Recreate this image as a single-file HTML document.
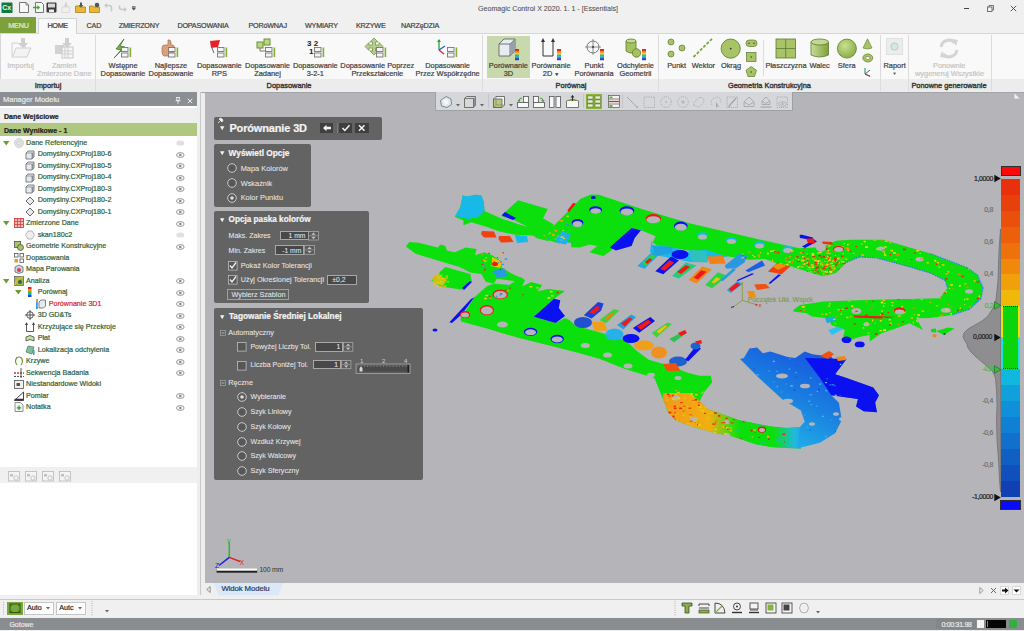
<!DOCTYPE html>
<html><head><meta charset="utf-8"><style>
html,body{margin:0;padding:0;}
body{width:1024px;height:631px;overflow:hidden;position:relative;background:#f0f0f0;font-family:"Liberation Sans",sans-serif;}
.a{position:absolute;}
.t{position:absolute;white-space:nowrap;line-height:1;font-family:"Liberation Sans",sans-serif;-webkit-text-stroke-width:0.2px;}
svg{overflow:visible}
.t[style*="color:#e9e9e9"]{-webkit-text-stroke-width:0.05px}
</style></head><body>
<div class="a" style="left:0px;top:0px;width:1024px;height:17px;background:#f0f0f0"></div>
<div class="a" style="left:0px;top:17px;width:1024px;height:16px;background:#f0f0f0"></div>
<div class="a" style="left:0px;top:33px;width:1024px;height:46px;background:#f9f9f9;border-top:1px solid #d6d6d6;box-sizing:border-box"></div>
<div class="a" style="left:0px;top:33px;width:1px;height:59px;background:#d6d6d6"></div>
<div class="a" style="left:0px;top:79px;width:1024px;height:13px;background:#ececec"></div>
<div class="a" style="left:0px;top:17px;width:36px;height:16px;background:#7da13a"></div>
<div class="t " style="left:8.2px;top:21.92px;font-size:7.3px;color:#e4edd0;font-weight:normal;letter-spacing:-0.2px">MENU</div>
<div class="a" style="left:38px;top:18px;width:39px;height:16px;background:#f9f9f9;border:1px solid #d2d2d2;border-bottom:none;box-sizing:border-box"></div>
<div class="t " style="left:47.5px;top:21.92px;font-size:7.3px;color:#3a3a3a;font-weight:normal;letter-spacing:-0.4px">HOME</div>
<div class="t " style="left:86.6px;top:21.81px;font-size:7.2px;color:#404040;font-weight:normal;"><span style="display:inline-block;transform-origin:0 0;letter-spacing:-0.2px">CAD</span></div>
<div class="t " style="left:118.8px;top:21.81px;font-size:7.2px;color:#404040;font-weight:normal;"><span style="display:inline-block;transform-origin:0 0;letter-spacing:-0.2px">ZMIERZONY</span></div>
<div class="t " style="left:177.4px;top:21.81px;font-size:7.2px;color:#404040;font-weight:normal;"><span style="display:inline-block;transform-origin:0 0;letter-spacing:-0.2px">DOPASOWANIA</span></div>
<div class="t " style="left:248.5px;top:21.81px;font-size:7.2px;color:#404040;font-weight:normal;"><span style="display:inline-block;transform-origin:0 0;letter-spacing:-0.2px">PORóWNAJ</span></div>
<div class="t " style="left:305px;top:21.81px;font-size:7.2px;color:#404040;font-weight:normal;"><span style="display:inline-block;transform-origin:0 0;letter-spacing:-0.2px">WYMIARY</span></div>
<div class="t " style="left:356px;top:21.81px;font-size:7.2px;color:#404040;font-weight:normal;"><span style="display:inline-block;transform-origin:0 0;letter-spacing:-0.2px">KRZYWE</span></div>
<div class="t " style="left:401px;top:21.81px;font-size:7.2px;color:#404040;font-weight:normal;"><span style="display:inline-block;transform-origin:0 0;letter-spacing:-0.2px">NARZęDZIA</span></div>
<div class="t " style="left:478px;top:5.79px;font-size:7.1px;color:#505050;font-weight:normal;-webkit-text-stroke-width:0.08px">Geomagic Control X 2020. 1. 1 - [Essentials]</div>
<div class="a" style="left:0px;top:92px;width:197px;height:14px;background:#8b8e92"></div>
<div class="t " style="left:3px;top:95.65px;font-size:7.5px;color:#e9eaeb;font-weight:normal;">Manager Modelu</div>
<div class="a" style="left:0px;top:106px;width:197px;height:489px;background:#ffffff"></div>
<div class="a" style="left:0px;top:108px;width:197px;height:15px;background:#efefef"></div>
<div class="t " style="left:4px;top:113.07px;font-size:7px;color:#222;font-weight:bold;">Dane Wejściowe</div>
<div class="a" style="left:0px;top:123px;width:197px;height:13px;background:#b0c77f"></div>
<div class="t " style="left:4px;top:126.57px;font-size:7px;color:#222;font-weight:bold;">Dane Wynikowe - 1</div>
<div class="a" style="left:197px;top:92px;width:8px;height:503px;background:#eeeeee"></div>
<div class="a" style="left:200px;top:92px;width:1px;height:503px;background:#c8c8c8"></div>
<div class="a" style="left:205px;top:92px;width:819px;height:491px;background:#b5b4b9"></div>
<div class="a" style="left:201px;top:92px;width:823px;height:1px;background:#a4a5a9"></div>
<div class="a" style="left:201px;top:583px;width:823px;height:12px;background:#efefef"></div>
<div class="a" style="left:0px;top:595px;width:1024px;height:4px;background:#f0f0f0"></div>
<div class="a" style="left:0px;top:599px;width:1024px;height:1px;background:#c6cac6"></div>
<div class="a" style="left:0px;top:600px;width:1024px;height:18px;background:#f0f0f0"></div>
<div class="a" style="left:0px;top:618px;width:1024px;height:11.5px;background:#8a8d90"></div>
<div class="a" style="left:0px;top:629.5px;width:1024px;height:1.5px;background:#f0f0f0"></div>
<div class="t " style="left:9.4px;top:620.77px;font-size:7px;color:#e6e6e6;font-weight:normal;">Gotowe</div>
<div class="a" style="left:95px;top:35px;width:1px;height:56px;background:#dcdcdc"></div>
<div class="a" style="left:482px;top:35px;width:1px;height:56px;background:#dcdcdc"></div>
<div class="a" style="left:658px;top:35px;width:1px;height:56px;background:#dcdcdc"></div>
<div class="a" style="left:880px;top:35px;width:1px;height:56px;background:#dcdcdc"></div>
<div class="a" style="left:907.5px;top:35px;width:1px;height:56px;background:#dcdcdc"></div>
<div class="a" style="left:990.5px;top:35px;width:1px;height:56px;background:#dcdcdc"></div>
<div class="a" style="left:762.5px;top:40px;width:1px;height:36px;background:#dcdcdc"></div>
<svg class="a" style="left:10px;top:38px;" width="22" height="21" viewBox="0 0 22 21"><path d="M2 8 L2 19 L17 19 L21 10 L6 10 L3 18" fill="#f3f3f3" stroke="#d0d0d0" stroke-width="1"/><path d="M2 8 L2 5 L8 5 L10 7 L15 7 L15 10" fill="none" stroke="#d0d0d0"/><path d="M11 0 L15 0 L15 5 L18 5 L13 10 L8 5 L11 5Z" fill="#cfcfcf"/></svg>
<div class="t" style="left:-79.4px;width:200px;text-align:center;top:62.14px;font-size:7.4px;color:#c4c4c4;font-weight:normal;">Importuj</div>
<svg class="a" style="left:54px;top:38px;" width="22" height="21" viewBox="0 0 22 21"><g fill="#d2d2d2"><rect x="1" y="7" width="9" height="9"/></g><rect x="8" y="9" width="11" height="11" fill="#f6f6f6" stroke="#c8c8c8"/><g stroke="#cfcfcf"><path d="M11 9v11M14 9v11M8 13h11M8 16h11"/></g><path d="M11 0 L15 0 L15 5 L18 5 L13 10 L8 5 L11 5Z" fill="#cfcfcf"/></svg>
<div class="t" style="left:-35.8px;width:200px;text-align:center;top:62.14px;font-size:7.4px;color:#c4c4c4;font-weight:normal;">Zamień</div>
<div class="t" style="left:-35.8px;width:200px;text-align:center;top:69.94px;font-size:7.4px;color:#c4c4c4;font-weight:normal;">Zmierzone Dane</div>
<div class="t" style="left:-52px;width:200px;text-align:center;top:81.74px;font-size:7.4px;color:#3a3a3a;font-weight:normal;-webkit-text-stroke-width:0.4px">Importuj</div>
<svg class="a" style="left:112px;top:39px;" width="22" height="20" viewBox="0 0 22 20"><path d="M12 0 L4 10 L9 11 L2 19 L13 8 L8 7 Z" fill="#72b340" stroke="#2d5a20" stroke-width="0.6"/><g transform="translate(9,8)"><rect x="0.5" y="0.5" width="6.5" height="4" fill="#f4f4f4" stroke="#777" stroke-width="0.9"/><rect x="0.5" y="6" width="6.5" height="4" fill="#f4f4f4" stroke="#777" stroke-width="0.9"/><rect x="8.6" y="0.5" width="1.6" height="9.5" fill="#7db03a"/></g></svg>
<div class="t" style="left:23px;width:200px;text-align:center;top:62.14px;font-size:7.4px;color:#3c3c3c;font-weight:normal;">Wstępne</div>
<div class="t" style="left:23px;width:200px;text-align:center;top:69.94px;font-size:7.4px;color:#3c3c3c;font-weight:normal;">Dopasowanie</div>
<svg class="a" style="left:159px;top:39px;" width="22" height="20" viewBox="0 0 22 20"><path d="M3 9 Q3 6 6 6 L9 6 L9 1 Q11 0 12 3 L12 6 L14 6 Q16 7 15 10 L14 15 Q13 17 10 17 L5 17 Q3 16 3 13Z" fill="#d8a27a" stroke="#a0704e" stroke-width="0.7"/><g transform="translate(9,8)"><rect x="0.5" y="0.5" width="6.5" height="4" fill="#f4f4f4" stroke="#777" stroke-width="0.9"/><rect x="0.5" y="6" width="6.5" height="4" fill="#f4f4f4" stroke="#777" stroke-width="0.9"/><rect x="8.6" y="0.5" width="1.6" height="9.5" fill="#7db03a"/></g></svg>
<div class="t" style="left:71px;width:200px;text-align:center;top:62.14px;font-size:7.4px;color:#3c3c3c;font-weight:normal;">Najlepsze</div>
<div class="t" style="left:71px;width:200px;text-align:center;top:69.94px;font-size:7.4px;color:#3c3c3c;font-weight:normal;">Dopasowanie</div>
<svg class="a" style="left:208px;top:39px;" width="22" height="20" viewBox="0 0 22 20"><path d="M2 2 L12 1 L10 8 L3 9Z" fill="#e8202a"/><path d="M4 9 L6 14" stroke="#666" stroke-width="1"/><g transform="translate(9,8)"><rect x="0.5" y="0.5" width="6.5" height="4" fill="#f4f4f4" stroke="#777" stroke-width="0.9"/><rect x="0.5" y="6" width="6.5" height="4" fill="#f4f4f4" stroke="#777" stroke-width="0.9"/><rect x="8.6" y="0.5" width="1.6" height="9.5" fill="#7db03a"/></g></svg>
<div class="t" style="left:119.30000000000001px;width:200px;text-align:center;top:62.14px;font-size:7.4px;color:#3c3c3c;font-weight:normal;">Dopasowanie</div>
<div class="t" style="left:119.30000000000001px;width:200px;text-align:center;top:69.94px;font-size:7.4px;color:#3c3c3c;font-weight:normal;">RPS</div>
<svg class="a" style="left:256px;top:39px;" width="22" height="20" viewBox="0 0 22 20"><rect x="1" y="3" width="6" height="6" fill="#b9d77f" stroke="#6a8f3a"/><rect x="8" y="0" width="6" height="6" fill="#b9d77f" stroke="#6a8f3a"/><path d="M4 9 V12 H9" stroke="#777" fill="none"/><g transform="translate(9,8)"><rect x="0.5" y="0.5" width="6.5" height="4" fill="#f4f4f4" stroke="#777" stroke-width="0.9"/><rect x="0.5" y="6" width="6.5" height="4" fill="#f4f4f4" stroke="#777" stroke-width="0.9"/><rect x="8.6" y="0.5" width="1.6" height="9.5" fill="#7db03a"/></g></svg>
<div class="t" style="left:167.5px;width:200px;text-align:center;top:62.14px;font-size:7.4px;color:#3c3c3c;font-weight:normal;">Dopasowanie</div>
<div class="t" style="left:167.5px;width:200px;text-align:center;top:69.94px;font-size:7.4px;color:#3c3c3c;font-weight:normal;">Zadanej</div>
<svg class="a" style="left:305px;top:39px;" width="22" height="20" viewBox="0 0 22 20"><text x="2" y="7" font-family="Liberation Sans" font-weight="bold" font-size="8" fill="#222">3 2</text><text x="4" y="15" font-family="Liberation Sans" font-weight="bold" font-size="8" fill="#222">1</text><g transform="translate(9,8)"><rect x="0.5" y="0.5" width="6.5" height="4" fill="#f4f4f4" stroke="#777" stroke-width="0.9"/><rect x="0.5" y="6" width="6.5" height="4" fill="#f4f4f4" stroke="#777" stroke-width="0.9"/><rect x="8.6" y="0.5" width="1.6" height="9.5" fill="#7db03a"/></g></svg>
<div class="t" style="left:215.3px;width:200px;text-align:center;top:62.14px;font-size:7.4px;color:#3c3c3c;font-weight:normal;">Dopasowanie</div>
<div class="t" style="left:215.3px;width:200px;text-align:center;top:69.94px;font-size:7.4px;color:#3c3c3c;font-weight:normal;">3-2-1</div>
<svg class="a" style="left:366px;top:38px;" width="22" height="21" viewBox="0 0 22 21"><path d="M8 0 L12 4 L9.5 4 L9.5 7 L13 7 L13 4.5 L17 8.5 L13 12.5 L13 10 L9.5 10 L9.5 13 L12 13 L8 17 L4 13 L6.5 13 L6.5 10 L3 10 L3 12.5 L-1 8.5 L3 4.5 L3 7 L6.5 7 L6.5 4 L4 4Z" fill="#b5cf8a" stroke="#6b8c47" stroke-width="0.7"/><g transform="translate(10,9)"><rect x="0.5" y="0.5" width="6.5" height="4" fill="#f4f4f4" stroke="#777" stroke-width="0.9"/><rect x="0.5" y="6" width="6.5" height="4" fill="#f4f4f4" stroke="#777" stroke-width="0.9"/><rect x="8.6" y="0.5" width="1.6" height="9.5" fill="#7db03a"/></g></svg>
<div class="t" style="left:277.3px;width:200px;text-align:center;top:62.14px;font-size:7.4px;color:#3c3c3c;font-weight:normal;">Dopasowanie Poprzez</div>
<div class="t" style="left:277.3px;width:200px;text-align:center;top:69.94px;font-size:7.4px;color:#3c3c3c;font-weight:normal;">Przekształcenie</div>
<svg class="a" style="left:437px;top:38px;" width="22" height="21" viewBox="0 0 22 21"><path d="M2 12 L2 2" stroke="#2aa040" stroke-width="1.3"/><path d="M2 12 L8 8" stroke="#2060d0" stroke-width="1.3"/><path d="M2 12 L7 16" stroke="#d02040" stroke-width="1.3"/><path d="M2 1 L0 4 L4 4Z" fill="#2aa040"/><g transform="translate(10,9)"><rect x="0.5" y="0.5" width="6.5" height="4" fill="#f4f4f4" stroke="#777" stroke-width="0.9"/><rect x="0.5" y="6" width="6.5" height="4" fill="#f4f4f4" stroke="#777" stroke-width="0.9"/><rect x="8.6" y="0.5" width="1.6" height="9.5" fill="#7db03a"/></g></svg>
<div class="t" style="left:347.6px;width:200px;text-align:center;top:62.14px;font-size:7.4px;color:#3c3c3c;font-weight:normal;">Dopasowanie</div>
<div class="t" style="left:347.6px;width:200px;text-align:center;top:69.94px;font-size:7.4px;color:#3c3c3c;font-weight:normal;">Przez Współrzędne</div>
<div class="t" style="left:189px;width:200px;text-align:center;top:81.74px;font-size:7.4px;color:#3a3a3a;font-weight:normal;-webkit-text-stroke-width:0.4px">Dopasowanie</div>
<div class="a" style="left:487px;top:36px;width:43px;height:42px;background:#c8d9ae"></div>
<svg class="a" style="left:496px;top:38px;" width="26" height="22" viewBox="0 0 26 22"><path d="M3 6 L8 1 L19 1 L19 13 L14 18 L3 18Z" fill="#e8ecf2" stroke="#555" stroke-width="0.8"/><path d="M3 6 L14 6 L19 1 M14 6 L14 18" fill="none" stroke="#555" stroke-width="0.8"/><path d="M14 6 L19 1 L19 13 L14 18Z" fill="#9aa0a8"/><rect x="19" y="11.00" width="4" height="2.03" fill="#e82020"/><rect x="19" y="12.83" width="4" height="2.03" fill="#f08010"/><rect x="19" y="14.67" width="4" height="2.03" fill="#f0d010"/><rect x="19" y="16.50" width="4" height="2.03" fill="#40c040"/><rect x="19" y="18.33" width="4" height="2.03" fill="#20a0e0"/><rect x="19" y="20.17" width="4" height="2.03" fill="#2040d0"/></svg>
<div class="t" style="left:408.4px;width:200px;text-align:center;top:62.14px;font-size:7.4px;color:#3c3c3c;font-weight:normal;">Porównanie</div>
<div class="t" style="left:408.4px;width:200px;text-align:center;top:69.94px;font-size:7.4px;color:#3c3c3c;font-weight:normal;">3D</div>
<svg class="a" style="left:540px;top:38px;" width="26" height="22" viewBox="0 0 26 22"><path d="M3 3 V18 H13 V3" fill="none" stroke="#333" stroke-width="1"/><path d="M3 0 L1 4 L5 4Z M13 0 L11 4 L15 4Z" fill="#333"/><rect x="17" y="11.00" width="4" height="2.03" fill="#e82020"/><rect x="17" y="12.83" width="4" height="2.03" fill="#f08010"/><rect x="17" y="14.67" width="4" height="2.03" fill="#f0d010"/><rect x="17" y="16.50" width="4" height="2.03" fill="#40c040"/><rect x="17" y="18.33" width="4" height="2.03" fill="#20a0e0"/><rect x="17" y="20.17" width="4" height="2.03" fill="#2040d0"/></svg>
<div class="t" style="left:451px;width:200px;text-align:center;top:62.14px;font-size:7.4px;color:#3c3c3c;font-weight:normal;">Porównanie</div>
<div class="t" style="left:451px;width:200px;text-align:center;top:69.94px;font-size:7.4px;color:#3c3c3c;font-weight:normal;">2D <span style="font-size:5px">▼</span></div>
<svg class="a" style="left:583px;top:38px;" width="26" height="22" viewBox="0 0 26 22"><circle cx="10" cy="9" r="6" fill="none" stroke="#777" stroke-width="1"/><path d="M10 1 V17 M2 9 H18" stroke="#777" stroke-width="0.8"/><circle cx="10" cy="9" r="1.2" fill="#555"/><rect x="17" y="11.00" width="4" height="2.03" fill="#e82020"/><rect x="17" y="12.83" width="4" height="2.03" fill="#f08010"/><rect x="17" y="14.67" width="4" height="2.03" fill="#f0d010"/><rect x="17" y="16.50" width="4" height="2.03" fill="#40c040"/><rect x="17" y="18.33" width="4" height="2.03" fill="#20a0e0"/><rect x="17" y="20.17" width="4" height="2.03" fill="#2040d0"/></svg>
<div class="t" style="left:494px;width:200px;text-align:center;top:62.14px;font-size:7.4px;color:#3c3c3c;font-weight:normal;">Punkt</div>
<div class="t" style="left:494px;width:200px;text-align:center;top:69.94px;font-size:7.4px;color:#3c3c3c;font-weight:normal;">Porównania</div>
<svg class="a" style="left:624px;top:38px;" width="26" height="22" viewBox="0 0 26 22"><path d="M2 3 V13 Q7 17 12 13 V3" fill="#a5c25f" stroke="#5b7a2a" stroke-width="0.8"/><ellipse cx="7" cy="3" rx="5" ry="2" fill="#c6dc95" stroke="#5b7a2a" stroke-width="0.8"/><circle cx="12.5" cy="15" r="4.2" fill="#a5c25f" stroke="#5b7a2a" stroke-width="0.8"/><rect x="18" y="11.00" width="4" height="2.03" fill="#e82020"/><rect x="18" y="12.83" width="4" height="2.03" fill="#f08010"/><rect x="18" y="14.67" width="4" height="2.03" fill="#f0d010"/><rect x="18" y="16.50" width="4" height="2.03" fill="#40c040"/><rect x="18" y="18.33" width="4" height="2.03" fill="#20a0e0"/><rect x="18" y="20.17" width="4" height="2.03" fill="#2040d0"/></svg>
<div class="t" style="left:535.5px;width:200px;text-align:center;top:62.14px;font-size:7.4px;color:#3c3c3c;font-weight:normal;">Odchylenie</div>
<div class="t" style="left:535.5px;width:200px;text-align:center;top:69.94px;font-size:7.4px;color:#3c3c3c;font-weight:normal;">Geometrii</div>
<div class="t" style="left:471px;width:200px;text-align:center;top:81.74px;font-size:7.4px;color:#3a3a3a;font-weight:normal;-webkit-text-stroke-width:0.4px">Porównaj</div>
<svg class="a" style="left:666px;top:38px;" width="22" height="22" viewBox="0 0 22 22"><circle cx="5" cy="4" r="3" fill="#a9c466" stroke="#5d7a2e" stroke-width="0.7"/><circle cx="16" cy="10" r="3" fill="#a9c466" stroke="#5d7a2e" stroke-width="0.7"/><circle cx="5" cy="16" r="3" fill="#a9c466" stroke="#5d7a2e" stroke-width="0.7"/></svg>
<div class="t" style="left:576.6px;width:200px;text-align:center;top:62.14px;font-size:7.4px;color:#3c3c3c;font-weight:normal;">Punkt</div>
<svg class="a" style="left:692px;top:38px;" width="22" height="22" viewBox="0 0 22 22"><path d="M1.5 19 L20 0.8" stroke="#7aa83a" stroke-width="1.8" stroke-dasharray="3 1.6"/></svg>
<div class="t" style="left:603.4px;width:200px;text-align:center;top:62.14px;font-size:7.4px;color:#3c3c3c;font-weight:normal;">Wektor</div>
<svg class="a" style="left:720px;top:38px;" width="22" height="22" viewBox="0 0 22 22"><circle cx="10.7" cy="10.6" r="9.6" fill="#a9c466" stroke="#5d7a2e" stroke-width="0.8"/><circle cx="10.7" cy="10.6" r="0.9" fill="#333"/></svg>
<div class="t" style="left:631px;width:200px;text-align:center;top:62.14px;font-size:7.4px;color:#3c3c3c;font-weight:normal;">Okrąg</div>
<svg class="a" style="left:745px;top:39px;" width="13" height="39" viewBox="0 0 13 39"><rect x="1" y="1" width="11" height="6.5" rx="3.2" fill="#a9c466" stroke="#5d7a2e" stroke-width="0.7"/><circle cx="4" cy="4.2" r="0.7" fill="#333"/><circle cx="9" cy="4.2" r="0.7" fill="#333"/><rect x="1.5" y="13.5" width="9.5" height="9" fill="#a9c466" stroke="#5d7a2e" stroke-width="0.7"/><circle cx="6.2" cy="18" r="0.7" fill="#333"/><path d="M6.2 27.5 L11.5 31.3 L9.5 37.5 L3 37.5 L1 31.3Z" fill="#a9c466" stroke="#5d7a2e" stroke-width="0.7"/><circle cx="6.2" cy="33" r="0.7" fill="#333"/></svg>
<svg class="a" style="left:775px;top:38px;" width="22" height="22" viewBox="0 0 22 22"><rect x="1" y="1" width="19.5" height="19" fill="#a9c466" stroke="#5d7a2e" stroke-width="0.8"/><path d="M10.7 1 V20 M1 10.5 H20.5" stroke="#5d7a2e" stroke-width="0.8"/></svg>
<div class="t" style="left:686px;width:200px;text-align:center;top:62.14px;font-size:7.4px;color:#3c3c3c;font-weight:normal;">Płaszczyzna</div>
<svg class="a" style="left:810px;top:38px;" width="22" height="22" viewBox="0 0 22 22"><defs><linearGradient id="gw" x1="0" x2="1"><stop offset="0" stop-color="#c8dc98"/><stop offset="1" stop-color="#7ea03a"/></linearGradient></defs><path d="M1 4 V17 Q9.5 21 18.5 17 V4" fill="url(#gw)" stroke="#5d7a2e" stroke-width="0.8"/><ellipse cx="9.75" cy="4" rx="8.75" ry="3" fill="#c3d98f" stroke="#5d7a2e" stroke-width="0.8"/></svg>
<div class="t" style="left:719.7px;width:200px;text-align:center;top:62.14px;font-size:7.4px;color:#3c3c3c;font-weight:normal;">Walec</div>
<svg class="a" style="left:836px;top:38px;" width="22" height="22" viewBox="0 0 22 22"><defs><radialGradient id="gs" cx="0.4" cy="0.35" r="0.7"><stop offset="0" stop-color="#c9e08f"/><stop offset="1" stop-color="#86ab44"/></radialGradient></defs><circle cx="10.9" cy="10.6" r="9.5" fill="url(#gs)" stroke="#5d7a2e" stroke-width="0.8"/></svg>
<div class="t" style="left:746.7px;width:200px;text-align:center;top:62.14px;font-size:7.4px;color:#3c3c3c;font-weight:normal;">Sfera</div>
<svg class="a" style="left:861px;top:38px;" width="13" height="40" viewBox="0 0 13 40"><path d="M6.5 0.8 L11 10 Q6.5 12 2 10Z" fill="#a9c466" stroke="#5d7a2e" stroke-width="0.6"/><ellipse cx="6.8" cy="20" rx="5" ry="4" fill="#a9c466" stroke="#5d7a2e" stroke-width="0.7"/><ellipse cx="6.8" cy="20" rx="2.2" ry="1.6" fill="#f9f9f9" stroke="#5d7a2e" stroke-width="0.6"/><path d="M4 30 V36 L9 38" fill="none" stroke="#2a8a3a" stroke-width="1"/><path d="M4 36 L9 32" stroke="#2060d0" stroke-width="1"/><path d="M4 36 L9 38.5" stroke="#d02040" stroke-width="1"/></svg>
<div class="t" style="left:669.4px;width:200px;text-align:center;top:81.74px;font-size:7.4px;color:#3a3a3a;font-weight:normal;-webkit-text-stroke-width:0.4px">Geometria Konstrukcyjna</div>
<svg class="a" style="left:886px;top:38px;" width="17" height="17" viewBox="0 0 17 17"><rect x="0.5" y="0.5" width="16" height="16" fill="#ececec" stroke="#e0e0e0"/><circle cx="8.5" cy="8.5" r="3.6" fill="#d5eadb" stroke="#a8c8b0" stroke-width="0.8"/></svg>
<div class="t" style="left:794.6px;width:200px;text-align:center;top:62.14px;font-size:7.4px;color:#3c3c3c;font-weight:normal;">Raport</div>
<div class="t" style="left:794.6px;width:200px;text-align:center;top:71.61px;font-size:4px;color:#555;font-weight:normal;">▼</div>
<svg class="a" style="left:938px;top:38px;" width="22" height="22" viewBox="0 0 22 22"><path d="M3 9 A8 8 0 0 1 17 5" fill="none" stroke="#d4d4d4" stroke-width="3"/><path d="M19 12 A8 8 0 0 1 5 16" fill="none" stroke="#d4d4d4" stroke-width="3"/><path d="M14 1 L20 2 L18 8Z" fill="#d4d4d4"/><path d="M8 20 L2 19 L4 13Z" fill="#d4d4d4"/></svg>
<div class="t" style="left:849.2px;width:200px;text-align:center;top:62.14px;font-size:7.4px;color:#c4c4c4;font-weight:normal;">Ponownie</div>
<div class="t" style="left:849.5px;width:200px;text-align:center;top:69.94px;font-size:7.4px;color:#c4c4c4;font-weight:normal;">wygeneruj Wszystkie</div>
<div class="t" style="left:849px;width:200px;text-align:center;top:81.74px;font-size:7.4px;color:#3a3a3a;font-weight:normal;-webkit-text-stroke-width:0.4px">Ponowne generowanie</div>
<div class="t " style="left:26px;top:139.85px;font-size:7.15px;color:#2e5e38;font-weight:normal;">Dane Referencyjne</div>
<svg class="a" style="left:3px;top:140.5px;" width="7" height="5" viewBox="0 0 7 5"><path d="M0 0 L6.5 0 L3.25 4.5Z" fill="#6f9a35"/></svg>
<svg class="a" style="left:176px;top:140.0px;" width="9" height="6" viewBox="0 0 9 6"><ellipse cx="4.3" cy="3" rx="4" ry="2.6" fill="#e0e0e0"/></svg>
<svg class="a" style="left:13.5px;top:137.5px;" width="10" height="10" viewBox="0 0 10 10"><circle cx="5" cy="5" r="4.5" fill="#e4e4e4" stroke="#c8c8c8" stroke-width="0.8"/><circle cx="5" cy="5" r="2.3" fill="none" stroke="#c8c8c8" stroke-width="0.7"/></svg>
<div class="t " style="left:37.7px;top:151.35px;font-size:7.15px;color:#2e5e38;font-weight:normal;">Domyślny.CXProj180-6</div>
<svg class="a" style="left:176px;top:151.5px;" width="9" height="6" viewBox="0 0 9 6"><ellipse cx="4.3" cy="3" rx="3.8" ry="2.4" fill="none" stroke="#888" stroke-width="0.9"/><circle cx="4.3" cy="3" r="1.3" fill="#888"/></svg>
<svg class="a" style="left:25.200000000000003px;top:149.5px;" width="10" height="10" viewBox="0 0 10 10"><path d="M1 3 L3 1 L9 1 L9 7 L7 9 L1 9Z" fill="#e6eaf0" stroke="#666" stroke-width="0.8"/><path d="M7 3 L9 1 L9 7 L7 9Z" fill="#9aa0a8"/><path d="M1 3 L7 3 L7 9" fill="none" stroke="#666" stroke-width="0.6"/></svg>
<div class="t " style="left:37.7px;top:162.85px;font-size:7.15px;color:#2e5e38;font-weight:normal;">Domyślny.CXProj180-5</div>
<svg class="a" style="left:176px;top:163.0px;" width="9" height="6" viewBox="0 0 9 6"><ellipse cx="4.3" cy="3" rx="3.8" ry="2.4" fill="none" stroke="#888" stroke-width="0.9"/><circle cx="4.3" cy="3" r="1.3" fill="#888"/></svg>
<svg class="a" style="left:25.200000000000003px;top:161.0px;" width="10" height="10" viewBox="0 0 10 10"><path d="M1 3 L3 1 L9 1 L9 7 L7 9 L1 9Z" fill="#e6eaf0" stroke="#666" stroke-width="0.8"/><path d="M7 3 L9 1 L9 7 L7 9Z" fill="#9aa0a8"/><path d="M1 3 L7 3 L7 9" fill="none" stroke="#666" stroke-width="0.6"/></svg>
<div class="t " style="left:37.7px;top:174.35px;font-size:7.15px;color:#2e5e38;font-weight:normal;">Domyślny.CXProj180-4</div>
<svg class="a" style="left:176px;top:174.5px;" width="9" height="6" viewBox="0 0 9 6"><ellipse cx="4.3" cy="3" rx="3.8" ry="2.4" fill="none" stroke="#888" stroke-width="0.9"/><circle cx="4.3" cy="3" r="1.3" fill="#888"/></svg>
<svg class="a" style="left:25.200000000000003px;top:172.5px;" width="10" height="10" viewBox="0 0 10 10"><path d="M1 3 L3 1 L9 1 L9 7 L7 9 L1 9Z" fill="#e6eaf0" stroke="#666" stroke-width="0.8"/><path d="M7 3 L9 1 L9 7 L7 9Z" fill="#9aa0a8"/><path d="M1 3 L7 3 L7 9" fill="none" stroke="#666" stroke-width="0.6"/></svg>
<div class="t " style="left:37.7px;top:185.85px;font-size:7.15px;color:#2e5e38;font-weight:normal;">Domyślny.CXProj180-3</div>
<svg class="a" style="left:176px;top:186.0px;" width="9" height="6" viewBox="0 0 9 6"><ellipse cx="4.3" cy="3" rx="3.8" ry="2.4" fill="none" stroke="#888" stroke-width="0.9"/><circle cx="4.3" cy="3" r="1.3" fill="#888"/></svg>
<svg class="a" style="left:25.200000000000003px;top:184.0px;" width="10" height="10" viewBox="0 0 10 10"><path d="M1 3 L3 1 L9 1 L9 7 L7 9 L1 9Z" fill="#e6eaf0" stroke="#666" stroke-width="0.8"/><path d="M7 3 L9 1 L9 7 L7 9Z" fill="#9aa0a8"/><path d="M1 3 L7 3 L7 9" fill="none" stroke="#666" stroke-width="0.6"/></svg>
<div class="t " style="left:37.7px;top:197.35px;font-size:7.15px;color:#2e5e38;font-weight:normal;">Domyślny.CXProj180-2</div>
<svg class="a" style="left:176px;top:197.5px;" width="9" height="6" viewBox="0 0 9 6"><ellipse cx="4.3" cy="3" rx="3.8" ry="2.4" fill="none" stroke="#888" stroke-width="0.9"/><circle cx="4.3" cy="3" r="1.3" fill="#888"/></svg>
<svg class="a" style="left:25.200000000000003px;top:195.5px;" width="10" height="10" viewBox="0 0 10 10"><path d="M5 1 L9 5 L5 9 L1 5Z" fill="#e6eaf0" stroke="#555" stroke-width="0.9"/></svg>
<div class="t " style="left:37.7px;top:208.85px;font-size:7.15px;color:#2e5e38;font-weight:normal;">Domyślny.CXProj180-1</div>
<svg class="a" style="left:176px;top:209.0px;" width="9" height="6" viewBox="0 0 9 6"><ellipse cx="4.3" cy="3" rx="3.8" ry="2.4" fill="none" stroke="#888" stroke-width="0.9"/><circle cx="4.3" cy="3" r="1.3" fill="#888"/></svg>
<svg class="a" style="left:25.200000000000003px;top:207.0px;" width="10" height="10" viewBox="0 0 10 10"><path d="M5 1 L9 5 L5 9 L1 5Z" fill="#e6eaf0" stroke="#555" stroke-width="0.9"/></svg>
<div class="t " style="left:26px;top:220.35px;font-size:7.15px;color:#2e5e38;font-weight:normal;">Zmierzone Dane</div>
<svg class="a" style="left:3px;top:221.0px;" width="7" height="5" viewBox="0 0 7 5"><path d="M0 0 L6.5 0 L3.25 4.5Z" fill="#6f9a35"/></svg>
<svg class="a" style="left:176px;top:220.5px;" width="9" height="6" viewBox="0 0 9 6"><ellipse cx="4.3" cy="3" rx="3.8" ry="2.4" fill="none" stroke="#888" stroke-width="0.9"/><circle cx="4.3" cy="3" r="1.3" fill="#888"/></svg>
<svg class="a" style="left:13.5px;top:218.0px;" width="10" height="10" viewBox="0 0 10 10"><rect x="0.5" y="0.5" width="9" height="9" fill="#f4b8b8" stroke="#d03030" stroke-width="0.8"/><path d="M3.5 0.5V9.5M6.5 0.5V9.5M0.5 3.5H9.5M0.5 6.5H9.5" stroke="#d03030" stroke-width="0.7"/></svg>
<div class="t " style="left:37.7px;top:231.85px;font-size:7.15px;color:#2e5e38;font-weight:normal;">skan180c2</div>
<svg class="a" style="left:176px;top:232.0px;" width="9" height="6" viewBox="0 0 9 6"><ellipse cx="4.3" cy="3" rx="4" ry="2.6" fill="#e0e0e0"/></svg>
<svg class="a" style="left:25.200000000000003px;top:229.5px;" width="10" height="10" viewBox="0 0 10 10"><path d="M3 1 L7 1 L9.5 5 L7 9 L3 9 L0.5 5Z" fill="#eeeeee" stroke="#aaa" stroke-width="0.8"/></svg>
<div class="t " style="left:26px;top:243.35px;font-size:7.15px;color:#2e5e38;font-weight:normal;">Geometrie Konstrukcyjne</div>
<svg class="a" style="left:176px;top:243.5px;" width="9" height="6" viewBox="0 0 9 6"><ellipse cx="4.3" cy="3" rx="3.8" ry="2.4" fill="none" stroke="#888" stroke-width="0.9"/><circle cx="4.3" cy="3" r="1.3" fill="#888"/></svg>
<svg class="a" style="left:13.5px;top:241.0px;" width="10" height="10" viewBox="0 0 10 10"><rect x="0.5" y="0.5" width="6" height="6" fill="#a9c466" stroke="#444" stroke-width="0.7"/><circle cx="6.5" cy="6.5" r="3" fill="#a9c466" stroke="#444" stroke-width="0.7"/></svg>
<div class="t " style="left:26px;top:254.85px;font-size:7.15px;color:#2e5e38;font-weight:normal;">Dopasowania</div>
<svg class="a" style="left:13.5px;top:252.5px;" width="10" height="10" viewBox="0 0 10 10"><rect x="0.5" y="0.5" width="3.5" height="3.5" fill="none" stroke="#555" stroke-width="0.8"/><rect x="6" y="0.5" width="3.5" height="3.5" fill="none" stroke="#555" stroke-width="0.8"/><rect x="0.5" y="6" width="3.5" height="3.5" fill="#e6a020"/><rect x="6" y="6" width="3.5" height="3.5" fill="none" stroke="#555" stroke-width="0.8"/></svg>
<div class="t " style="left:26px;top:266.35px;font-size:7.15px;color:#2e5e38;font-weight:normal;">Mapa Parowania</div>
<svg class="a" style="left:13.5px;top:264.0px;" width="10" height="10" viewBox="0 0 10 10"><path d="M1 3 L5 1 L9 3 L9 8 L5 9.5 L1 8Z" fill="#c8d8e8" stroke="#555" stroke-width="0.7"/><circle cx="5" cy="6" r="2" fill="#e04040"/></svg>
<div class="t " style="left:26px;top:277.85px;font-size:7.15px;color:#2e5e38;font-weight:normal;">Analiza</div>
<svg class="a" style="left:3px;top:278.5px;" width="7" height="5" viewBox="0 0 7 5"><path d="M0 0 L6.5 0 L3.25 4.5Z" fill="#6f9a35"/></svg>
<svg class="a" style="left:176px;top:278.0px;" width="9" height="6" viewBox="0 0 9 6"><ellipse cx="4.3" cy="3" rx="3.8" ry="2.4" fill="none" stroke="#888" stroke-width="0.9"/><circle cx="4.3" cy="3" r="1.3" fill="#888"/></svg>
<svg class="a" style="left:13.5px;top:275.5px;" width="10" height="10" viewBox="0 0 10 10"><rect x="0.5" y="0.5" width="9" height="9" fill="#8fbf50" stroke="#555" stroke-width="0.7"/><path d="M1 9 Q2 2 9 1" stroke="#e0c020" stroke-width="1.5" fill="none"/><circle cx="6" cy="6" r="2" fill="#555"/></svg>
<div class="t " style="left:37.7px;top:289.35px;font-size:7.15px;color:#2e5e38;font-weight:normal;">Porównaj</div>
<svg class="a" style="left:14.5px;top:290.0px;" width="7" height="5" viewBox="0 0 7 5"><path d="M0 0 L6.5 0 L3.25 4.5Z" fill="#6f9a35"/></svg>
<svg class="a" style="left:176px;top:289.5px;" width="9" height="6" viewBox="0 0 9 6"><ellipse cx="4.3" cy="3" rx="3.8" ry="2.4" fill="none" stroke="#888" stroke-width="0.9"/><circle cx="4.3" cy="3" r="1.3" fill="#888"/></svg>
<svg class="a" style="left:28.200000000000003px;top:287.0px;" width="4" height="10" viewBox="0 0 4 10"><rect x="0" y="0" width="3.5" height="2" fill="#e82020"/><rect x="0" y="2" width="3.5" height="2" fill="#f0a010"/><rect x="0" y="4" width="3.5" height="2" fill="#40c040"/><rect x="0" y="6" width="3.5" height="2" fill="#20a0e0"/><rect x="0" y="8" width="3.5" height="2" fill="#2040d0"/></svg>
<div class="t " style="left:48.7px;top:300.85px;font-size:7.15px;color:#e0202c;font-weight:normal;">Porównanie 3D1</div>
<svg class="a" style="left:176px;top:301.0px;" width="9" height="6" viewBox="0 0 9 6"><ellipse cx="4.3" cy="3" rx="3.8" ry="2.4" fill="none" stroke="#888" stroke-width="0.9"/><circle cx="4.3" cy="3" r="1.3" fill="#888"/></svg>
<svg class="a" style="left:36.2px;top:298.5px;" width="10" height="10" viewBox="0 0 10 10"><rect x="0" y="0" width="1.8" height="10" fill="#30a0e0"/><rect x="0" y="0" width="1.8" height="3" fill="#f0a010"/><path d="M3 3 L5 1 L9.5 1 L9.5 7 L7.5 9 L3 9Z" fill="#e6eaf0" stroke="#666" stroke-width="0.8"/></svg>
<div class="t " style="left:37.7px;top:312.35px;font-size:7.15px;color:#2e5e38;font-weight:normal;">3D GD&amp;Ts</div>
<svg class="a" style="left:176px;top:312.5px;" width="9" height="6" viewBox="0 0 9 6"><ellipse cx="4.3" cy="3" rx="3.8" ry="2.4" fill="none" stroke="#888" stroke-width="0.9"/><circle cx="4.3" cy="3" r="1.3" fill="#888"/></svg>
<svg class="a" style="left:25.200000000000003px;top:310.0px;" width="10" height="10" viewBox="0 0 10 10"><circle cx="5" cy="5" r="3.3" fill="none" stroke="#444" stroke-width="0.9"/><path d="M5 0V10M0 5H10" stroke="#444" stroke-width="0.9"/></svg>
<div class="t " style="left:37.7px;top:323.85px;font-size:7.15px;color:#2e5e38;font-weight:normal;">Krzyżujące się Przekroje</div>
<svg class="a" style="left:176px;top:324.0px;" width="9" height="6" viewBox="0 0 9 6"><ellipse cx="4.3" cy="3" rx="3.8" ry="2.4" fill="none" stroke="#888" stroke-width="0.9"/><circle cx="4.3" cy="3" r="1.3" fill="#888"/></svg>
<svg class="a" style="left:25.200000000000003px;top:321.5px;" width="10" height="10" viewBox="0 0 10 10"><path d="M1.5 3V9.5H8.5V3" fill="none" stroke="#444" stroke-width="0.9"/><path d="M1.5 0L0 3H3ZM8.5 0L7 3H10Z" fill="#444"/></svg>
<div class="t " style="left:37.7px;top:335.35px;font-size:7.15px;color:#2e5e38;font-weight:normal;">Płat</div>
<svg class="a" style="left:176px;top:335.5px;" width="9" height="6" viewBox="0 0 9 6"><ellipse cx="4.3" cy="3" rx="3.8" ry="2.4" fill="none" stroke="#888" stroke-width="0.9"/><circle cx="4.3" cy="3" r="1.3" fill="#888"/></svg>
<svg class="a" style="left:25.200000000000003px;top:333.0px;" width="10" height="10" viewBox="0 0 10 10"><path d="M1 4 Q5 1 9 4 L9 8 Q5 5 1 8Z" fill="#c8e0a0" stroke="#444" stroke-width="0.8"/></svg>
<div class="t " style="left:37.7px;top:346.85px;font-size:7.15px;color:#2e5e38;font-weight:normal;">Lokalizacja odchylenia</div>
<svg class="a" style="left:176px;top:347.0px;" width="9" height="6" viewBox="0 0 9 6"><ellipse cx="4.3" cy="3" rx="3.8" ry="2.4" fill="none" stroke="#888" stroke-width="0.9"/><circle cx="4.3" cy="3" r="1.3" fill="#888"/></svg>
<svg class="a" style="left:25.200000000000003px;top:344.5px;" width="10" height="10" viewBox="0 0 10 10"><path d="M1 7 L3 1 L9 2 L7 9Z" fill="#7fbf9f" stroke="#4a7a5a" stroke-width="0.7"/><rect x="8" y="5" width="1.5" height="5" fill="#30a0e0"/></svg>
<div class="t " style="left:26px;top:358.35px;font-size:7.15px;color:#2e5e38;font-weight:normal;">Krzywe</div>
<svg class="a" style="left:176px;top:358.5px;" width="9" height="6" viewBox="0 0 9 6"><ellipse cx="4.3" cy="3" rx="3.8" ry="2.4" fill="none" stroke="#888" stroke-width="0.9"/><circle cx="4.3" cy="3" r="1.3" fill="#888"/></svg>
<svg class="a" style="left:13.5px;top:356.0px;" width="10" height="10" viewBox="0 0 10 10"><path d="M3 9 Q0 5 3 1.5 Q5 0.5 7 1.5 Q10 5 7 9" fill="none" stroke="#6f9a35" stroke-width="1.2"/></svg>
<div class="t " style="left:26px;top:369.85px;font-size:7.15px;color:#2e5e38;font-weight:normal;">Sekwencja Badania</div>
<svg class="a" style="left:176px;top:370.0px;" width="9" height="6" viewBox="0 0 9 6"><ellipse cx="4.3" cy="3" rx="3.8" ry="2.4" fill="none" stroke="#888" stroke-width="0.9"/><circle cx="4.3" cy="3" r="1.3" fill="#888"/></svg>
<svg class="a" style="left:13.5px;top:367.5px;" width="10" height="10" viewBox="0 0 10 10"><path d="M0 5H10" stroke="#e03030" stroke-width="1.5" stroke-dasharray="2 1"/><path d="M7 0V10" stroke="#555" stroke-width="1"/><path d="M0 8.5H10" stroke="#555" stroke-width="1" stroke-dasharray="2 1"/></svg>
<div class="t " style="left:26px;top:381.35px;font-size:7.15px;color:#2e5e38;font-weight:normal;">Niestandardowe Widoki</div>
<svg class="a" style="left:13.5px;top:379.0px;" width="10" height="10" viewBox="0 0 10 10"><rect x="0.5" y="1.5" width="9" height="8" fill="#f0f0f0" stroke="#555" stroke-width="0.8"/><rect x="2.5" y="4" width="3.5" height="3" fill="#555"/></svg>
<div class="t " style="left:26px;top:392.85px;font-size:7.15px;color:#2e5e38;font-weight:normal;">Pomiar</div>
<svg class="a" style="left:176px;top:393.0px;" width="9" height="6" viewBox="0 0 9 6"><ellipse cx="4.3" cy="3" rx="3.8" ry="2.4" fill="none" stroke="#888" stroke-width="0.9"/><circle cx="4.3" cy="3" r="1.3" fill="#888"/></svg>
<svg class="a" style="left:13.5px;top:390.5px;" width="10" height="10" viewBox="0 0 10 10"><path d="M0.5 9.5 L9.5 1 L9.5 9.5Z" fill="none" stroke="#333" stroke-width="0.9"/><path d="M0.5 8.5H9.5" stroke="#333" stroke-width="1.5"/></svg>
<div class="t " style="left:26px;top:404.35px;font-size:7.15px;color:#2e5e38;font-weight:normal;">Notatka</div>
<svg class="a" style="left:176px;top:404.5px;" width="9" height="6" viewBox="0 0 9 6"><ellipse cx="4.3" cy="3" rx="3.8" ry="2.4" fill="none" stroke="#888" stroke-width="0.9"/><circle cx="4.3" cy="3" r="1.3" fill="#888"/></svg>
<svg class="a" style="left:13.5px;top:402.0px;" width="10" height="10" viewBox="0 0 10 10"><path d="M1 0.5 L6.5 0.5 L9 3 L9 9.5 L1 9.5Z" fill="#f4f4f4" stroke="#777" stroke-width="0.8"/><path d="M5 3.5V8M2.8 5.8H7.2" stroke="#3a9a3a" stroke-width="1.3"/></svg>
<div class="a" style="left:0px;top:467px;width:197px;height:16px;background:#f0f0f0"></div>
<svg class="a" style="left:8.4px;top:469.5px;" width="12" height="12" viewBox="0 0 12 12"><rect x="0.5" y="1.5" width="11" height="9.5" fill="#f4f4f4" stroke="#b8b8b8" stroke-width="0.8"/><rect x="2" y="4" width="3" height="2.5" fill="#c0c0c0"/><circle cx="8" cy="8" r="2.2" fill="none" stroke="#b8b8b8" stroke-width="0.8"/></svg>
<svg class="a" style="left:25px;top:469.5px;" width="12" height="12" viewBox="0 0 12 12"><rect x="0.5" y="1.5" width="11" height="9.5" fill="#f4f4f4" stroke="#b8b8b8" stroke-width="0.8"/><rect x="2" y="4" width="3" height="2.5" fill="#c0c0c0"/><circle cx="8" cy="8" r="2.2" fill="none" stroke="#b8b8b8" stroke-width="0.8"/></svg>
<svg class="a" style="left:41.8px;top:469.5px;" width="12" height="12" viewBox="0 0 12 12"><rect x="0.5" y="1.5" width="11" height="9.5" fill="#f4f4f4" stroke="#b8b8b8" stroke-width="0.8"/><rect x="2" y="4" width="3" height="2.5" fill="#c0c0c0"/><circle cx="8" cy="8" r="2.2" fill="none" stroke="#b8b8b8" stroke-width="0.8"/></svg>
<svg class="a" style="left:58.5px;top:469.5px;" width="12" height="12" viewBox="0 0 12 12"><rect x="0.5" y="1.5" width="11" height="9.5" fill="#f4f4f4" stroke="#b8b8b8" stroke-width="0.8"/><rect x="2" y="4" width="3" height="2.5" fill="#c0c0c0"/><circle cx="8" cy="8" r="2.2" fill="none" stroke="#b8b8b8" stroke-width="0.8"/></svg>
<div class="a" style="left:214px;top:117px;width:168px;height:23px;background:#636363;border-radius:2px"></div>
<svg class="a" style="left:217px;top:117px;" width="7" height="7" viewBox="0 0 7 7"><path d="M1 6 L3 4 M2 2 L5 5 L6 3 L4 1Z" stroke="#f0f0f0" fill="#f0f0f0" stroke-width="0.8"/></svg>
<svg class="a" style="left:220.3px;top:125.8px;" width="5" height="5" viewBox="0 0 5 5"><path d="M0 0.3 L4.4 0.3 L2.2 4.3Z" fill="#f4f4f4"/></svg>
<div class="t " style="left:229.4px;top:122.79px;font-size:11px;color:#f4f4f4;font-weight:bold;letter-spacing:-0.15px">Porównanie 3D</div>
<div class="a" style="left:320px;top:123px;width:13.3px;height:10px;background:#3f3f3f"></div>
<div class="a" style="left:339px;top:123px;width:13.3px;height:10px;background:#3f3f3f"></div>
<div class="a" style="left:355.3px;top:123px;width:13.3px;height:10px;background:#3f3f3f"></div>
<div class="a" style="left:336.5px;top:123px;width:1px;height:10px;background:#7a7a7a"></div>
<svg class="a" style="left:320px;top:123px;" width="14" height="10" viewBox="0 0 14 10"><path d="M3 5 L6.5 1.8 L6.5 3.8 L11 3.8 L11 6.2 L6.5 6.2 L6.5 8.2Z" fill="#f4f4f4"/></svg>
<svg class="a" style="left:339px;top:123px;" width="14" height="10" viewBox="0 0 14 10"><path d="M3.5 5 L5.8 7.5 L10.5 2.3" fill="none" stroke="#f4f4f4" stroke-width="1.5"/></svg>
<svg class="a" style="left:355.3px;top:123px;" width="14" height="10" viewBox="0 0 14 10"><path d="M4 2.2 L9.5 7.8 M9.5 2.2 L4 7.8" fill="none" stroke="#f4f4f4" stroke-width="1.5"/></svg>
<div class="a" style="left:214px;top:144px;width:97px;height:63px;background:#636363;border-radius:2px"></div>
<svg class="a" style="left:220.3px;top:150.7px;" width="5" height="5" viewBox="0 0 5 5"><path d="M0 0.3 L4.4 0.3 L2.2 4.3Z" fill="#f4f4f4"/></svg>
<div class="t " style="left:228.6px;top:149.07px;font-size:8.3px;color:#f4f4f4;font-weight:bold;">Wyświetl Opcje</div>
<svg class="a" style="left:227.1px;top:163.4px;" width="10" height="10" viewBox="0 0 10 10"><circle cx="5" cy="5" r="4.3" fill="#575757" stroke="#d6d6d6" stroke-width="0.9"/></svg>
<div class="t " style="left:240.7px;top:165.14px;font-size:7.4px;color:#e9e9e9;font-weight:normal;">Mapa Kolorów</div>
<svg class="a" style="left:227.1px;top:178px;" width="10" height="10" viewBox="0 0 10 10"><circle cx="5" cy="5" r="4.3" fill="#575757" stroke="#d6d6d6" stroke-width="0.9"/></svg>
<div class="t " style="left:240.7px;top:179.74px;font-size:7.4px;color:#e9e9e9;font-weight:normal;">Wskaźnik</div>
<svg class="a" style="left:227.1px;top:192.6px;" width="10" height="10" viewBox="0 0 10 10"><circle cx="5" cy="5" r="4.3" fill="#575757" stroke="#d6d6d6" stroke-width="0.9"/><circle cx="5" cy="5" r="1.8" fill="#dcdcdc"/></svg>
<div class="t " style="left:240.7px;top:194.34px;font-size:7.4px;color:#e9e9e9;font-weight:normal;">Kolor Punktu</div>
<div class="a" style="left:214px;top:211px;width:155px;height:92px;background:#636363;border-radius:2px"></div>
<svg class="a" style="left:220.3px;top:218.3px;" width="5" height="5" viewBox="0 0 5 5"><path d="M0 0.3 L4.4 0.3 L2.2 4.3Z" fill="#f4f4f4"/></svg>
<div class="t " style="left:228.6px;top:216.36px;font-size:8.2px;color:#f4f4f4;font-weight:bold;">Opcja paska kolorów</div>
<div class="t " style="left:228.6px;top:232.37px;font-size:7px;color:#e9e9e9;font-weight:normal;">Maks. Zakres</div>
<div class="a" style="left:279.5px;top:230.8px;width:29px;height:9.5px;background:#484848;border:1px solid #a8a8a8;box-sizing:border-box"></div>
<div class="t " style="left:286.5px;top:232.64px;font-size:6.8px;color:#e9e9e9;font-weight:normal;"><span style="display:inline-block;width:19px;text-align:right">1 mm</span></div>
<svg class="a" style="left:308.0px;top:230.8px;" width="11" height="9.5" viewBox="0 0 11 9.5"><rect x="0.5" y="0.5" width="10" height="8.5" fill="#5a5a5a" stroke="#a8a8a8" stroke-width="0.8"/><path d="M3.3 3.75 L5.5 1.5499999999999998 L7.7 3.75Z M3.3 5.75 L5.5 7.95 L7.7 5.75Z" fill="#c8c8c8"/><path d="M1 4.75 H10" stroke="#a8a8a8" stroke-width="0.6"/></svg>
<div class="t " style="left:228.6px;top:246.97px;font-size:7px;color:#e9e9e9;font-weight:normal;">Min. Zakres</div>
<div class="a" style="left:275.2px;top:245.4px;width:29px;height:9.8px;background:#484848;border:1px solid #a8a8a8;box-sizing:border-box"></div>
<div class="t " style="left:282.2px;top:247.54px;font-size:6.8px;color:#e9e9e9;font-weight:normal;"><span style="display:inline-block;width:19px;text-align:right">-1 mm</span></div>
<svg class="a" style="left:303.7px;top:245.4px;" width="11" height="9.8" viewBox="0 0 11 9.8"><rect x="0.5" y="0.5" width="10" height="8.8" fill="#5a5a5a" stroke="#a8a8a8" stroke-width="0.8"/><path d="M3.3 3.9000000000000004 L5.5 1.7000000000000002 L7.7 3.9000000000000004Z M3.3 5.9 L5.5 8.100000000000001 L7.7 5.9Z" fill="#c8c8c8"/><path d="M1 4.9 H10" stroke="#a8a8a8" stroke-width="0.6"/></svg>
<svg class="a" style="left:228px;top:260.5px;" width="10" height="10" viewBox="0 0 10 10"><rect x="0.5" y="0.5" width="8.6" height="8.6" fill="#575757" stroke="#bdbdbd" stroke-width="0.8"/><path d="M2 4.5 L4 7 L8 1.5" fill="none" stroke="#f2f2f2" stroke-width="1.3"/></svg>
<div class="t " style="left:240.8px;top:261.81px;font-size:7.2px;color:#e9e9e9;font-weight:normal;">Pokaż Kolor Tolerancji</div>
<svg class="a" style="left:228px;top:274.8px;" width="10" height="10" viewBox="0 0 10 10"><rect x="0.5" y="0.5" width="8.6" height="8.6" fill="#575757" stroke="#bdbdbd" stroke-width="0.8"/><path d="M2 4.5 L4 7 L8 1.5" fill="none" stroke="#f2f2f2" stroke-width="1.3"/></svg>
<div class="t " style="left:240.8px;top:276.16px;font-size:7.25px;color:#e9e9e9;font-weight:normal;">Użyj Określonej Tolerancji</div>
<div class="a" style="left:327.3px;top:274.5px;width:29.4px;height:10.3px;background:#484848;border:1px solid #a8a8a8;box-sizing:border-box"></div>
<div class="t " style="left:332.3px;top:277.06px;font-size:6.9px;color:#e9e9e9;font-weight:normal;">±0,2</div>
<div class="a" style="left:227px;top:289px;width:62px;height:11px;border:1px solid #a0a0a0;box-sizing:border-box"></div>
<div class="t " style="left:231.6px;top:290.91px;font-size:7.2px;color:#e9e9e9;font-weight:normal;">Wybierz Szablon</div>
<div class="a" style="left:214px;top:307.5px;width:208.7px;height:172.3px;background:#636363;border-radius:2px"></div>
<svg class="a" style="left:220.1px;top:314.6px;" width="5" height="5" viewBox="0 0 5 5"><path d="M0 0.3 L4.4 0.3 L2.2 4.3Z" fill="#f4f4f4"/></svg>
<div class="t " style="left:228.9px;top:313.42px;font-size:8.25px;color:#f4f4f4;font-weight:bold;">Tagowanie Średniej Lokalnej</div>
<svg class="a" style="left:219.7px;top:330px;" width="6" height="6" viewBox="0 0 6 6"><rect x="0.4" y="0.4" width="5.2" height="5.2" fill="#5c5c5c" stroke="#a8a8a8" stroke-width="0.7"/><path d="M1.5 3 H4.5" stroke="#d0d0d0" stroke-width="0.8"/></svg>
<div class="t " style="left:228.3px;top:328.65px;font-size:7.27px;color:#e9e9e9;font-weight:normal;">Automatyczny</div>
<svg class="a" style="left:236.9px;top:342.3px;" width="10" height="10" viewBox="0 0 10 10"><rect x="0.5" y="0.5" width="8.6" height="8.6" fill="#575757" stroke="#bdbdbd" stroke-width="0.8"/></svg>
<div class="t " style="left:250.4px;top:343.47px;font-size:7px;color:#e9e9e9;font-weight:normal;">Powyżej Liczby Tol.</div>
<div class="a" style="left:314.8px;top:341.9px;width:28.4px;height:9.7px;background:#484848;border:1px solid #a8a8a8;box-sizing:border-box"></div>
<div class="t " style="left:321.2px;top:343.94px;font-size:6.8px;color:#e9e9e9;font-weight:normal;"><span style="display:inline-block;width:19px;text-align:right">1</span></div>
<svg class="a" style="left:342.7px;top:341.9px;" width="10.3" height="9.7" viewBox="0 0 10.3 9.7"><rect x="0.5" y="0.5" width="9.3" height="8.7" fill="#5a5a5a" stroke="#a8a8a8" stroke-width="0.8"/><path d="M2.95 3.8499999999999996 L5.15 1.6499999999999995 L7.3500000000000005 3.8499999999999996Z M2.95 5.85 L5.15 8.05 L7.3500000000000005 5.85Z" fill="#c8c8c8"/><path d="M1 4.85 H9.3" stroke="#a8a8a8" stroke-width="0.6"/></svg>
<svg class="a" style="left:236.9px;top:360.6px;" width="10" height="10" viewBox="0 0 10 10"><rect x="0.5" y="0.5" width="8.6" height="8.6" fill="#575757" stroke="#bdbdbd" stroke-width="0.8"/></svg>
<div class="t " style="left:250.4px;top:361.27px;font-size:7px;color:#e9e9e9;font-weight:normal;">Liczba Poniżej Tol.</div>
<div class="a" style="left:312.7px;top:360.2px;width:28.3px;height:9.2px;background:#484848;border:1px solid #a8a8a8;box-sizing:border-box"></div>
<div class="t " style="left:319.0px;top:361.74px;font-size:6.8px;color:#e9e9e9;font-weight:normal;"><span style="display:inline-block;width:19px;text-align:right">1</span></div>
<svg class="a" style="left:340.5px;top:360.2px;" width="10.4" height="9.2" viewBox="0 0 10.4 9.2"><rect x="0.5" y="0.5" width="9.4" height="8.2" fill="#5a5a5a" stroke="#a8a8a8" stroke-width="0.8"/><path d="M3.0 3.5999999999999996 L5.2 1.3999999999999995 L7.4 3.5999999999999996Z M3.0 5.6 L5.2 7.8 L7.4 5.6Z" fill="#c8c8c8"/><path d="M1 4.6 H9.4" stroke="#a8a8a8" stroke-width="0.6"/></svg>
<svg class="a" style="left:355px;top:356px;" width="57" height="19" viewBox="0 0 57 19"><rect x="1.1" y="8" width="54" height="9.5" fill="#5a5a5a" stroke="#a8a8a8" stroke-width="0.8"/><rect x="3" y="10" width="50" height="5.5" fill="#4a4a4a"/><path d="M3.0 9.5 V11" stroke="#b0b0b0" stroke-width="0.5"/><path d="M6.2 9.5 V11" stroke="#b0b0b0" stroke-width="0.5"/><path d="M9.4 9.5 V11" stroke="#b0b0b0" stroke-width="0.5"/><path d="M12.6 9.5 V11" stroke="#b0b0b0" stroke-width="0.5"/><path d="M15.8 9.5 V11" stroke="#b0b0b0" stroke-width="0.5"/><path d="M19.0 9.5 V11" stroke="#b0b0b0" stroke-width="0.5"/><path d="M22.2 9.5 V11" stroke="#b0b0b0" stroke-width="0.5"/><path d="M25.4 9.5 V11" stroke="#b0b0b0" stroke-width="0.5"/><path d="M28.6 9.5 V11" stroke="#b0b0b0" stroke-width="0.5"/><path d="M31.8 9.5 V11" stroke="#b0b0b0" stroke-width="0.5"/><path d="M35.0 9.5 V11" stroke="#b0b0b0" stroke-width="0.5"/><path d="M38.2 9.5 V11" stroke="#b0b0b0" stroke-width="0.5"/><path d="M41.4 9.5 V11" stroke="#b0b0b0" stroke-width="0.5"/><path d="M44.6 9.5 V11" stroke="#b0b0b0" stroke-width="0.5"/><path d="M47.8 9.5 V11" stroke="#b0b0b0" stroke-width="0.5"/><path d="M51.0 9.5 V11" stroke="#b0b0b0" stroke-width="0.5"/><path d="M4.5 15.5 L4.5 12 L6 10.5 L7.5 12 L7.5 15.5Z" fill="#d8d8d8"/><rect x="52.5" y="9" width="1.6" height="7.5" fill="#202020"/><text x="5" y="6.7" font-family="Liberation Sans" font-size="6" fill="#d0d0d0">1</text><text x="27" y="6.7" font-family="Liberation Sans" font-size="6" fill="#d0d0d0">2</text><text x="49" y="6.7" font-family="Liberation Sans" font-size="6" fill="#d0d0d0">4</text></svg>
<svg class="a" style="left:219.7px;top:380px;" width="6" height="6" viewBox="0 0 6 6"><rect x="0.4" y="0.4" width="5.2" height="5.2" fill="#5c5c5c" stroke="#a8a8a8" stroke-width="0.7"/><path d="M1.5 3 H4.5" stroke="#d0d0d0" stroke-width="0.8"/></svg>
<div class="t " style="left:228.3px;top:378.75px;font-size:7.27px;color:#e9e9e9;font-weight:normal;">Ręczne</div>
<svg class="a" style="left:236.8px;top:392.3px;" width="10" height="10" viewBox="0 0 10 10"><circle cx="5" cy="5" r="4.3" fill="#575757" stroke="#d6d6d6" stroke-width="0.9"/><circle cx="5" cy="5" r="1.8" fill="#dcdcdc"/></svg>
<div class="t " style="left:250.5px;top:394.19px;font-size:7.1px;color:#e9e9e9;font-weight:normal;">Wybieranie</div>
<svg class="a" style="left:236.8px;top:407.08px;" width="10" height="10" viewBox="0 0 10 10"><circle cx="5" cy="5" r="4.3" fill="#575757" stroke="#d6d6d6" stroke-width="0.9"/></svg>
<div class="t " style="left:250.5px;top:408.97px;font-size:7.1px;color:#e9e9e9;font-weight:normal;">Szyk Liniowy</div>
<svg class="a" style="left:236.8px;top:421.86px;" width="10" height="10" viewBox="0 0 10 10"><circle cx="5" cy="5" r="4.3" fill="#575757" stroke="#d6d6d6" stroke-width="0.9"/></svg>
<div class="t " style="left:250.5px;top:423.75px;font-size:7.1px;color:#e9e9e9;font-weight:normal;">Szyk Kołowy</div>
<svg class="a" style="left:236.8px;top:436.64px;" width="10" height="10" viewBox="0 0 10 10"><circle cx="5" cy="5" r="4.3" fill="#575757" stroke="#d6d6d6" stroke-width="0.9"/></svg>
<div class="t " style="left:250.5px;top:438.53px;font-size:7.1px;color:#e9e9e9;font-weight:normal;">Wzdłuż Krzywej</div>
<svg class="a" style="left:236.8px;top:451.42px;" width="10" height="10" viewBox="0 0 10 10"><circle cx="5" cy="5" r="4.3" fill="#575757" stroke="#d6d6d6" stroke-width="0.9"/></svg>
<div class="t " style="left:250.5px;top:453.31px;font-size:7.1px;color:#e9e9e9;font-weight:normal;">Szyk Walcowy</div>
<svg class="a" style="left:236.8px;top:466.2px;" width="10" height="10" viewBox="0 0 10 10"><circle cx="5" cy="5" r="4.3" fill="#575757" stroke="#d6d6d6" stroke-width="0.9"/></svg>
<div class="t " style="left:250.5px;top:468.09px;font-size:7.1px;color:#e9e9e9;font-weight:normal;">Szyk Sferyczny</div>
<svg class="a" style="left:0;top:0" width="1024" height="631" viewBox="0 0 1024 631"><polygon points="454.8,216.7 460.3,207.3 462.7,195.6 467.3,196.4 476.0,194.8 481.4,195.6 483.8,201.9 484.5,211.0 502.5,219.0 527.5,226.9 540.0,231.0 541.6,237.8 532.0,235.5 515.0,234.7 499.4,231.6 487.0,226.9 471.3,222.2 463.4,225.3 463.4,220.6" fill="#0ce00c" /><polygon points="455.0,216.0 460.3,207.3 462.7,195.6 467.3,196.4 476.0,194.8 481.4,195.6 483.8,201.9 484.5,211.0 478.0,217.0 468.0,219.0" fill="#18b8e8" /><polygon points="482.0,231.0 494.0,231.5 496.5,237.5 484.0,237.5 481.0,234.0" fill="#f04010" /><polygon points="499.0,236.0 510.0,236.0 513.5,242.0 501.0,242.5 498.5,239.0" fill="#f04010" /><polygon points="515.0,235.0 527.0,236.0 528.0,242.0 517.0,243.0" fill="#18b8e8" /><polygon points="501.7,215.2 518.0,200.3 547.8,208.9 543.0,218.3 553.0,224.0 556.0,236.0 548.0,241.0 536.0,238.0 526.0,226.0 513.4,219.8 502.5,216.7" fill="#0ce00c" /><polygon points="501.7,215.2 505.0,212.0 516.0,218.0 513.0,220.0" fill="#0a10f0" /><polygon points="555.6,223.8 569.7,209.7 580.6,198.8 591.0,194.4 598.8,194.7 642.5,209.2 689.4,223.3 740.0,235.0 799.3,248.3 823.0,247.2 835.9,240.7 850.9,239.7 883.1,239.7 930.4,253.6 966.9,267.6 977.6,275.1 983.0,288.0 980.9,298.7 969.0,309.5 951.9,314.9 930.4,318.0 916.2,318.3 922.9,329.9 909.6,323.2 896.3,328.2 881.4,333.2 869.7,341.5 869.7,334.9 861.4,336.5 849.8,339.9 843.2,336.5 844.8,329.9 831.5,324.9 828.2,318.3 811.6,316.6 806.6,313.3 793.3,311.6 793.3,310.0 800.0,305.0 823.2,301.6 864.7,300.0 939.5,298.3 947.6,288.0 945.4,280.5 930.4,273.0 904.6,265.4 876.7,257.9 859.5,256.9 846.6,262.2 835.9,273.0 823.0,276.2 812.2,273.0 790.7,266.5 780.0,264.4 765.0,258.9 749.4,259.7 718.0,255.0 686.9,250.3 657.2,245.6 652.5,242.5 655.6,236.2 641.0,230.3 631.6,228.0 611.2,250.6 603.4,256.1 589.4,252.2 597.2,246.0 589.4,244.4 580.0,247.5 571.2,247.2 571.2,242.5 555.6,242.5 541.6,237.8" fill="#0ce00c" /><polygon points="631.6,228.0 641.0,230.3 634.7,238.1 631.6,245.9 616.0,250.6 609.7,247.5" fill="#0a10f0" /><polygon points="567.3,210.5 573.0,203.0 576.0,203.5 569.0,212.3" fill="#f01818" /><polygon points="555.4,238.0 562.0,231.3 570.9,234.0 566.0,244.4 557.0,243.0" fill="#20b0e8" /><ellipse cx="595.6" cy="209.9" rx="6.4" ry="3.6999999999999997" fill="#0a10f0" /><ellipse cx="595.6" cy="211.10000000000002" rx="5.5" ry="2.8" fill="#b5b4b9" /><ellipse cx="626.9" cy="210.7" rx="7.4" ry="4.4" fill="#0a10f0" /><ellipse cx="626.9" cy="211.9" rx="6.5" ry="3.5" fill="#b5b4b9" /><ellipse cx="653.4" cy="218.5" rx="7.9" ry="4.4" fill="#f01818" /><ellipse cx="653.4" cy="219.70000000000002" rx="7" ry="3.5" fill="#b5b4b9" /><ellipse cx="680.8" cy="226.0" rx="6.9" ry="4.4" fill="#0a10f0" /><ellipse cx="680.8" cy="227.20000000000002" rx="6" ry="3.5" fill="#b5b4b9" /><ellipse cx="702.5" cy="235.7" rx="5.4" ry="3.4" fill="#18b8e8" /><ellipse cx="702.5" cy="236.9" rx="4.5" ry="2.5" fill="#b5b4b9" /><ellipse cx="731.4" cy="240.35" rx="5.4" ry="3.4" fill="#18b8e8" /><ellipse cx="731.4" cy="241.55" rx="4.5" ry="2.5" fill="#b5b4b9" /><ellipse cx="759.5" cy="244.7" rx="5.4" ry="3.4" fill="#18b8e8" /><ellipse cx="759.5" cy="245.9" rx="4.5" ry="2.5" fill="#b5b4b9" /><ellipse cx="787.7" cy="249.4" rx="5.4" ry="3.4" fill="#18b8e8" /><ellipse cx="787.7" cy="250.60000000000002" rx="4.5" ry="2.5" fill="#b5b4b9" /><ellipse cx="577.5" cy="222.85" rx="5.9" ry="3.9" fill="#0a10f0" /><ellipse cx="577.5" cy="224.05" rx="5" ry="3" fill="#b5b4b9" /><ellipse cx="881" cy="248.60000000000002" rx="4" ry="2.2" fill="#b5b4b9" /><ellipse cx="919.6" cy="259.3" rx="4" ry="2.2" fill="#b5b4b9" /><ellipse cx="969" cy="291.5" rx="4" ry="2.2" fill="#b5b4b9" /><ellipse cx="946" cy="310.3" rx="5" ry="2.5" fill="#b5b4b9" /><ellipse cx="899.6" cy="310.70000000000005" rx="5.9" ry="3.4" fill="#f01818" /><ellipse cx="899.6" cy="311.90000000000003" rx="5" ry="2.5" fill="#b5b4b9" /><ellipse cx="856.4" cy="311.1" rx="5" ry="3" fill="#b5b4b9" /><ellipse cx="866.4" cy="324.3" rx="3" ry="2" fill="#b5b4b9" /><ellipse cx="593.3" cy="197.5" rx="2.5" ry="1.5" fill="#0a10f0" /><polygon points="651.5,240.0 652.5,244.9 671.0,246.8 688.6,251.7 706.0,249.8 727.7,256.6 720.0,258.0 690.0,262.0 660.0,256.0 650.0,252.0" fill="#18b8e8" /><polygon points="637.3,265.9 653.4,250.7 659.3,254.6 644.6,268.8" fill="#20a8e8" /><polygon points="641.3,263.8 651.7,254.0 655.6,256.5 646.0,265.7" fill="#30d040" /><polygon points="645.0,262.0 650.0,258.0 652.0,260.0 647.0,264.0" fill="#f01818" /><polygon points="652.5,245.9 672.0,247.0 673.0,252.7 656.0,256.0" fill="#20a0e0" /><ellipse cx="680" cy="254.5" rx="8.5" ry="4.5" fill="#0a10f0" /><polygon points="655.4,271.2 671.0,256.6 678.8,260.5 663.2,274.2" fill="#0a10f0" /><polygon points="660.1,269.0 669.4,260.2 674.1,262.6 664.8,270.8" fill="#f01818" /><polygon points="672.0,276.1 685.7,262.5 696.4,265.4 678.8,278.6" fill="#20c8a0" /><polygon points="674.8,274.7 685.1,264.5 693.1,266.7 679.9,276.6" fill="#30d040" /><polygon points="677.0,272.0 686.0,265.0 690.0,267.0 681.0,274.0" fill="#f01818" /><polygon points="707.0,256.6 723.0,256.0 725.7,263.4 710.0,264.0" fill="#f08018" /><polygon points="688.6,280.0 702.3,266.4 712.0,269.3 696.4,283.5" fill="#f08818" /><polygon points="693.7,277.7 701.2,270.2 706.5,271.8 697.9,279.6" fill="#f01818" /><polygon points="705.2,284.9 717.9,272.2 727.7,276.1 712.0,288.3" fill="#30d040" /><polygon points="711.5,282.2 716.6,277.1 720.5,278.7 714.2,283.5" fill="#f0c010" /><polygon points="688.6,249.8 706.0,251.0 708.0,262.5 692.0,262.0" fill="#30c0c0" /><polygon points="724.9,265.5 739.5,253.8 747.3,255.7 744.4,262.6 735.6,268.4 725.9,268.4" fill="#2a98e0" /><polygon points="720.0,280.2 733.0,268.4 736.0,269.5 723.0,281.0" fill="#20a0e0" /><polygon points="745.4,270.4 762.0,260.6 765.0,265.5 748.3,272.3" fill="#1a60e0" /><polygon points="752.2,273.3 754.0,274.0 738.0,281.0 736.6,280.2" fill="#0a10f0" /><polygon points="726.8,289.9 737.6,281.1 742.5,284.0 730.7,292.9" fill="#28a0e0" /><polygon points="728.7,289.2 736.8,282.6 740.5,284.7 731.6,291.4" fill="#f01818" /><polygon points="767.9,271.4 777.6,262.6 790.3,266.5 781.5,274.3" fill="#f04010" /><polygon points="772.0,266.0 780.0,263.0 786.0,266.0 778.0,270.0" fill="#f09010" /><polygon points="778.6,274.3 781.0,275.0 770.0,284.0 768.8,283.1" fill="#0a10f0" /><polygon points="754.2,284.5 766.0,284.0 769.8,288.0 757.0,290.0" fill="#f05010" /><polygon points="747.3,291.0 754.0,290.9 756.1,297.7 749.0,297.0" fill="#f09010" /><polygon points="406.2,245.9 409.4,242.0 418.8,242.8 437.5,247.5 440.6,244.4 445.3,246.0 446.9,250.6 454.7,252.2 465.6,247.5 476.6,249.0 475.0,255.3 484.4,252.2 492.2,255.3 501.6,261.6 501.6,267.8 512.5,274.0 523.4,278.8 521.9,281.9 496.9,278.8 493.8,283.4 486.0,282.0 481.2,274.0 470.3,272.5 459.4,267.0 431.2,258.4 415.6,253.8 406.2,246.7" fill="#0ce00c" /><polygon points="431.2,280.3 445.3,267.0 470.3,274.0 471.9,281.9 462.5,289.7 440.6,286.6" fill="#0ce00c" /><polygon points="432.0,279.0 438.0,274.0 447.0,280.0 443.0,286.0 434.0,283.0" fill="#f0c010" opacity="0.8"/><polygon points="462.0,288.0 470.0,281.0 471.9,281.9 464.0,290.0" fill="#0a10f0" /><polygon points="492.0,257.0 502.0,262.0 500.0,268.0 492.0,266.0" fill="#f0c010" /><polygon points="493.0,271.0 504.0,268.0 508.0,276.0 497.0,278.0" fill="#2a9ae0" /><ellipse cx="495" cy="264" rx="3" ry="2" fill="#f01818" /><polygon points="460.3,319.0 474.4,297.2 486.9,286.2 493.8,283.4 509.4,285.0 520.3,277.2 525.0,280.3 521.9,286.6 531.2,281.9 542.2,285.0 537.5,291.2 548.4,288.9 565.0,291.0 554.0,298.8 533.8,316.7 555.6,323.0 565.0,318.0 569.5,320.1 576.0,326.0 583.8,328.0 607.5,334.4 626.5,340.7 636.0,350.2 648.7,359.7 670.9,366.0 686.7,372.4 699.6,375.8 710.7,375.8 712.3,382.2 704.4,391.7 699.6,401.2 707.5,409.1 739.2,420.2 770.9,426.5 786.7,428.1 801.0,427.0 801.0,448.4 786.7,448.0 770.9,447.1 755.0,444.0 731.3,436.0 715.4,432.9 691.7,426.5 675.8,420.2 668.0,412.3 663.2,399.6 660.0,391.7 654.4,378.0 625.0,369.0 600.0,358.9 580.6,353.4 549.4,345.6 518.0,337.8 486.9,328.4 461.1,321.4" fill="#0ce00c" /><polygon points="449.4,322.2 471.0,299.0 474.4,297.2 462.0,314.0 452.0,323.0" fill="#0a10f0" /><polygon points="533.8,316.7 554.0,298.8 560.3,300.3 558.8,308.0 565.0,316.0 555.6,323.0" fill="#0a10f0" /><defs><linearGradient id="ug" gradientUnits="userSpaceOnUse" x1="660" y1="0" x2="802" y2="0"><stop offset="0" stop-color="#f09818"/><stop offset="0.35" stop-color="#f0b010"/><stop offset="0.5" stop-color="#40d810"/><stop offset="0.56" stop-color="#0ce00c"/><stop offset="0.8" stop-color="#0ce00c"/><stop offset="0.95" stop-color="#20b8e0"/><stop offset="1" stop-color="#20a8e8"/></linearGradient><linearGradient id="bg2" gradientUnits="userSpaceOnUse" x1="795" y1="450" x2="835" y2="365"><stop offset="0" stop-color="#20b0e8"/><stop offset="0.5" stop-color="#1a80e0"/><stop offset="1" stop-color="#1858e0"/></linearGradient></defs><polygon points="663.2,393.0 690.0,393.0 699.6,401.2 707.5,409.1 739.2,420.2 770.9,426.5 786.7,428.1 801.0,427.0 801.0,448.4 786.7,448.0 770.9,447.1 755.0,444.0 731.3,436.0 715.4,432.9 691.7,426.5 675.8,420.2 668.0,412.3 663.2,399.6" fill="url(#ug)" /><polygon points="740.0,359.0 743.8,358.0 749.5,348.6 757.1,347.6 762.8,353.3 770.4,351.4 787.6,357.1 795.2,358.0 804.7,351.4 812.3,354.3 819.9,355.2 829.4,354.3 833.2,359.0 831.3,364.7 838.9,358.0 846.5,359.0 835.1,374.2 846.5,378.0 873.2,387.6 878.9,395.2 875.1,402.8 877.0,412.3 863.7,411.3 856.1,406.6 858.0,399.0 831.3,395.2 838.9,402.8 841.8,419.9 835.1,433.2 819.9,442.7 797.1,448.4 800.0,427.0 804.7,421.8 800.9,410.4 781.9,399.0 759.0,378.0" fill="url(#bg2)" /><polygon points="805.0,358.0 846.5,359.0 835.1,374.2 846.5,378.0 873.2,387.6 878.9,395.2 875.1,402.8 877.0,412.3 863.7,411.3 856.1,406.6 858.0,399.0 831.3,395.2 820.0,378.0" fill="#0a10f0" /><polygon points="820.0,356.0 829.0,351.0 834.0,354.0 828.0,359.0" fill="#f05010" /><polygon points="836.0,357.0 845.0,356.0 846.0,360.0 838.0,361.0" fill="#f08818" /><ellipse cx="500.2" cy="294.40000000000003" rx="7.7" ry="4.9" fill="#f01818" /><ellipse cx="500.2" cy="294.8" rx="6.5" ry="3.7" fill="#b5b4b9" /><ellipse cx="486.9" cy="310.1" rx="7.2" ry="5.2" fill="#f01818" /><ellipse cx="486.9" cy="310.5" rx="6" ry="4" fill="#b5b4b9" /><ellipse cx="465" cy="314.6" rx="5.2" ry="3.7" fill="#f01818" /><ellipse cx="465" cy="315" rx="4" ry="2.5" fill="#b5b4b9" /><ellipse cx="502.5" cy="324.5" rx="5.5" ry="3" fill="#b5b4b9" /><ellipse cx="530.6" cy="331.90000000000003" rx="6.7" ry="4.2" fill="#0a10f0" /><ellipse cx="530.6" cy="332.3" rx="5.5" ry="3" fill="#b5b4b9" /><ellipse cx="557.2" cy="339.0" rx="6.7" ry="4.2" fill="#0a10f0" /><ellipse cx="557.2" cy="339.4" rx="5.5" ry="3" fill="#b5b4b9" /><ellipse cx="585.3" cy="345.4" rx="4.5" ry="2.5" fill="#b5b4b9" /><ellipse cx="607.5" cy="355" rx="4.5" ry="2.5" fill="#b5b4b9" /><ellipse cx="628" cy="366" rx="4.5" ry="2.5" fill="#b5b4b9" /><ellipse cx="651" cy="375" rx="4" ry="2.2" fill="#b5b4b9" /><ellipse cx="678" cy="378" rx="3.5" ry="2" fill="#b5b4b9" /><ellipse cx="676" cy="398" rx="4" ry="2.5" fill="#b5b4b9" /><ellipse cx="694" cy="419" rx="4" ry="2.3" fill="#b5b4b9" /><ellipse cx="727" cy="422" rx="3" ry="2" fill="#b5b4b9" /><ellipse cx="727" cy="435" rx="3" ry="2" fill="#b5b4b9" /><ellipse cx="762" cy="429.6" rx="4.2" ry="3.2" fill="#f01818" /><ellipse cx="762" cy="430" rx="3" ry="2" fill="#b5b4b9" /><ellipse cx="788" cy="401" rx="5" ry="2.3" fill="#b5b4b9" /><ellipse cx="805" cy="386" rx="5" ry="2.3" fill="#b5b4b9" /><ellipse cx="782" cy="376" rx="6" ry="2.5" fill="#b5b4b9" /><ellipse cx="812" cy="424" rx="3" ry="1.8" fill="#b5b4b9" /><ellipse cx="836" cy="414" rx="3" ry="1.8" fill="#b5b4b9" /><ellipse cx="843" cy="419" rx="4" ry="2" fill="#b5b4b9" /><ellipse cx="583" cy="322.5" rx="9" ry="5.5" fill="#2050d0" /><polygon points="583.8,315.3 598.0,301.9 603.6,303.5 601.2,310.6 591.7,318.5" fill="#1a40e0" /><polygon points="589.7,312.6 596.8,305.9 599.6,306.7 598.4,310.3 593.7,314.2" fill="#f01818" /><polygon points="591.7,322.0 604.0,321.7 607.5,330.4 595.0,331.0" fill="#f0a018" /><polygon points="599.6,320.1 613.9,309.0 619.4,310.6 606.0,323.3" fill="#40d040" /><polygon points="604.7,317.9 611.8,312.4 614.6,313.2 607.9,319.5" fill="#f08010" /><ellipse cx="614.5" cy="334.5" rx="9" ry="6" fill="#28b0e8" /><polygon points="617.0,324.9 631.3,314.6 636.0,316.9 623.4,329.6" fill="#20a0e0" /><polygon points="621.0,323.5 629.5,317.4 632.4,318.7 624.8,326.4" fill="#f01818" /><ellipse cx="631" cy="338.5" rx="8.5" ry="4.5" fill="#0a10f0" /><polygon points="632.9,328.0 650.3,316.9 655.0,320.9 639.2,332.8" fill="#0a10f0" /><polygon points="636.9,326.8 648.2,319.6 651.3,322.2 641.0,329.9" fill="#f01818" /><ellipse cx="644" cy="345.5" rx="10" ry="5" fill="#f0a018" /><polygon points="651.9,332.8 667.7,322.5 671.7,324.0 656.6,337.5" fill="#40d040" /><polygon points="656.4,331.2 665.1,325.5 667.3,326.3 659.0,333.8" fill="#f0c010" /><ellipse cx="659" cy="352.5" rx="8" ry="6" fill="#f09020" /><polygon points="669.3,339.1 683.6,331.2 686.0,333.6 674.0,342.3" fill="#30c050" /><polygon points="678.0,333.0 685.0,330.0 687.0,333.0 681.0,336.0" fill="#f01818" /><ellipse cx="678" cy="361.5" rx="9" ry="5" fill="#2060d0" /><polygon points="685.1,359.7 696.2,345.4 701.0,348.6 688.3,361.3" fill="#0a10f0" /><ellipse cx="695.5" cy="346" rx="5" ry="3.5" fill="#2060d0" /><polygon points="695.0,341.5 701.2,340.0 702.0,343.5 697.0,344.0" fill="#f01818" /><polygon points="663.0,364.0 676.0,363.0 680.4,370.8 667.0,371.0" fill="#f05010" /><ellipse cx="846.5" cy="339.8" rx="5" ry="3.3" fill="#0a10f0" /><ellipse cx="859.7" cy="344.4" rx="5" ry="2.9" fill="#0a10f0" /><polygon points="824.9,318.0 833.0,316.6 836.5,320.0 827.0,323.2" fill="#20a8e0" /><polygon points="828.2,330.0 838.0,326.6 843.2,329.0 832.0,334.9" fill="#30c0f0" /><polygon points="931.0,329.0 936.0,328.5 936.0,332.4 931.0,332.0" fill="#0ce00c" /><polygon points="936.0,331.0 948.0,327.4 954.5,328.5 944.0,334.9" fill="#0ce00c" /><ellipse cx="934.5" cy="335.7" rx="2.2" ry="1.6" fill="#f08818" /><ellipse cx="944.5" cy="334" rx="1" ry="0.8" fill="#111" /><polygon points="853.0,315.5 875.0,316.0 896.0,317.0 880.0,318.5 855.0,317.5" fill="#f01818" /><defs><clipPath id="cu"><polygon points="555.6,223.8 569.7,209.7 580.6,198.8 591.0,194.4 598.8,194.7 642.5,209.2 689.4,223.3 740.0,235.0 799.3,248.3 823.0,247.2 835.9,240.7 850.9,239.7 883.1,239.7 930.4,253.6 966.9,267.6 977.6,275.1 983.0,288.0 980.9,298.7 969.0,309.5 951.9,314.9 930.4,318.0 916.2,318.3 922.9,329.9 909.6,323.2 896.3,328.2 881.4,333.2 869.7,341.5 869.7,334.9 861.4,336.5 849.8,339.9 843.2,336.5 844.8,329.9 831.5,324.9 828.2,318.3 811.6,316.6 806.6,313.3 793.3,311.6 793.3,310.0 800.0,305.0 823.2,301.6 864.7,300.0 939.5,298.3 947.6,288.0 945.4,280.5 930.4,273.0 904.6,265.4 876.7,257.9 859.5,256.9 846.6,262.2 835.9,273.0 823.0,276.2 812.2,273.0 790.7,266.5 780.0,264.4 765.0,258.9 749.4,259.7 718.0,255.0 686.9,250.3 657.2,245.6 652.5,242.5 655.6,236.2 641.0,230.3 631.6,228.0 611.2,250.6 603.4,256.1 589.4,252.2 597.2,246.0 589.4,244.4 580.0,247.5 571.2,247.2 571.2,242.5 555.6,242.5 541.6,237.8"/></clipPath><clipPath id="cl"><polygon points="460.3,319.0 474.4,297.2 486.9,286.2 493.8,283.4 509.4,285.0 520.3,277.2 525.0,280.3 521.9,286.6 531.2,281.9 542.2,285.0 537.5,291.2 548.4,288.9 565.0,291.0 554.0,298.8 533.8,316.7 555.6,323.0 565.0,318.0 569.5,320.1 576.0,326.0 583.8,328.0 607.5,334.4 626.5,340.7 636.0,350.2 648.7,359.7 670.9,366.0 686.7,372.4 699.6,375.8 710.7,375.8 712.3,382.2 704.4,391.7 699.6,401.2 707.5,409.1 739.2,420.2 770.9,426.5 786.7,428.1 801.0,427.0 801.0,448.4 786.7,448.0 770.9,447.1 755.0,444.0 731.3,436.0 715.4,432.9 691.7,426.5 675.8,420.2 668.0,412.3 663.2,399.6 660.0,391.7 654.4,378.0 625.0,369.0 600.0,358.9 580.6,353.4 549.4,345.6 518.0,337.8 486.9,328.4 461.1,321.4"/></clipPath></defs><g clip-path="url(#cu)"><rect x="853.1" y="252.6" width="1.1" height="1.3" fill="#f0d010"/><rect x="861.3" y="243.6" width="1.4" height="0.9" fill="#e8e020"/><rect x="871.5" y="261.3" width="1.8" height="1.6" fill="#e8e020"/><rect x="814.1" y="259.7" width="2.9" height="1.4" fill="#e8e020"/><rect x="867.4" y="332.7" width="2.1" height="0.9" fill="#f0d010"/><rect x="871.7" y="290.4" width="1.6" height="1.6" fill="#e8e020"/><rect x="825.2" y="294.4" width="1.7" height="1.3" fill="#f0c010"/><rect x="802.2" y="243.8" width="2.0" height="1.3" fill="#f0c010"/><rect x="941.6" y="283.2" width="1.7" height="1.0" fill="#f08010"/><rect x="825.1" y="313.6" width="2.1" height="1.3" fill="#f0d010"/><rect x="960.7" y="308.8" width="2.2" height="0.9" fill="#f02010"/><rect x="889.8" y="254.0" width="1.3" height="1.3" fill="#f02010"/><rect x="797.6" y="302.8" width="2.1" height="1.7" fill="#e8e020"/><rect x="851.2" y="305.4" width="2.0" height="1.6" fill="#e8e020"/><rect x="803.4" y="247.1" width="1.9" height="1.5" fill="#f02010"/><rect x="801.8" y="306.0" width="3.0" height="1.6" fill="#e8e020"/><rect x="845.5" y="275.4" width="1.0" height="1.3" fill="#f02010"/><rect x="822.8" y="249.4" width="1.4" height="1.1" fill="#f0d010"/><rect x="934.0" y="276.6" width="1.2" height="1.2" fill="#f08010"/><rect x="897.1" y="323.7" width="2.7" height="1.1" fill="#f08010"/><rect x="871.0" y="272.8" width="2.9" height="1.0" fill="#f08010"/><rect x="824.4" y="260.5" width="1.0" height="1.6" fill="#f0c010"/><rect x="825.6" y="265.3" width="1.8" height="1.2" fill="#f0c010"/><rect x="900.4" y="330.5" width="2.9" height="1.5" fill="#e8e020"/><rect x="934.3" y="282.3" width="1.8" height="1.2" fill="#e8e020"/><rect x="810.2" y="299.5" width="1.4" height="1.8" fill="#f0d010"/><rect x="875.9" y="248.7" width="1.1" height="0.8" fill="#e8e020"/><rect x="819.5" y="247.8" width="2.2" height="0.9" fill="#f02010"/><rect x="830.6" y="274.5" width="2.9" height="1.4" fill="#f02010"/><rect x="882.5" y="249.2" width="3.0" height="1.3" fill="#f08010"/><rect x="884.3" y="246.3" width="2.5" height="1.5" fill="#f0d010"/><rect x="883.3" y="305.1" width="1.0" height="1.8" fill="#e8e020"/><rect x="893.0" y="252.2" width="2.8" height="1.6" fill="#e8e020"/><rect x="848.1" y="300.4" width="2.4" height="1.1" fill="#f0d010"/><rect x="861.5" y="254.2" width="2.1" height="1.6" fill="#f0c010"/><rect x="854.3" y="259.6" width="2.6" height="1.6" fill="#f0c010"/><rect x="934.3" y="260.0" width="2.0" height="1.5" fill="#e8e020"/><rect x="983.0" y="314.6" width="1.5" height="1.5" fill="#f08010"/><rect x="976.5" y="281.4" width="2.9" height="1.2" fill="#f02010"/><rect x="833.0" y="260.0" width="1.7" height="1.3" fill="#f0c010"/><rect x="982.1" y="297.2" width="2.0" height="1.5" fill="#f0d010"/><rect x="945.9" y="246.2" width="2.8" height="1.6" fill="#f0d010"/><rect x="936.3" y="284.4" width="1.9" height="1.4" fill="#f0c010"/><rect x="806.9" y="329.8" width="1.9" height="1.5" fill="#f08010"/><rect x="806.6" y="253.4" width="1.1" height="1.4" fill="#f0c010"/><rect x="880.7" y="301.6" width="2.7" height="1.8" fill="#e8e020"/><rect x="918.2" y="272.0" width="2.1" height="0.8" fill="#e8e020"/><rect x="945.9" y="308.5" width="2.1" height="1.7" fill="#f0d010"/><rect x="874.6" y="322.6" width="1.1" height="1.0" fill="#f0c010"/><rect x="887.7" y="312.1" width="1.5" height="1.2" fill="#f02010"/><rect x="815.6" y="326.3" width="2.8" height="1.5" fill="#f02010"/><rect x="948.9" y="288.1" width="1.3" height="1.0" fill="#e8e020"/><rect x="889.6" y="322.7" width="2.2" height="1.6" fill="#f0c010"/><rect x="819.2" y="251.7" width="2.5" height="1.4" fill="#e8e020"/><rect x="853.6" y="288.3" width="2.0" height="1.6" fill="#e8e020"/><rect x="962.2" y="243.5" width="1.6" height="1.6" fill="#f0c010"/><rect x="889.0" y="292.5" width="1.9" height="1.4" fill="#f0d010"/><rect x="888.6" y="287.7" width="1.9" height="1.3" fill="#f02010"/><rect x="883.2" y="329.3" width="2.8" height="1.7" fill="#e8e020"/><rect x="840.6" y="292.3" width="2.7" height="0.9" fill="#f0c010"/><rect x="813.7" y="280.9" width="2.3" height="1.2" fill="#f0d010"/><rect x="831.5" y="267.4" width="2.8" height="1.0" fill="#f0d010"/><rect x="929.6" y="302.0" width="1.5" height="0.9" fill="#f0c010"/><rect x="881.2" y="310.4" width="1.8" height="1.3" fill="#f0d010"/><rect x="983.0" y="318.7" width="2.4" height="1.8" fill="#f0c010"/><rect x="868.7" y="278.9" width="1.6" height="1.5" fill="#f02010"/><rect x="793.8" y="291.7" width="2.4" height="1.2" fill="#f08010"/><rect x="890.9" y="266.7" width="1.2" height="1.7" fill="#f0d010"/><rect x="834.6" y="323.0" width="1.5" height="0.8" fill="#f0d010"/><rect x="941.9" y="264.2" width="2.6" height="1.6" fill="#f0c010"/><rect x="921.8" y="329.8" width="1.3" height="1.7" fill="#f08010"/><rect x="901.3" y="305.9" width="1.6" height="1.6" fill="#f0d010"/><rect x="825.8" y="324.8" width="2.9" height="1.4" fill="#f02010"/><rect x="946.3" y="246.1" width="1.1" height="1.7" fill="#f0c010"/><rect x="878.5" y="270.9" width="1.8" height="1.7" fill="#e8e020"/><rect x="911.2" y="242.2" width="2.9" height="1.8" fill="#f0c010"/><rect x="841.1" y="255.6" width="2.3" height="1.3" fill="#f02010"/><rect x="830.1" y="281.2" width="1.5" height="1.6" fill="#f0c010"/><rect x="983.9" y="241.6" width="2.5" height="1.4" fill="#f0d010"/><rect x="826.9" y="284.1" width="1.2" height="1.6" fill="#f08010"/><rect x="874.3" y="286.0" width="2.9" height="1.1" fill="#f08010"/><rect x="832.0" y="260.3" width="2.7" height="1.5" fill="#f0c010"/><rect x="914.0" y="277.3" width="3.0" height="1.6" fill="#f02010"/><rect x="792.8" y="298.7" width="1.9" height="0.9" fill="#f02010"/><rect x="919.7" y="274.9" width="2.3" height="1.1" fill="#e8e020"/><rect x="837.2" y="266.4" width="1.4" height="1.1" fill="#f08010"/><rect x="790.7" y="273.3" width="2.9" height="1.3" fill="#f02010"/><rect x="837.7" y="331.7" width="1.4" height="1.0" fill="#f02010"/><rect x="855.4" y="246.1" width="2.0" height="1.0" fill="#f02010"/><rect x="888.4" y="238.5" width="2.6" height="0.9" fill="#f02010"/><rect x="904.4" y="276.2" width="1.6" height="1.0" fill="#f02010"/><rect x="904.2" y="289.3" width="2.3" height="1.5" fill="#f0c010"/><rect x="961.4" y="275.8" width="2.4" height="1.3" fill="#f02010"/><rect x="845.4" y="298.0" width="1.1" height="1.6" fill="#f0c010"/><rect x="963.9" y="298.9" width="1.3" height="1.3" fill="#e8e020"/><rect x="888.4" y="319.0" width="2.7" height="1.4" fill="#f0d010"/><rect x="964.1" y="304.2" width="1.2" height="0.8" fill="#f0c010"/><rect x="914.2" y="331.1" width="2.7" height="1.4" fill="#f08010"/><rect x="912.4" y="298.7" width="2.0" height="0.8" fill="#f0c010"/><rect x="945.6" y="310.6" width="2.8" height="0.9" fill="#e8e020"/><rect x="892.6" y="310.3" width="1.5" height="0.9" fill="#f08010"/><rect x="841.8" y="308.7" width="1.5" height="1.4" fill="#f0c010"/><rect x="879.8" y="320.0" width="2.0" height="1.5" fill="#f0d010"/><rect x="939.6" y="297.8" width="1.2" height="0.9" fill="#f0c010"/><rect x="839.5" y="310.1" width="2.2" height="0.9" fill="#f02010"/><rect x="884.1" y="285.1" width="2.4" height="1.5" fill="#f0d010"/><rect x="846.7" y="288.1" width="1.9" height="1.6" fill="#f08010"/><rect x="983.7" y="291.3" width="3.0" height="1.7" fill="#f02010"/><rect x="793.4" y="282.5" width="2.9" height="1.2" fill="#e8e020"/><rect x="842.4" y="258.4" width="1.1" height="0.9" fill="#f0c010"/><rect x="935.8" y="263.4" width="1.3" height="1.6" fill="#f02010"/><rect x="889.2" y="324.0" width="1.5" height="1.7" fill="#f02010"/><rect x="884.8" y="240.4" width="2.9" height="1.5" fill="#f0d010"/><rect x="869.1" y="308.5" width="1.7" height="1.1" fill="#f08010"/><rect x="953.8" y="238.2" width="2.7" height="0.9" fill="#f02010"/><rect x="970.6" y="307.2" width="1.5" height="0.9" fill="#f02010"/><rect x="866.1" y="322.4" width="1.7" height="1.2" fill="#f0d010"/><rect x="843.7" y="242.7" width="1.1" height="1.5" fill="#f0d010"/><rect x="913.8" y="252.4" width="1.9" height="1.1" fill="#f02010"/><rect x="940.8" y="314.2" width="2.8" height="1.6" fill="#f08010"/><rect x="913.0" y="326.6" width="2.1" height="1.5" fill="#e8e020"/><rect x="799.6" y="309.0" width="2.2" height="0.9" fill="#f08010"/><rect x="959.5" y="285.1" width="1.3" height="1.3" fill="#e8e020"/><rect x="857.0" y="266.9" width="1.8" height="1.0" fill="#f02010"/><rect x="884.2" y="302.9" width="1.3" height="1.0" fill="#f0d010"/><rect x="830.5" y="325.9" width="2.1" height="1.3" fill="#f08010"/><rect x="854.9" y="311.6" width="1.3" height="1.0" fill="#f08010"/><rect x="807.7" y="271.2" width="1.6" height="1.2" fill="#f0d010"/><rect x="947.8" y="257.6" width="2.5" height="1.2" fill="#f0d010"/><rect x="870.7" y="288.8" width="1.5" height="1.6" fill="#f08010"/><rect x="887.1" y="293.7" width="1.3" height="1.3" fill="#f02010"/><rect x="912.8" y="321.7" width="1.2" height="1.7" fill="#f0c010"/><rect x="865.0" y="300.6" width="2.9" height="1.6" fill="#f08010"/><rect x="960.2" y="240.1" width="1.9" height="1.6" fill="#f0d010"/><rect x="946.8" y="331.9" width="1.0" height="1.2" fill="#f08010"/><rect x="970.7" y="318.1" width="2.9" height="1.0" fill="#f08010"/><rect x="811.3" y="253.0" width="2.9" height="0.9" fill="#e8e020"/><rect x="951.0" y="306.0" width="1.2" height="1.6" fill="#f08010"/><rect x="790.3" y="250.2" width="2.8" height="1.4" fill="#e8e020"/><rect x="849.2" y="250.4" width="2.1" height="1.2" fill="#f02010"/><rect x="938.9" y="247.6" width="2.0" height="1.4" fill="#f02010"/><rect x="865.7" y="259.7" width="1.0" height="1.3" fill="#e8e020"/><rect x="984.3" y="265.0" width="2.3" height="1.7" fill="#f02010"/><rect x="882.7" y="260.8" width="1.1" height="1.2" fill="#f0c010"/><rect x="916.7" y="243.4" width="2.0" height="1.5" fill="#f0c010"/><rect x="871.9" y="263.0" width="2.9" height="1.0" fill="#f08010"/><rect x="796.6" y="270.8" width="1.7" height="1.2" fill="#f08010"/><rect x="791.3" y="266.3" width="1.1" height="1.3" fill="#e8e020"/><rect x="829.1" y="312.3" width="1.5" height="1.0" fill="#f0c010"/><rect x="938.3" y="266.6" width="2.0" height="1.0" fill="#e8e020"/><rect x="833.5" y="278.5" width="2.9" height="0.9" fill="#f0d010"/><rect x="866.7" y="258.7" width="1.3" height="0.9" fill="#e8e020"/><rect x="801.7" y="276.2" width="2.5" height="1.8" fill="#f02010"/><rect x="971.7" y="269.9" width="2.3" height="1.3" fill="#f0c010"/><rect x="881.2" y="268.2" width="2.7" height="1.8" fill="#f08010"/><rect x="876.3" y="248.6" width="1.6" height="1.2" fill="#f0d010"/><rect x="976.3" y="250.0" width="1.8" height="1.6" fill="#f0c010"/><rect x="850.2" y="316.0" width="1.1" height="1.3" fill="#f0d010"/><rect x="862.7" y="327.2" width="1.6" height="1.5" fill="#f0c010"/><rect x="882.5" y="299.3" width="2.6" height="1.6" fill="#f0c010"/><rect x="797.9" y="241.4" width="2.6" height="0.9" fill="#f0d010"/><rect x="828.0" y="244.1" width="1.7" height="1.1" fill="#e8e020"/><rect x="976.7" y="297.8" width="2.5" height="1.5" fill="#f02010"/><rect x="970.2" y="266.8" width="2.8" height="1.4" fill="#e8e020"/><rect x="973.9" y="240.4" width="1.2" height="1.5" fill="#f0c010"/><rect x="880.8" y="313.3" width="2.8" height="1.6" fill="#f02010"/><rect x="815.9" y="286.2" width="2.6" height="1.5" fill="#f0d010"/><rect x="950.4" y="313.0" width="1.5" height="1.7" fill="#e8e020"/><rect x="879.9" y="314.0" width="1.2" height="1.0" fill="#e8e020"/><rect x="936.8" y="262.0" width="2.3" height="1.3" fill="#f0d010"/><rect x="896.2" y="253.6" width="2.8" height="1.8" fill="#f08010"/><rect x="841.7" y="246.2" width="1.8" height="1.8" fill="#f0d010"/><rect x="979.6" y="254.8" width="1.8" height="1.4" fill="#f0c010"/><rect x="921.5" y="310.6" width="2.6" height="1.1" fill="#f0d010"/><rect x="844.5" y="264.0" width="2.5" height="1.0" fill="#f02010"/><rect x="838.2" y="261.8" width="1.6" height="1.7" fill="#f0c010"/><rect x="826.7" y="244.3" width="3.0" height="1.3" fill="#f02010"/><rect x="835.1" y="316.4" width="3.0" height="0.9" fill="#f08010"/><rect x="882.6" y="317.5" width="2.8" height="0.8" fill="#f08010"/><rect x="847.3" y="249.6" width="2.2" height="1.6" fill="#f0c010"/><rect x="827.9" y="245.3" width="2.7" height="1.2" fill="#e8e020"/><rect x="840.7" y="313.4" width="1.2" height="1.4" fill="#f0d010"/><rect x="910.9" y="259.1" width="1.7" height="0.8" fill="#f02010"/><rect x="985.0" y="241.7" width="2.6" height="1.6" fill="#f0c010"/><rect x="869.8" y="274.1" width="1.6" height="1.0" fill="#e8e020"/><rect x="945.1" y="291.2" width="1.8" height="1.6" fill="#f0d010"/><rect x="919.5" y="253.0" width="1.2" height="1.0" fill="#e8e020"/><rect x="925.6" y="277.7" width="2.3" height="1.2" fill="#f02010"/><rect x="800.0" y="310.3" width="1.8" height="0.8" fill="#f02010"/><rect x="939.5" y="315.8" width="1.8" height="1.2" fill="#f0c010"/><rect x="973.7" y="280.1" width="1.8" height="1.6" fill="#f0c010"/><rect x="869.2" y="323.6" width="2.5" height="0.9" fill="#f08010"/><rect x="800.1" y="251.8" width="1.2" height="1.4" fill="#f08010"/><rect x="862.3" y="286.9" width="1.7" height="1.0" fill="#f0c010"/><rect x="823.5" y="244.5" width="2.0" height="1.6" fill="#f08010"/><rect x="978.5" y="257.1" width="2.7" height="0.8" fill="#f0c010"/><rect x="968.0" y="268.5" width="2.9" height="1.2" fill="#e8e020"/><rect x="966.3" y="298.2" width="2.3" height="1.7" fill="#f0c010"/><rect x="911.1" y="297.6" width="2.7" height="1.0" fill="#f0c010"/><rect x="832.5" y="276.8" width="1.3" height="1.2" fill="#e8e020"/><rect x="819.1" y="332.2" width="1.1" height="1.4" fill="#f0c010"/><rect x="937.7" y="241.7" width="1.2" height="1.4" fill="#f02010"/><rect x="897.3" y="298.8" width="2.3" height="1.1" fill="#f02010"/><rect x="838.6" y="275.8" width="1.9" height="1.2" fill="#f02010"/><rect x="794.6" y="298.0" width="1.9" height="1.2" fill="#f08010"/><rect x="910.6" y="317.4" width="2.6" height="1.2" fill="#f0c010"/><rect x="803.1" y="272.8" width="1.2" height="1.2" fill="#f02010"/><rect x="889.5" y="242.0" width="1.2" height="1.5" fill="#f0c010"/><rect x="941.6" y="287.6" width="2.5" height="1.7" fill="#f0d010"/><rect x="917.3" y="314.1" width="2.7" height="1.8" fill="#f0d010"/><rect x="932.8" y="317.1" width="1.3" height="1.7" fill="#f0c010"/><rect x="846.1" y="316.7" width="2.4" height="1.5" fill="#f0c010"/><rect x="833.1" y="318.8" width="2.5" height="1.0" fill="#e8e020"/><rect x="964.8" y="264.7" width="1.3" height="1.3" fill="#f08010"/><rect x="969.4" y="258.2" width="2.2" height="1.0" fill="#f02010"/><rect x="862.6" y="257.3" width="1.3" height="1.7" fill="#f08010"/><rect x="922.5" y="324.9" width="2.6" height="1.1" fill="#f0c010"/><rect x="939.8" y="242.7" width="2.9" height="1.3" fill="#f02010"/><rect x="891.7" y="304.8" width="1.5" height="1.3" fill="#f0d010"/><rect x="957.0" y="309.6" width="1.5" height="1.8" fill="#f02010"/><rect x="902.6" y="272.9" width="1.9" height="1.0" fill="#f0d010"/><rect x="935.0" y="242.7" width="1.5" height="1.4" fill="#e8e020"/><rect x="981.9" y="294.8" width="2.5" height="1.5" fill="#f02010"/><rect x="833.2" y="266.2" width="1.8" height="1.2" fill="#f08010"/><rect x="799.3" y="285.4" width="2.3" height="0.8" fill="#e8e020"/><rect x="790.5" y="272.4" width="2.0" height="1.3" fill="#f0d010"/><rect x="870.6" y="267.2" width="1.4" height="1.4" fill="#f0c010"/><rect x="882.6" y="251.1" width="2.4" height="1.3" fill="#f0c010"/><rect x="802.4" y="252.0" width="1.8" height="1.1" fill="#f02010"/><rect x="792.2" y="300.6" width="2.8" height="1.4" fill="#e8e020"/><rect x="902.8" y="296.4" width="2.5" height="1.0" fill="#e8e020"/><rect x="966.2" y="242.3" width="1.1" height="1.0" fill="#e8e020"/><rect x="821.0" y="326.4" width="1.0" height="1.4" fill="#f0d010"/><rect x="973.5" y="251.8" width="2.0" height="1.4" fill="#f0c010"/><rect x="916.3" y="278.3" width="1.3" height="1.1" fill="#e8e020"/><rect x="848.6" y="242.7" width="2.4" height="0.8" fill="#f08010"/><rect x="954.7" y="310.3" width="1.2" height="1.5" fill="#f08010"/><rect x="824.2" y="334.7" width="1.5" height="0.8" fill="#f02010"/><rect x="855.4" y="310.7" width="2.4" height="1.1" fill="#f02010"/><rect x="898.0" y="280.3" width="2.9" height="1.1" fill="#e8e020"/><rect x="971.1" y="324.7" width="2.8" height="0.8" fill="#f0d010"/><rect x="840.8" y="260.9" width="2.9" height="1.5" fill="#f0c010"/><rect x="853.7" y="323.4" width="2.2" height="1.2" fill="#f02010"/><rect x="956.1" y="327.4" width="1.9" height="1.6" fill="#e8e020"/><rect x="926.0" y="321.2" width="2.9" height="1.0" fill="#f08010"/><rect x="962.5" y="314.6" width="2.2" height="0.9" fill="#f08010"/><rect x="967.6" y="252.0" width="1.2" height="1.4" fill="#f0d010"/><rect x="821.6" y="332.8" width="1.1" height="0.9" fill="#f0d010"/><rect x="915.5" y="242.1" width="2.5" height="0.9" fill="#f0d010"/><rect x="905.1" y="273.3" width="2.8" height="0.9" fill="#e8e020"/><rect x="959.2" y="326.7" width="1.2" height="1.0" fill="#f08010"/><rect x="811.8" y="241.3" width="2.7" height="1.4" fill="#f0d010"/><rect x="846.0" y="247.7" width="2.6" height="1.4" fill="#f0d010"/><rect x="847.4" y="270.6" width="1.0" height="1.1" fill="#f02010"/><rect x="845.1" y="307.4" width="2.8" height="1.6" fill="#f02010"/><rect x="907.4" y="284.2" width="2.2" height="0.8" fill="#f02010"/><rect x="870.5" y="280.3" width="1.7" height="1.5" fill="#f0d010"/><rect x="894.9" y="259.0" width="2.1" height="1.1" fill="#f0d010"/><rect x="875.0" y="288.8" width="2.5" height="1.8" fill="#f02010"/><rect x="790.9" y="285.6" width="2.4" height="1.6" fill="#f08010"/><rect x="978.6" y="295.5" width="1.5" height="1.7" fill="#e8e020"/><rect x="845.3" y="258.8" width="2.0" height="0.9" fill="#f0c010"/><rect x="914.1" y="245.8" width="2.6" height="1.4" fill="#e8e020"/><rect x="859.3" y="276.9" width="2.8" height="1.5" fill="#f08010"/><rect x="872.3" y="300.6" width="1.4" height="1.1" fill="#f02010"/><rect x="965.7" y="286.6" width="3.0" height="1.4" fill="#f08010"/><rect x="974.1" y="250.3" width="2.5" height="1.6" fill="#e8e020"/><rect x="916.0" y="271.8" width="2.0" height="1.7" fill="#f02010"/><rect x="877.8" y="291.7" width="1.3" height="1.2" fill="#f02010"/><rect x="940.8" y="294.2" width="1.7" height="1.4" fill="#f0c010"/><rect x="925.8" y="287.2" width="1.6" height="1.5" fill="#f02010"/><rect x="954.5" y="253.0" width="2.9" height="1.5" fill="#f0c010"/><rect x="907.6" y="271.8" width="1.7" height="1.0" fill="#f0c010"/><rect x="980.2" y="308.7" width="1.3" height="1.5" fill="#f0d010"/><rect x="828.1" y="252.6" width="2.6" height="1.5" fill="#f0c010"/><rect x="874.8" y="257.0" width="1.6" height="1.7" fill="#f0d010"/><rect x="880.5" y="239.2" width="2.4" height="1.3" fill="#f08010"/><rect x="913.3" y="282.9" width="1.5" height="1.5" fill="#f0c010"/><rect x="791.1" y="261.5" width="2.4" height="1.4" fill="#f08010"/><rect x="916.2" y="320.1" width="2.7" height="1.5" fill="#e8e020"/><rect x="915.1" y="282.0" width="1.5" height="1.5" fill="#f02010"/><rect x="964.5" y="261.5" width="2.4" height="1.4" fill="#f08010"/><rect x="838.8" y="279.1" width="1.0" height="1.7" fill="#f08010"/><rect x="891.1" y="302.1" width="2.8" height="1.1" fill="#f0c010"/><rect x="792.1" y="318.7" width="1.1" height="1.3" fill="#f0d010"/><rect x="821.4" y="313.8" width="2.0" height="0.9" fill="#f0c010"/><rect x="902.0" y="290.5" width="2.0" height="1.4" fill="#f08010"/><rect x="951.7" y="288.6" width="2.5" height="1.3" fill="#f08010"/><rect x="983.1" y="255.8" width="2.5" height="0.9" fill="#e8e020"/><rect x="982.0" y="272.5" width="1.5" height="1.2" fill="#f0d010"/><rect x="802.0" y="245.3" width="2.3" height="1.5" fill="#f08010"/><rect x="903.1" y="248.6" width="2.5" height="1.7" fill="#f02010"/><rect x="892.8" y="259.2" width="1.9" height="1.0" fill="#f08010"/><rect x="971.2" y="244.7" width="1.9" height="1.4" fill="#f0c010"/><rect x="834.1" y="331.5" width="2.3" height="1.6" fill="#f02010"/><rect x="945.1" y="278.1" width="2.5" height="1.4" fill="#f02010"/><rect x="942.1" y="283.5" width="1.5" height="1.2" fill="#f0c010"/><rect x="839.4" y="279.3" width="2.0" height="1.6" fill="#f0c010"/><rect x="945.8" y="272.7" width="1.6" height="1.3" fill="#f02010"/><rect x="911.6" y="246.3" width="1.3" height="1.1" fill="#f02010"/><rect x="865.1" y="246.3" width="2.8" height="1.6" fill="#e8e020"/><rect x="817.4" y="318.6" width="1.0" height="0.8" fill="#e8e020"/><rect x="975.6" y="301.6" width="2.2" height="1.4" fill="#f02010"/><rect x="956.6" y="256.0" width="1.7" height="1.0" fill="#f08010"/><rect x="966.3" y="314.8" width="2.2" height="1.5" fill="#f0c010"/><rect x="980.5" y="246.8" width="2.6" height="1.6" fill="#e8e020"/><rect x="828.5" y="305.2" width="1.2" height="1.6" fill="#e8e020"/><rect x="920.9" y="249.3" width="1.5" height="1.0" fill="#f0d010"/><rect x="817.2" y="285.8" width="2.0" height="1.7" fill="#f0d010"/><rect x="926.6" y="261.9" width="2.1" height="1.7" fill="#f0c010"/><rect x="791.3" y="319.6" width="2.4" height="1.3" fill="#f08010"/><rect x="847.9" y="283.2" width="1.8" height="1.8" fill="#f08010"/><rect x="804.7" y="299.8" width="1.0" height="0.8" fill="#f0d010"/><rect x="933.6" y="334.9" width="2.0" height="1.3" fill="#f0d010"/><rect x="965.0" y="241.3" width="2.3" height="1.1" fill="#f08010"/><rect x="958.0" y="273.5" width="2.6" height="1.4" fill="#f08010"/><rect x="967.9" y="265.6" width="1.8" height="1.4" fill="#f02010"/><rect x="951.2" y="266.4" width="1.8" height="1.3" fill="#f08010"/><rect x="843.0" y="287.1" width="2.3" height="1.6" fill="#f0c010"/><rect x="854.5" y="268.8" width="1.3" height="1.8" fill="#f02010"/><rect x="807.1" y="334.7" width="2.4" height="1.7" fill="#f08010"/><rect x="896.4" y="242.8" width="1.2" height="0.8" fill="#f02010"/><rect x="950.3" y="284.1" width="2.6" height="1.7" fill="#f0d010"/><rect x="909.3" y="297.8" width="2.8" height="0.9" fill="#e8e020"/><rect x="797.7" y="299.5" width="1.2" height="1.0" fill="#f0c010"/><rect x="797.2" y="313.1" width="1.7" height="1.6" fill="#f0d010"/><rect x="943.4" y="292.5" width="2.7" height="1.0" fill="#f02010"/><rect x="796.7" y="240.0" width="2.3" height="1.7" fill="#e8e020"/><rect x="800.7" y="293.0" width="2.6" height="1.6" fill="#f0d010"/><rect x="872.1" y="305.5" width="1.9" height="0.8" fill="#f08010"/><rect x="865.5" y="295.4" width="2.0" height="1.2" fill="#f0c010"/><rect x="809.9" y="300.5" width="2.8" height="1.4" fill="#f0c010"/><rect x="873.3" y="238.9" width="3.0" height="1.7" fill="#f0d010"/><rect x="832.6" y="249.8" width="1.0" height="1.5" fill="#f08010"/><rect x="837.2" y="309.2" width="2.8" height="1.2" fill="#f0c010"/><rect x="935.7" y="305.4" width="2.5" height="0.9" fill="#f0c010"/><rect x="912.6" y="306.8" width="2.3" height="1.7" fill="#f08010"/><rect x="968.1" y="243.1" width="1.0" height="0.8" fill="#f0d010"/><rect x="916.9" y="317.3" width="1.8" height="1.1" fill="#f0d010"/><rect x="907.0" y="330.9" width="2.2" height="1.1" fill="#f08010"/><rect x="975.0" y="308.6" width="2.4" height="0.9" fill="#f08010"/><rect x="945.5" y="273.2" width="2.3" height="1.2" fill="#f0c010"/><rect x="865.2" y="314.3" width="2.6" height="1.4" fill="#f02010"/><rect x="847.0" y="243.9" width="1.7" height="1.4" fill="#e8e020"/><rect x="980.6" y="318.6" width="2.7" height="1.4" fill="#e8e020"/><rect x="980.4" y="261.9" width="2.4" height="1.4" fill="#f08010"/><rect x="964.7" y="316.3" width="2.4" height="1.1" fill="#f02010"/><rect x="842.3" y="253.3" width="1.6" height="0.9" fill="#f0d010"/><rect x="963.7" y="334.3" width="1.5" height="1.7" fill="#f0c010"/><rect x="947.4" y="304.4" width="1.7" height="0.9" fill="#f08010"/><rect x="898.0" y="315.3" width="2.6" height="1.5" fill="#f0c010"/><rect x="981.5" y="268.0" width="2.4" height="1.3" fill="#f0d010"/><rect x="830.3" y="262.7" width="2.6" height="1.3" fill="#f0d010"/><rect x="807.1" y="316.2" width="1.5" height="1.4" fill="#f0d010"/><rect x="964.9" y="323.9" width="1.6" height="1.3" fill="#e8e020"/><rect x="829.4" y="258.6" width="1.4" height="1.5" fill="#f0d010"/><rect x="860.8" y="292.7" width="2.6" height="1.7" fill="#f08010"/><rect x="838.0" y="327.5" width="1.7" height="0.9" fill="#f08010"/><rect x="913.4" y="314.4" width="1.6" height="0.8" fill="#f0c010"/><rect x="844.7" y="296.9" width="1.1" height="1.8" fill="#f0d010"/><rect x="958.9" y="285.2" width="1.4" height="1.7" fill="#e8e020"/><rect x="844.6" y="247.4" width="2.5" height="1.6" fill="#f08010"/><rect x="977.9" y="262.6" width="1.7" height="1.8" fill="#f0d010"/><rect x="863.7" y="240.7" width="2.1" height="1.7" fill="#f0d010"/><rect x="879.4" y="329.9" width="2.7" height="1.4" fill="#f0d010"/><rect x="969.8" y="306.5" width="1.5" height="1.4" fill="#f0d010"/><rect x="914.9" y="330.8" width="1.8" height="1.2" fill="#e8e020"/><rect x="821.1" y="331.7" width="1.3" height="1.7" fill="#f0c010"/><rect x="973.5" y="243.7" width="2.8" height="1.6" fill="#e8e020"/><rect x="799.2" y="314.3" width="1.1" height="0.9" fill="#f08010"/><rect x="937.2" y="329.1" width="2.2" height="1.2" fill="#f02010"/><rect x="917.2" y="283.7" width="1.5" height="0.9" fill="#f02010"/><rect x="883.9" y="254.4" width="2.6" height="1.7" fill="#f0c010"/><rect x="964.0" y="283.4" width="2.6" height="1.0" fill="#f0c010"/><rect x="952.4" y="245.5" width="2.7" height="1.7" fill="#e8e020"/><rect x="817.3" y="281.4" width="2.9" height="1.2" fill="#f0d010"/><rect x="794.2" y="245.3" width="1.6" height="1.0" fill="#f02010"/><rect x="812.5" y="273.5" width="1.4" height="0.9" fill="#f02010"/><rect x="929.2" y="291.7" width="1.9" height="0.9" fill="#f0c010"/><rect x="871.6" y="261.9" width="1.5" height="1.6" fill="#f0d010"/><rect x="855.2" y="254.3" width="1.2" height="1.3" fill="#f08010"/><rect x="884.1" y="252.9" width="1.1" height="1.7" fill="#e8e020"/><rect x="920.3" y="258.5" width="2.7" height="0.9" fill="#f08010"/><rect x="937.2" y="332.2" width="3.0" height="1.8" fill="#f08010"/><rect x="970.4" y="247.5" width="1.8" height="1.0" fill="#f02010"/><rect x="952.3" y="332.9" width="3.0" height="0.8" fill="#f0c010"/><rect x="947.4" y="271.1" width="1.9" height="1.6" fill="#f0c010"/><rect x="974.0" y="265.8" width="1.9" height="1.7" fill="#f02010"/><rect x="832.6" y="293.4" width="2.7" height="1.3" fill="#f0c010"/><rect x="834.9" y="255.0" width="1.2" height="0.9" fill="#e8e020"/><rect x="908.7" y="286.1" width="1.4" height="0.9" fill="#f02010"/><rect x="920.6" y="299.0" width="2.2" height="1.0" fill="#f0c010"/><rect x="802.8" y="309.1" width="2.7" height="1.7" fill="#f08010"/><rect x="891.1" y="271.7" width="2.7" height="1.7" fill="#f02010"/><rect x="886.1" y="239.5" width="1.3" height="1.5" fill="#f08010"/><rect x="838.4" y="292.6" width="1.1" height="1.5" fill="#f02010"/><rect x="902.1" y="321.2" width="2.0" height="1.2" fill="#f02010"/><rect x="890.5" y="249.7" width="2.6" height="1.7" fill="#f0c010"/><rect x="852.6" y="307.0" width="2.2" height="1.7" fill="#f08010"/><rect x="846.9" y="248.4" width="1.9" height="0.8" fill="#f08010"/><rect x="946.9" y="251.0" width="2.9" height="1.0" fill="#f0c010"/><rect x="825.6" y="248.0" width="2.1" height="1.8" fill="#f02010"/><rect x="793.8" y="327.9" width="1.5" height="1.6" fill="#f0c010"/><rect x="914.2" y="283.0" width="2.4" height="0.9" fill="#f0c010"/><rect x="959.6" y="307.6" width="1.5" height="1.3" fill="#f0d010"/><rect x="904.3" y="311.9" width="1.2" height="1.2" fill="#f0d010"/><rect x="816.7" y="295.4" width="1.3" height="1.4" fill="#f0c010"/><rect x="935.6" y="253.9" width="2.9" height="1.2" fill="#f0d010"/><rect x="872.0" y="319.5" width="1.1" height="1.8" fill="#e8e020"/><rect x="800.1" y="273.2" width="1.5" height="1.1" fill="#f08010"/><rect x="874.9" y="333.2" width="2.6" height="1.6" fill="#f02010"/><rect x="800.4" y="288.2" width="1.5" height="1.2" fill="#f02010"/><rect x="913.4" y="273.3" width="1.4" height="1.1" fill="#e8e020"/><rect x="829.2" y="302.9" width="1.3" height="1.8" fill="#f0c010"/><rect x="941.4" y="328.9" width="2.6" height="1.7" fill="#f0d010"/><rect x="962.5" y="241.3" width="1.5" height="1.5" fill="#e8e020"/><rect x="843.3" y="290.6" width="2.2" height="1.1" fill="#f0d010"/><rect x="891.5" y="280.1" width="1.6" height="1.1" fill="#f0d010"/><rect x="916.3" y="249.7" width="2.9" height="1.7" fill="#e8e020"/><rect x="965.8" y="246.2" width="2.1" height="0.9" fill="#e8e020"/></g><g clip-path="url(#cu)"><rect x="806.2" y="258.3" width="2.8" height="1.4" fill="#f0a010"/><rect x="813.7" y="273.4" width="2.1" height="1.6" fill="#f02010"/><rect x="830.5" y="269.3" width="1.8" height="1.3" fill="#f02010"/><rect x="818.3" y="277.3" width="2.2" height="1.3" fill="#f0a010"/><rect x="815.5" y="261.1" width="1.4" height="1.3" fill="#f0d010"/><rect x="848.5" y="264.9" width="1.3" height="1.8" fill="#f0a010"/><rect x="816.2" y="263.1" width="1.6" height="1.8" fill="#f0a010"/><rect x="814.8" y="274.3" width="2.1" height="1.4" fill="#f0d010"/><rect x="817.4" y="271.4" width="1.8" height="1.2" fill="#f02010"/><rect x="836.8" y="257.7" width="3.0" height="1.5" fill="#f0d010"/><rect x="846.7" y="265.4" width="1.7" height="1.5" fill="#f02010"/><rect x="830.8" y="276.2" width="1.2" height="1.7" fill="#f02010"/><rect x="846.1" y="279.9" width="2.6" height="1.5" fill="#f0a010"/><rect x="845.7" y="258.2" width="1.0" height="1.6" fill="#f0d010"/><rect x="829.3" y="267.4" width="1.3" height="1.6" fill="#f02010"/><rect x="814.0" y="270.5" width="1.8" height="1.3" fill="#f0d010"/><rect x="822.9" y="273.1" width="1.7" height="1.3" fill="#f0a010"/><rect x="829.8" y="271.2" width="2.6" height="1.6" fill="#f0d010"/><rect x="825.0" y="266.1" width="2.1" height="1.6" fill="#f0d010"/><rect x="821.8" y="264.4" width="1.2" height="1.7" fill="#f0d010"/><rect x="816.2" y="276.1" width="2.9" height="1.0" fill="#f0d010"/><rect x="821.3" y="277.8" width="1.1" height="1.1" fill="#f0d010"/><rect x="844.8" y="262.5" width="2.5" height="1.3" fill="#f02010"/><rect x="849.9" y="267.9" width="2.5" height="1.2" fill="#f02010"/><rect x="823.2" y="256.0" width="1.7" height="1.7" fill="#f02010"/><rect x="833.8" y="268.1" width="1.8" height="1.3" fill="#f0d010"/><rect x="832.4" y="278.2" width="2.8" height="1.8" fill="#f0d010"/><rect x="824.3" y="266.0" width="2.8" height="1.4" fill="#f02010"/><rect x="834.6" y="273.7" width="1.3" height="1.1" fill="#f0d010"/><rect x="848.9" y="275.7" width="1.4" height="1.5" fill="#f02010"/><rect x="814.7" y="263.6" width="2.8" height="1.2" fill="#f02010"/><rect x="807.8" y="262.2" width="1.4" height="1.7" fill="#f02010"/><rect x="820.6" y="256.5" width="2.2" height="1.2" fill="#f02010"/><rect x="849.7" y="270.9" width="2.4" height="0.8" fill="#f0d010"/><rect x="800.1" y="272.8" width="1.0" height="1.1" fill="#f02010"/><rect x="842.1" y="269.7" width="1.1" height="1.0" fill="#f02010"/><rect x="838.4" y="269.2" width="2.8" height="1.3" fill="#f02010"/><rect x="807.2" y="260.0" width="1.2" height="1.0" fill="#f02010"/><rect x="838.0" y="257.7" width="1.2" height="1.7" fill="#f0d010"/><rect x="824.5" y="266.7" width="2.6" height="0.9" fill="#f0a010"/><rect x="800.6" y="274.3" width="1.3" height="1.0" fill="#f0a010"/><rect x="813.8" y="255.8" width="1.2" height="1.7" fill="#f02010"/><rect x="829.1" y="263.7" width="2.2" height="0.8" fill="#f0a010"/><rect x="811.0" y="264.9" width="1.9" height="1.4" fill="#f0d010"/><rect x="812.5" y="256.1" width="2.7" height="1.1" fill="#f02010"/><rect x="844.9" y="275.4" width="1.8" height="1.1" fill="#f0a010"/><rect x="844.3" y="279.5" width="1.5" height="1.2" fill="#f0d010"/><rect x="835.9" y="260.5" width="1.8" height="1.5" fill="#f0a010"/><rect x="801.1" y="276.7" width="1.3" height="1.2" fill="#f0d010"/><rect x="809.3" y="279.3" width="1.8" height="1.2" fill="#f0a010"/><rect x="816.8" y="276.8" width="1.8" height="0.9" fill="#f0a010"/><rect x="806.2" y="275.6" width="2.1" height="1.2" fill="#f0a010"/><rect x="823.4" y="263.6" width="1.1" height="1.5" fill="#f0a010"/><rect x="817.1" y="258.9" width="1.3" height="1.0" fill="#f02010"/><rect x="827.2" y="274.7" width="1.9" height="1.6" fill="#f02010"/><rect x="840.2" y="259.0" width="1.4" height="1.2" fill="#f0a010"/><rect x="831.5" y="269.5" width="2.9" height="1.3" fill="#f0a010"/><rect x="811.4" y="266.3" width="2.9" height="1.8" fill="#f0d010"/><rect x="829.8" y="266.0" width="2.1" height="1.2" fill="#f0a010"/><rect x="825.5" y="258.1" width="2.4" height="0.9" fill="#f0d010"/><rect x="842.6" y="273.4" width="1.1" height="1.5" fill="#f0a010"/><rect x="807.3" y="255.4" width="1.2" height="1.0" fill="#f02010"/><rect x="842.6" y="263.0" width="2.8" height="0.9" fill="#f02010"/><rect x="845.7" y="275.1" width="1.4" height="1.5" fill="#f0a010"/><rect x="804.4" y="262.2" width="1.8" height="1.2" fill="#f02010"/><rect x="842.2" y="266.6" width="2.8" height="1.7" fill="#f02010"/><rect x="806.6" y="261.9" width="1.7" height="1.6" fill="#f0d010"/><rect x="834.5" y="277.4" width="2.3" height="1.5" fill="#f0d010"/><rect x="812.4" y="276.2" width="2.8" height="0.9" fill="#f0a010"/><rect x="814.6" y="261.8" width="2.5" height="1.5" fill="#f02010"/><rect x="802.0" y="256.0" width="1.9" height="1.6" fill="#f0d010"/><rect x="807.8" y="273.5" width="1.6" height="1.4" fill="#f02010"/><rect x="809.0" y="276.0" width="2.0" height="1.3" fill="#f02010"/><rect x="846.3" y="271.8" width="1.7" height="0.8" fill="#f02010"/><rect x="841.7" y="274.4" width="2.8" height="1.7" fill="#f0a010"/><rect x="829.3" y="272.4" width="2.4" height="0.8" fill="#f0d010"/><rect x="815.9" y="274.4" width="2.5" height="0.9" fill="#f0a010"/><rect x="834.7" y="264.8" width="2.2" height="1.0" fill="#f02010"/><rect x="826.4" y="263.7" width="1.9" height="1.1" fill="#f0a010"/><rect x="825.2" y="272.2" width="2.3" height="1.3" fill="#f02010"/><rect x="833.8" y="260.1" width="2.0" height="1.7" fill="#f02010"/><rect x="806.4" y="274.0" width="2.9" height="1.6" fill="#f0d010"/><rect x="828.0" y="259.4" width="2.9" height="1.4" fill="#f0d010"/><rect x="827.2" y="261.2" width="1.3" height="1.1" fill="#f0d010"/><rect x="804.6" y="270.9" width="1.3" height="1.5" fill="#f0d010"/><rect x="833.5" y="260.9" width="1.0" height="1.5" fill="#f0d010"/><rect x="806.7" y="271.0" width="1.6" height="1.7" fill="#f02010"/><rect x="807.1" y="269.1" width="2.3" height="0.9" fill="#f0a010"/><rect x="821.2" y="278.5" width="2.3" height="1.4" fill="#f02010"/><rect x="823.1" y="274.2" width="1.2" height="1.1" fill="#f0d010"/><rect x="818.0" y="260.2" width="2.8" height="1.1" fill="#f0d010"/><rect x="805.5" y="262.7" width="1.3" height="1.2" fill="#f0d010"/><rect x="828.5" y="262.2" width="1.1" height="0.8" fill="#f02010"/><rect x="849.6" y="273.8" width="2.5" height="1.1" fill="#f0d010"/><rect x="836.9" y="261.6" width="2.0" height="1.2" fill="#f02010"/><rect x="809.5" y="268.6" width="1.7" height="0.9" fill="#f0d010"/><rect x="814.3" y="270.3" width="2.3" height="1.1" fill="#f02010"/><rect x="812.3" y="258.5" width="1.1" height="1.2" fill="#f0d010"/><rect x="807.3" y="264.2" width="2.1" height="1.7" fill="#f02010"/><rect x="834.1" y="257.6" width="2.7" height="1.5" fill="#f02010"/><rect x="816.3" y="259.6" width="1.6" height="1.2" fill="#f0a010"/><rect x="827.6" y="264.2" width="1.5" height="0.8" fill="#f0a010"/><rect x="828.3" y="270.7" width="1.8" height="0.9" fill="#f02010"/><rect x="810.8" y="265.6" width="1.3" height="1.1" fill="#f02010"/><rect x="829.1" y="257.0" width="1.5" height="0.9" fill="#f02010"/><rect x="831.8" y="265.0" width="2.7" height="1.3" fill="#f0d010"/><rect x="810.9" y="264.3" width="2.7" height="1.7" fill="#f0d010"/><rect x="839.3" y="265.6" width="1.1" height="0.9" fill="#f0a010"/><rect x="835.5" y="277.3" width="1.9" height="1.5" fill="#f0d010"/><rect x="841.3" y="277.6" width="1.8" height="0.8" fill="#f0d010"/><rect x="840.2" y="271.9" width="1.4" height="0.9" fill="#f02010"/><rect x="816.2" y="266.5" width="2.8" height="1.7" fill="#f02010"/><rect x="848.7" y="279.0" width="1.2" height="1.6" fill="#f02010"/><rect x="836.1" y="263.3" width="1.6" height="1.4" fill="#f02010"/><rect x="847.6" y="267.0" width="1.3" height="1.7" fill="#f02010"/><rect x="826.5" y="270.8" width="1.4" height="1.5" fill="#f0d010"/><rect x="834.6" y="258.7" width="1.7" height="1.4" fill="#f02010"/><rect x="820.8" y="268.2" width="1.9" height="1.1" fill="#f02010"/><rect x="811.4" y="279.2" width="2.1" height="0.9" fill="#f0d010"/><rect x="843.1" y="261.3" width="1.4" height="1.5" fill="#f0d010"/></g><g clip-path="url(#cu)"><rect x="803.8" y="256.8" width="1.5" height="1.4" fill="#e8e020"/><rect x="750.2" y="265.4" width="2.7" height="1.5" fill="#f0d010"/><rect x="812.0" y="254.0" width="2.3" height="1.8" fill="#f0d010"/><rect x="786.4" y="263.8" width="2.1" height="1.8" fill="#e8e020"/><rect x="757.2" y="264.3" width="1.3" height="1.6" fill="#f0d010"/><rect x="745.2" y="257.1" width="1.1" height="1.5" fill="#f02010"/><rect x="826.0" y="263.8" width="2.4" height="1.2" fill="#f0d010"/><rect x="820.0" y="268.6" width="2.1" height="1.7" fill="#f0a010"/><rect x="818.4" y="255.0" width="2.6" height="1.5" fill="#f02010"/><rect x="741.0" y="257.7" width="1.7" height="1.5" fill="#f0a010"/><rect x="825.3" y="271.7" width="2.6" height="1.2" fill="#f0d010"/><rect x="772.0" y="259.8" width="1.1" height="1.7" fill="#f0d010"/><rect x="761.8" y="260.6" width="1.0" height="1.8" fill="#e8e020"/><rect x="779.6" y="273.7" width="1.2" height="1.6" fill="#e8e020"/><rect x="756.7" y="266.6" width="2.7" height="1.5" fill="#f02010"/><rect x="815.3" y="267.6" width="2.1" height="1.5" fill="#f02010"/><rect x="812.7" y="278.5" width="1.0" height="1.8" fill="#f0d010"/><rect x="783.8" y="264.5" width="2.6" height="0.8" fill="#f0d010"/><rect x="756.4" y="274.5" width="2.7" height="1.8" fill="#e8e020"/><rect x="802.4" y="263.5" width="2.7" height="1.4" fill="#f0a010"/><rect x="746.8" y="259.9" width="1.6" height="0.9" fill="#f0a010"/><rect x="796.2" y="256.3" width="2.5" height="1.1" fill="#f02010"/><rect x="782.2" y="278.1" width="1.0" height="1.4" fill="#f02010"/><rect x="770.0" y="250.6" width="2.8" height="1.4" fill="#e8e020"/><rect x="796.8" y="271.8" width="1.5" height="1.1" fill="#f0a010"/><rect x="785.0" y="257.9" width="3.0" height="0.8" fill="#f0a010"/><rect x="790.5" y="273.1" width="2.5" height="1.4" fill="#f0a010"/><rect x="797.1" y="260.9" width="2.6" height="1.0" fill="#f02010"/><rect x="811.7" y="254.2" width="1.6" height="1.6" fill="#f0d010"/><rect x="806.6" y="265.3" width="1.7" height="1.4" fill="#f0a010"/><rect x="776.5" y="251.8" width="2.3" height="1.7" fill="#f02010"/><rect x="810.4" y="265.1" width="2.6" height="1.8" fill="#f0a010"/><rect x="753.6" y="256.2" width="1.8" height="1.2" fill="#e8e020"/><rect x="809.5" y="277.9" width="1.3" height="1.5" fill="#f0d010"/><rect x="762.7" y="267.2" width="1.1" height="1.0" fill="#f02010"/><rect x="823.2" y="267.5" width="2.2" height="1.8" fill="#f02010"/><rect x="772.1" y="273.2" width="2.4" height="1.7" fill="#e8e020"/><rect x="815.5" y="259.6" width="1.6" height="1.1" fill="#f0a010"/><rect x="742.1" y="254.9" width="1.5" height="0.8" fill="#f02010"/><rect x="744.3" y="263.4" width="2.7" height="1.4" fill="#f02010"/><rect x="757.7" y="272.0" width="2.2" height="0.9" fill="#f0a010"/><rect x="812.9" y="276.3" width="2.4" height="0.8" fill="#f02010"/><rect x="764.4" y="269.3" width="2.3" height="1.7" fill="#f0d010"/><rect x="759.1" y="259.8" width="2.3" height="1.2" fill="#f0d010"/><rect x="801.1" y="260.1" width="2.7" height="1.6" fill="#f0d010"/><rect x="747.8" y="268.4" width="3.0" height="1.2" fill="#e8e020"/><rect x="824.6" y="276.2" width="2.9" height="1.4" fill="#f0d010"/><rect x="828.9" y="251.7" width="1.3" height="0.8" fill="#f02010"/><rect x="758.9" y="265.9" width="1.7" height="1.2" fill="#f0d010"/><rect x="771.0" y="270.4" width="2.3" height="1.4" fill="#f0a010"/><rect x="769.8" y="272.2" width="2.6" height="1.3" fill="#f02010"/><rect x="742.8" y="269.4" width="2.1" height="1.2" fill="#e8e020"/><rect x="787.7" y="258.2" width="1.0" height="1.3" fill="#f02010"/><rect x="799.0" y="273.2" width="1.3" height="1.4" fill="#f02010"/><rect x="776.1" y="279.4" width="2.2" height="0.9" fill="#f0d010"/><rect x="788.9" y="256.1" width="1.5" height="1.4" fill="#f0a010"/><rect x="806.4" y="277.1" width="2.1" height="1.2" fill="#f0a010"/><rect x="803.9" y="263.2" width="1.4" height="1.7" fill="#e8e020"/><rect x="821.1" y="261.7" width="1.6" height="1.7" fill="#f0a010"/><rect x="749.7" y="272.0" width="2.6" height="1.7" fill="#f0d010"/><rect x="800.7" y="260.5" width="2.1" height="1.2" fill="#f0a010"/><rect x="822.7" y="278.3" width="1.1" height="0.8" fill="#f0a010"/><rect x="803.8" y="257.3" width="1.4" height="1.6" fill="#f02010"/><rect x="797.8" y="259.0" width="1.4" height="1.4" fill="#e8e020"/><rect x="754.1" y="275.9" width="2.9" height="0.9" fill="#f02010"/><rect x="767.0" y="252.7" width="2.0" height="1.7" fill="#f0d010"/><rect x="754.5" y="270.5" width="1.4" height="0.9" fill="#e8e020"/><rect x="810.4" y="275.5" width="1.1" height="1.6" fill="#f02010"/><rect x="779.5" y="263.0" width="3.0" height="1.1" fill="#f0a010"/><rect x="742.2" y="253.3" width="1.3" height="1.1" fill="#f0d010"/><rect x="785.2" y="260.6" width="1.9" height="1.2" fill="#f0a010"/><rect x="777.3" y="269.3" width="2.8" height="1.8" fill="#e8e020"/><rect x="743.0" y="257.0" width="1.1" height="1.3" fill="#f0d010"/><rect x="760.8" y="262.9" width="2.5" height="0.8" fill="#f0d010"/><rect x="820.5" y="251.9" width="1.2" height="1.3" fill="#f0d010"/><rect x="752.2" y="262.9" width="1.4" height="1.3" fill="#f0a010"/><rect x="797.0" y="266.4" width="2.1" height="1.6" fill="#f0d010"/><rect x="826.2" y="252.3" width="2.7" height="1.8" fill="#f0a010"/><rect x="760.2" y="252.2" width="1.0" height="1.1" fill="#f0a010"/><rect x="827.0" y="255.9" width="1.8" height="1.4" fill="#f0d010"/><rect x="772.6" y="250.3" width="2.3" height="1.3" fill="#f0d010"/><rect x="789.4" y="270.7" width="1.8" height="1.1" fill="#f02010"/><rect x="777.7" y="279.2" width="2.5" height="1.7" fill="#e8e020"/><rect x="812.3" y="276.9" width="1.5" height="1.3" fill="#f0d010"/><rect x="829.0" y="270.8" width="3.0" height="1.6" fill="#e8e020"/><rect x="799.7" y="252.6" width="2.8" height="0.8" fill="#f0d010"/><rect x="802.5" y="259.7" width="2.1" height="1.1" fill="#e8e020"/><rect x="827.4" y="250.0" width="2.0" height="1.4" fill="#e8e020"/><rect x="829.5" y="257.0" width="1.7" height="0.9" fill="#e8e020"/><rect x="827.8" y="258.0" width="1.1" height="1.6" fill="#f02010"/><rect x="799.8" y="277.7" width="1.5" height="1.6" fill="#f02010"/><rect x="817.2" y="260.4" width="2.1" height="1.8" fill="#e8e020"/><rect x="745.9" y="272.7" width="2.0" height="1.3" fill="#f02010"/><rect x="813.2" y="257.2" width="1.3" height="1.5" fill="#f0a010"/><rect x="756.0" y="278.4" width="1.6" height="1.2" fill="#f0d010"/><rect x="817.7" y="262.8" width="1.3" height="1.1" fill="#e8e020"/><rect x="749.3" y="260.7" width="1.9" height="0.9" fill="#f02010"/><rect x="775.6" y="279.9" width="1.9" height="1.3" fill="#f0d010"/><rect x="811.8" y="272.8" width="1.0" height="0.9" fill="#f0a010"/><rect x="784.0" y="269.8" width="2.0" height="1.6" fill="#f02010"/><rect x="762.8" y="266.7" width="2.1" height="0.9" fill="#f0d010"/><rect x="756.1" y="271.5" width="2.8" height="1.1" fill="#f02010"/><rect x="763.9" y="263.1" width="2.7" height="1.0" fill="#e8e020"/><rect x="778.1" y="273.8" width="2.8" height="1.5" fill="#f02010"/><rect x="773.8" y="251.3" width="2.9" height="1.2" fill="#f02010"/><rect x="794.7" y="257.7" width="1.8" height="1.4" fill="#f0a010"/><rect x="823.2" y="255.7" width="1.1" height="1.0" fill="#f02010"/><rect x="817.4" y="252.4" width="1.8" height="1.3" fill="#e8e020"/><rect x="784.7" y="277.0" width="1.2" height="1.4" fill="#f0d010"/><rect x="824.2" y="271.0" width="1.8" height="1.3" fill="#e8e020"/><rect x="820.1" y="263.2" width="1.3" height="1.6" fill="#e8e020"/><rect x="740.9" y="257.0" width="1.8" height="0.8" fill="#f0a010"/><rect x="801.2" y="266.6" width="2.5" height="0.9" fill="#e8e020"/><rect x="759.9" y="252.3" width="1.2" height="0.9" fill="#f0d010"/><rect x="807.8" y="266.9" width="2.6" height="1.0" fill="#f0d010"/><rect x="770.2" y="275.9" width="2.7" height="0.9" fill="#e8e020"/><rect x="776.6" y="251.5" width="1.6" height="1.0" fill="#f0a010"/><rect x="828.4" y="255.6" width="2.0" height="0.9" fill="#f02010"/><rect x="774.5" y="269.9" width="2.1" height="1.3" fill="#f02010"/><rect x="777.8" y="251.5" width="1.5" height="1.2" fill="#f02010"/><rect x="779.2" y="266.2" width="1.4" height="0.9" fill="#f02010"/><rect x="788.3" y="261.2" width="2.3" height="1.5" fill="#e8e020"/><rect x="752.7" y="277.9" width="1.4" height="1.7" fill="#f02010"/><rect x="790.1" y="251.5" width="1.0" height="0.9" fill="#f02010"/><rect x="825.6" y="274.7" width="1.5" height="1.6" fill="#f0d010"/><rect x="766.2" y="271.3" width="1.8" height="1.5" fill="#e8e020"/><rect x="758.3" y="256.1" width="1.9" height="1.4" fill="#f0a010"/><rect x="744.4" y="275.9" width="2.6" height="1.3" fill="#f0d010"/><rect x="741.3" y="271.6" width="2.0" height="1.5" fill="#f0a010"/><rect x="800.7" y="258.8" width="2.1" height="1.0" fill="#f0a010"/><rect x="810.0" y="271.5" width="1.9" height="1.0" fill="#f0d010"/><rect x="748.2" y="251.5" width="2.3" height="1.1" fill="#f0a010"/><rect x="821.5" y="270.6" width="2.7" height="1.7" fill="#f0a010"/><rect x="752.0" y="254.8" width="1.6" height="1.0" fill="#e8e020"/><rect x="792.4" y="259.6" width="1.6" height="1.1" fill="#f0a010"/><rect x="789.4" y="256.4" width="1.8" height="0.8" fill="#f0a010"/><rect x="774.2" y="269.2" width="2.3" height="1.5" fill="#f0a010"/><rect x="757.8" y="254.5" width="1.9" height="1.5" fill="#f0a010"/><rect x="750.3" y="274.9" width="2.3" height="1.0" fill="#f0d010"/><rect x="799.1" y="265.7" width="1.6" height="1.1" fill="#f0d010"/></g><g clip-path="url(#cu)"><rect x="562.5" y="229.9" width="1.4" height="1.1" fill="#f0d010"/><rect x="549.1" y="232.5" width="1.4" height="1.3" fill="#f0d010"/><rect x="563.0" y="238.0" width="2.2" height="1.1" fill="#f0d010"/><rect x="557.4" y="218.0" width="1.7" height="1.7" fill="#f0d010"/><rect x="559.7" y="216.5" width="1.7" height="1.3" fill="#f0a010"/><rect x="549.9" y="225.9" width="2.6" height="1.1" fill="#f0d010"/><rect x="542.1" y="231.8" width="2.5" height="0.9" fill="#f0d010"/><rect x="544.8" y="226.8" width="1.1" height="1.3" fill="#f0d010"/><rect x="542.9" y="234.4" width="1.8" height="1.6" fill="#f0d010"/><rect x="542.3" y="236.8" width="1.3" height="1.0" fill="#20a0e0"/><rect x="568.2" y="224.9" width="2.7" height="1.3" fill="#20a0e0"/><rect x="544.5" y="217.8" width="1.2" height="1.3" fill="#f0d010"/><rect x="556.1" y="218.5" width="1.5" height="1.4" fill="#f0a010"/><rect x="541.3" y="222.7" width="1.6" height="1.4" fill="#f0d010"/><rect x="569.6" y="242.3" width="2.7" height="1.3" fill="#20a0e0"/><rect x="566.7" y="215.5" width="2.0" height="1.6" fill="#f0d010"/><rect x="557.1" y="235.7" width="1.2" height="1.0" fill="#f0d010"/><rect x="565.2" y="244.9" width="1.8" height="1.3" fill="#f0a010"/><rect x="548.8" y="241.7" width="2.3" height="1.0" fill="#f0d010"/><rect x="547.3" y="238.2" width="2.4" height="0.9" fill="#20a0e0"/><rect x="547.4" y="233.0" width="1.1" height="1.4" fill="#f0d010"/><rect x="560.8" y="239.4" width="1.2" height="1.6" fill="#f0a010"/><rect x="557.8" y="220.5" width="2.9" height="1.2" fill="#f0a010"/><rect x="552.2" y="217.6" width="1.3" height="1.3" fill="#f0d010"/><rect x="545.0" y="238.9" width="1.4" height="1.7" fill="#f0d010"/><rect x="560.6" y="236.3" width="3.0" height="1.6" fill="#f0d010"/><rect x="554.4" y="229.9" width="2.8" height="1.6" fill="#f0a010"/><rect x="559.1" y="221.0" width="1.1" height="1.2" fill="#20a0e0"/><rect x="552.3" y="234.5" width="2.2" height="1.6" fill="#f0a010"/><rect x="554.8" y="238.2" width="1.3" height="1.6" fill="#f0a010"/><rect x="568.1" y="242.1" width="1.9" height="1.6" fill="#20a0e0"/><rect x="560.4" y="219.9" width="2.7" height="1.6" fill="#f0a010"/><rect x="566.1" y="224.0" width="2.1" height="1.7" fill="#20a0e0"/><rect x="543.5" y="244.1" width="2.5" height="1.6" fill="#f0a010"/><rect x="547.2" y="232.6" width="1.5" height="1.3" fill="#20a0e0"/><rect x="567.2" y="235.6" width="1.1" height="1.5" fill="#20a0e0"/><rect x="551.8" y="233.8" width="2.7" height="1.2" fill="#f0a010"/><rect x="542.6" y="234.6" width="2.3" height="1.7" fill="#f0a010"/><rect x="552.8" y="224.1" width="2.0" height="0.8" fill="#f0a010"/><rect x="543.3" y="239.4" width="1.8" height="1.1" fill="#f0a010"/></g><line x1="846.6" y1="262.2" x2="859.5" y2="256.9" stroke="#2a80e0" stroke-width="1.2" stroke-dasharray="1.5 1"/><line x1="859.5" y1="256.9" x2="876.7" y2="257.9" stroke="#2a80e0" stroke-width="1.2" stroke-dasharray="1.5 1"/><line x1="876.7" y1="257.9" x2="904.6" y2="265.4" stroke="#2a80e0" stroke-width="1.2" stroke-dasharray="1.5 1"/><line x1="904.6" y1="265.4" x2="930.4" y2="273" stroke="#2a80e0" stroke-width="1.2" stroke-dasharray="1.5 1"/><line x1="930.4" y1="273" x2="945.4" y2="280.5" stroke="#2a80e0" stroke-width="1.2" stroke-dasharray="1.5 1"/><line x1="945.4" y1="280.5" x2="947.6" y2="288" stroke="#2a80e0" stroke-width="1.2" stroke-dasharray="1.5 1"/><line x1="930.4" y1="253.6" x2="966.9" y2="267.6" stroke="#2a90e0" stroke-width="1.4" stroke-dasharray="1.5 1"/><line x1="966.9" y1="267.6" x2="977.6" y2="275.1" stroke="#2a90e0" stroke-width="1.4" stroke-dasharray="1.5 1"/><line x1="977.6" y1="275.1" x2="983" y2="288" stroke="#2a90e0" stroke-width="1.4" stroke-dasharray="1.5 1"/><line x1="983" y1="288" x2="980.9" y2="298.7" stroke="#2a90e0" stroke-width="1.4" stroke-dasharray="1.5 1"/><line x1="980.9" y1="298.7" x2="969" y2="309.5" stroke="#2a90e0" stroke-width="1.4" stroke-dasharray="1.5 1"/><line x1="969" y1="309.5" x2="951.9" y2="314.9" stroke="#2a90e0" stroke-width="1.4" stroke-dasharray="1.5 1"/><g clip-path="url(#cl)"><rect x="671.9" y="417.3" width="1.7" height="1.6" fill="#f02010"/><rect x="704.1" y="404.6" width="3.0" height="1.0" fill="#f02010"/><rect x="722.5" y="410.4" width="1.2" height="1.5" fill="#f06010"/><rect x="664.8" y="431.1" width="1.8" height="1.1" fill="#f06010"/><rect x="672.3" y="398.4" width="2.8" height="1.4" fill="#f0d010"/><rect x="722.8" y="409.7" width="1.6" height="1.7" fill="#e8c020"/><rect x="715.8" y="420.3" width="1.8" height="0.8" fill="#f06010"/><rect x="720.0" y="395.2" width="1.9" height="1.6" fill="#f06010"/><rect x="679.1" y="407.6" width="3.0" height="1.5" fill="#f02010"/><rect x="713.2" y="423.3" width="2.9" height="1.7" fill="#f06010"/><rect x="707.3" y="393.8" width="1.9" height="1.8" fill="#f0d010"/><rect x="686.6" y="423.1" width="2.9" height="1.6" fill="#e8c020"/><rect x="666.1" y="422.7" width="1.7" height="1.8" fill="#e8c020"/><rect x="665.9" y="431.7" width="2.1" height="1.2" fill="#f02010"/><rect x="713.1" y="434.6" width="1.1" height="1.1" fill="#e8c020"/><rect x="671.3" y="437.6" width="1.3" height="1.4" fill="#f0d010"/><rect x="701.2" y="392.3" width="1.3" height="1.4" fill="#e8c020"/><rect x="728.8" y="421.4" width="1.6" height="1.3" fill="#f06010"/><rect x="690.6" y="438.9" width="2.6" height="1.5" fill="#f02010"/><rect x="687.9" y="438.2" width="2.4" height="1.1" fill="#f0d010"/><rect x="673.0" y="418.8" width="2.6" height="1.1" fill="#f02010"/><rect x="671.5" y="415.8" width="1.3" height="1.5" fill="#f02010"/><rect x="673.6" y="405.6" width="2.2" height="1.8" fill="#f02010"/><rect x="714.8" y="408.0" width="1.5" height="1.7" fill="#f06010"/><rect x="694.3" y="421.0" width="1.8" height="1.5" fill="#e8c020"/><rect x="686.6" y="406.0" width="1.5" height="1.0" fill="#e8c020"/><rect x="723.8" y="412.5" width="2.3" height="1.6" fill="#e8c020"/><rect x="683.4" y="397.6" width="2.3" height="1.6" fill="#e8c020"/><rect x="690.0" y="393.8" width="1.7" height="1.7" fill="#e8c020"/><rect x="698.0" y="404.4" width="1.5" height="1.6" fill="#f02010"/><rect x="664.8" y="431.3" width="1.7" height="1.7" fill="#f0d010"/><rect x="680.1" y="402.2" width="2.8" height="0.9" fill="#f02010"/><rect x="703.0" y="431.4" width="2.9" height="1.0" fill="#f02010"/><rect x="674.0" y="426.1" width="2.5" height="1.2" fill="#f02010"/><rect x="725.9" y="427.1" width="1.8" height="1.3" fill="#f0d010"/><rect x="684.9" y="433.3" width="2.1" height="1.3" fill="#f06010"/><rect x="707.5" y="435.1" width="1.4" height="1.5" fill="#f06010"/><rect x="724.9" y="393.3" width="2.7" height="1.5" fill="#f02010"/><rect x="701.3" y="410.2" width="2.6" height="1.5" fill="#f0d010"/><rect x="720.0" y="396.6" width="2.3" height="1.6" fill="#f06010"/><rect x="696.0" y="434.9" width="2.5" height="1.6" fill="#f02010"/><rect x="706.1" y="433.9" width="2.3" height="1.7" fill="#f06010"/><rect x="688.1" y="434.8" width="2.5" height="1.4" fill="#f02010"/><rect x="696.6" y="420.4" width="1.6" height="1.2" fill="#f06010"/><rect x="700.7" y="434.4" width="1.7" height="1.5" fill="#f02010"/><rect x="666.9" y="431.9" width="1.4" height="1.3" fill="#f0d010"/><rect x="714.0" y="412.3" width="3.0" height="1.4" fill="#f02010"/><rect x="702.5" y="391.6" width="1.2" height="1.0" fill="#e8c020"/><rect x="704.8" y="407.0" width="2.1" height="1.0" fill="#f0d010"/><rect x="699.8" y="431.0" width="2.7" height="1.6" fill="#f0d010"/><rect x="698.5" y="391.5" width="1.1" height="1.3" fill="#f06010"/><rect x="690.8" y="393.2" width="2.4" height="1.4" fill="#f0d010"/><rect x="689.2" y="415.6" width="1.5" height="1.7" fill="#e8c020"/><rect x="729.7" y="430.2" width="2.3" height="1.1" fill="#f0d010"/><rect x="705.6" y="418.8" width="1.9" height="1.5" fill="#e8c020"/><rect x="710.2" y="412.7" width="2.2" height="0.9" fill="#f0d010"/><rect x="673.3" y="428.0" width="2.5" height="1.3" fill="#f02010"/><rect x="691.8" y="399.9" width="2.5" height="1.0" fill="#f06010"/><rect x="713.4" y="431.9" width="2.5" height="1.7" fill="#f0d010"/><rect x="724.6" y="426.1" width="1.1" height="1.0" fill="#f02010"/><rect x="662.9" y="433.2" width="2.1" height="1.4" fill="#f0d010"/><rect x="700.4" y="405.8" width="1.6" height="0.8" fill="#f0d010"/><rect x="673.9" y="407.8" width="2.6" height="1.3" fill="#f02010"/><rect x="668.9" y="395.3" width="1.7" height="1.7" fill="#f06010"/><rect x="695.0" y="394.1" width="2.6" height="1.3" fill="#f0d010"/><rect x="717.9" y="396.4" width="2.1" height="1.1" fill="#f02010"/><rect x="688.4" y="407.7" width="2.9" height="1.0" fill="#f02010"/><rect x="680.9" y="430.7" width="2.5" height="1.5" fill="#e8c020"/><rect x="672.9" y="434.8" width="1.3" height="0.8" fill="#e8c020"/><rect x="676.6" y="419.3" width="1.1" height="1.6" fill="#e8c020"/><rect x="728.2" y="394.3" width="1.4" height="1.4" fill="#f02010"/><rect x="724.1" y="432.9" width="2.2" height="1.7" fill="#f0d010"/><rect x="694.9" y="422.0" width="1.0" height="1.0" fill="#f06010"/><rect x="686.1" y="434.0" width="2.2" height="0.9" fill="#f02010"/><rect x="675.6" y="412.8" width="2.5" height="1.4" fill="#e8c020"/><rect x="710.9" y="433.1" width="1.8" height="1.5" fill="#f06010"/><rect x="710.5" y="402.0" width="2.4" height="1.3" fill="#e8c020"/><rect x="671.6" y="435.5" width="1.1" height="1.0" fill="#e8c020"/><rect x="729.1" y="401.4" width="2.1" height="1.5" fill="#e8c020"/><rect x="677.2" y="426.9" width="1.5" height="1.7" fill="#f02010"/><rect x="675.6" y="390.0" width="1.1" height="1.0" fill="#e8c020"/><rect x="725.3" y="401.0" width="2.9" height="1.4" fill="#f02010"/><rect x="724.5" y="403.1" width="1.9" height="1.3" fill="#f06010"/><rect x="727.0" y="428.0" width="1.4" height="1.6" fill="#f02010"/><rect x="673.1" y="415.6" width="2.0" height="1.8" fill="#f02010"/><rect x="688.0" y="433.9" width="2.7" height="1.4" fill="#f02010"/><rect x="717.9" y="415.1" width="2.4" height="1.5" fill="#f02010"/><rect x="703.8" y="412.9" width="2.1" height="1.0" fill="#f02010"/><rect x="674.7" y="415.4" width="1.4" height="1.5" fill="#e8c020"/><rect x="712.0" y="423.6" width="2.2" height="0.9" fill="#f02010"/><rect x="697.3" y="423.9" width="2.5" height="1.6" fill="#f02010"/><rect x="719.7" y="395.1" width="1.5" height="1.1" fill="#f0d010"/><rect x="682.1" y="414.7" width="2.5" height="0.8" fill="#f0d010"/><rect x="667.1" y="395.7" width="2.0" height="1.3" fill="#f06010"/><rect x="689.7" y="420.6" width="2.8" height="1.5" fill="#f06010"/><rect x="716.2" y="435.6" width="2.4" height="0.8" fill="#f02010"/><rect x="708.3" y="432.5" width="2.6" height="0.9" fill="#e8c020"/><rect x="704.1" y="404.7" width="2.4" height="1.1" fill="#f0d010"/><rect x="682.4" y="407.4" width="1.8" height="1.0" fill="#f0d010"/><rect x="673.1" y="437.3" width="2.5" height="1.6" fill="#e8c020"/><rect x="729.6" y="427.6" width="2.6" height="0.8" fill="#f0d010"/><rect x="698.6" y="407.0" width="2.8" height="1.1" fill="#f0d010"/><rect x="714.4" y="428.7" width="2.6" height="1.3" fill="#f0d010"/><rect x="669.1" y="431.3" width="1.9" height="1.1" fill="#f0d010"/><rect x="666.4" y="396.1" width="1.3" height="1.3" fill="#e8c020"/><rect x="706.2" y="416.9" width="2.9" height="1.3" fill="#e8c020"/><rect x="714.8" y="421.6" width="1.4" height="1.6" fill="#f06010"/><rect x="722.2" y="425.7" width="2.4" height="1.8" fill="#e8c020"/><rect x="674.0" y="411.9" width="2.4" height="1.5" fill="#f06010"/><rect x="713.2" y="402.4" width="2.9" height="0.9" fill="#f0d010"/><rect x="720.9" y="422.1" width="2.3" height="1.4" fill="#f06010"/><rect x="709.3" y="405.2" width="2.5" height="1.3" fill="#f02010"/><rect x="667.0" y="393.7" width="2.4" height="1.4" fill="#f02010"/><rect x="696.7" y="433.9" width="1.4" height="0.9" fill="#e8c020"/><rect x="682.6" y="410.4" width="1.9" height="1.5" fill="#f06010"/><rect x="668.4" y="436.6" width="1.6" height="1.0" fill="#f0d010"/><rect x="688.4" y="429.2" width="2.7" height="1.6" fill="#f02010"/><rect x="707.6" y="403.9" width="2.7" height="0.9" fill="#f02010"/><rect x="668.1" y="429.1" width="2.3" height="1.0" fill="#f0d010"/><rect x="671.8" y="394.9" width="1.8" height="1.5" fill="#f02010"/><rect x="700.7" y="401.2" width="1.6" height="1.1" fill="#f02010"/><rect x="725.3" y="436.8" width="1.7" height="1.5" fill="#f0d010"/><rect x="671.4" y="429.4" width="1.7" height="1.0" fill="#f0d010"/><rect x="707.1" y="433.6" width="1.6" height="1.2" fill="#f06010"/><rect x="714.0" y="401.2" width="2.8" height="1.6" fill="#f06010"/><rect x="720.0" y="402.0" width="1.5" height="0.8" fill="#e8c020"/><rect x="668.8" y="408.9" width="1.5" height="0.8" fill="#f0d010"/><rect x="691.8" y="395.8" width="2.1" height="1.3" fill="#e8c020"/><rect x="689.5" y="414.2" width="2.8" height="1.2" fill="#f06010"/><rect x="666.1" y="399.5" width="1.7" height="1.3" fill="#f0d010"/><rect x="725.7" y="417.7" width="2.0" height="1.3" fill="#f02010"/><rect x="676.7" y="420.6" width="1.2" height="1.7" fill="#e8c020"/><rect x="697.7" y="402.0" width="2.0" height="1.1" fill="#f06010"/><rect x="668.9" y="413.9" width="2.8" height="1.3" fill="#e8c020"/><rect x="711.7" y="393.7" width="2.3" height="0.9" fill="#e8c020"/><rect x="681.1" y="429.5" width="1.2" height="1.8" fill="#f02010"/><rect x="694.7" y="399.0" width="2.3" height="1.6" fill="#f02010"/><rect x="723.4" y="422.2" width="2.1" height="1.0" fill="#f02010"/><rect x="695.9" y="420.2" width="1.3" height="1.6" fill="#f0d010"/><rect x="726.3" y="427.0" width="2.3" height="1.5" fill="#f0d010"/><rect x="709.6" y="390.8" width="2.8" height="0.9" fill="#e8c020"/><rect x="676.8" y="391.8" width="3.0" height="1.6" fill="#e8c020"/><rect x="682.7" y="405.7" width="2.9" height="1.2" fill="#f06010"/><rect x="708.2" y="390.6" width="1.5" height="1.3" fill="#e8c020"/><rect x="696.8" y="437.4" width="2.3" height="1.0" fill="#e8c020"/><rect x="723.6" y="399.6" width="1.4" height="1.8" fill="#e8c020"/><rect x="693.0" y="401.3" width="1.1" height="1.0" fill="#f0d010"/><rect x="690.1" y="425.4" width="2.5" height="1.0" fill="#f0d010"/><rect x="718.9" y="397.7" width="2.2" height="1.3" fill="#f0d010"/><rect x="699.3" y="409.3" width="1.5" height="0.9" fill="#f0d010"/><rect x="727.3" y="397.5" width="3.0" height="0.9" fill="#f06010"/><rect x="683.8" y="427.7" width="1.5" height="1.0" fill="#f06010"/><rect x="701.8" y="412.6" width="1.5" height="1.4" fill="#e8c020"/><rect x="677.2" y="397.5" width="2.9" height="1.5" fill="#f0d010"/><rect x="668.4" y="411.8" width="2.9" height="1.7" fill="#f02010"/><rect x="666.8" y="427.7" width="2.7" height="1.2" fill="#f06010"/><rect x="698.0" y="432.4" width="1.9" height="1.3" fill="#f02010"/><rect x="698.1" y="424.0" width="2.8" height="1.8" fill="#f0d010"/><rect x="675.1" y="393.8" width="2.1" height="1.0" fill="#f0d010"/><rect x="709.1" y="402.8" width="1.8" height="1.8" fill="#f06010"/></g><g clip-path="url(#cl)"><rect x="745.4" y="442.9" width="2.5" height="1.4" fill="#20b0e0"/><rect x="758.3" y="436.9" width="1.9" height="1.1" fill="#f02010"/><rect x="775.6" y="448.2" width="1.9" height="1.1" fill="#f02010"/><rect x="788.3" y="449.1" width="2.9" height="1.0" fill="#f02010"/><rect x="754.5" y="448.5" width="1.5" height="1.5" fill="#20b0e0"/><rect x="751.6" y="436.5" width="1.3" height="1.0" fill="#f0c010"/><rect x="742.9" y="420.6" width="2.0" height="1.7" fill="#f02010"/><rect x="767.0" y="435.9" width="2.2" height="1.7" fill="#f0c010"/><rect x="764.6" y="424.2" width="2.5" height="1.1" fill="#20b0e0"/><rect x="778.7" y="437.7" width="2.4" height="1.0" fill="#20b0e0"/><rect x="752.2" y="448.5" width="2.7" height="1.4" fill="#f0c010"/><rect x="768.1" y="438.2" width="1.7" height="1.7" fill="#f02010"/><rect x="768.9" y="416.5" width="2.2" height="1.6" fill="#f02010"/><rect x="782.5" y="433.6" width="2.8" height="1.4" fill="#f02010"/><rect x="754.7" y="432.4" width="1.1" height="0.8" fill="#f02010"/><rect x="740.4" y="437.8" width="1.3" height="1.0" fill="#f02010"/><rect x="784.0" y="441.4" width="1.0" height="0.9" fill="#f02010"/><rect x="786.1" y="448.8" width="1.9" height="0.9" fill="#f02010"/><rect x="750.9" y="421.7" width="2.0" height="1.1" fill="#20b0e0"/><rect x="733.3" y="413.4" width="1.5" height="0.9" fill="#f02010"/><rect x="733.1" y="448.9" width="2.6" height="1.5" fill="#f02010"/><rect x="750.5" y="429.7" width="2.2" height="1.8" fill="#f02010"/><rect x="778.3" y="440.1" width="1.8" height="1.1" fill="#20b0e0"/><rect x="731.0" y="422.5" width="2.6" height="0.9" fill="#f02010"/><rect x="765.2" y="417.7" width="1.9" height="1.3" fill="#20b0e0"/><rect x="778.9" y="434.9" width="1.9" height="1.2" fill="#20b0e0"/><rect x="730.8" y="447.3" width="1.2" height="1.4" fill="#f02010"/><rect x="744.5" y="420.3" width="2.0" height="1.1" fill="#f0c010"/><rect x="733.4" y="419.2" width="1.4" height="1.1" fill="#f02010"/><rect x="768.4" y="437.6" width="1.4" height="1.0" fill="#20b0e0"/><rect x="789.2" y="449.8" width="1.3" height="0.9" fill="#f0c010"/><rect x="757.8" y="423.6" width="2.4" height="1.8" fill="#20b0e0"/><rect x="777.7" y="422.4" width="2.0" height="1.1" fill="#f0c010"/><rect x="776.5" y="422.6" width="1.1" height="1.3" fill="#f0c010"/><rect x="739.1" y="447.3" width="1.9" height="1.0" fill="#f02010"/><rect x="737.2" y="430.3" width="2.7" height="1.5" fill="#20b0e0"/><rect x="758.6" y="422.4" width="1.2" height="0.9" fill="#f02010"/><rect x="753.2" y="429.3" width="2.6" height="1.3" fill="#f0c010"/><rect x="757.0" y="444.1" width="1.8" height="1.5" fill="#20b0e0"/><rect x="762.1" y="441.2" width="2.9" height="1.4" fill="#20b0e0"/></g><g clip-path="url(#cl)"><rect x="488.4" y="289.1" width="2.8" height="0.9" fill="#20a0e0"/><rect x="548.7" y="298.9" width="1.3" height="1.3" fill="#20a0e0"/><rect x="529.5" y="286.0" width="2.7" height="1.5" fill="#f0d010"/><rect x="507.3" y="290.4" width="1.8" height="0.9" fill="#f0d010"/><rect x="557.1" y="281.0" width="2.8" height="1.5" fill="#f02010"/><rect x="522.4" y="294.0" width="1.3" height="1.3" fill="#f02010"/><rect x="546.6" y="283.4" width="1.8" height="1.6" fill="#f0d010"/><rect x="536.6" y="287.2" width="1.9" height="1.4" fill="#f0d010"/><rect x="487.3" y="298.9" width="2.8" height="1.3" fill="#20a0e0"/><rect x="556.5" y="292.1" width="2.5" height="1.2" fill="#f02010"/><rect x="496.1" y="295.7" width="1.4" height="1.8" fill="#20a0e0"/><rect x="488.6" y="296.3" width="2.6" height="0.8" fill="#f02010"/><rect x="521.0" y="296.3" width="1.3" height="1.7" fill="#20a0e0"/><rect x="505.7" y="283.5" width="2.7" height="1.5" fill="#20a0e0"/><rect x="532.8" y="281.1" width="2.7" height="1.4" fill="#f0d010"/><rect x="480.8" y="295.3" width="1.1" height="0.8" fill="#20a0e0"/><rect x="559.8" y="284.6" width="2.6" height="1.1" fill="#f02010"/><rect x="509.3" y="287.5" width="1.8" height="1.1" fill="#f02010"/><rect x="555.4" y="280.3" width="1.8" height="1.4" fill="#20a0e0"/><rect x="551.0" y="295.1" width="2.6" height="1.4" fill="#f0d010"/><rect x="484.2" y="297.8" width="2.5" height="1.6" fill="#f0d010"/><rect x="500.3" y="293.1" width="1.9" height="1.1" fill="#f02010"/><rect x="499.2" y="294.3" width="2.6" height="1.1" fill="#20a0e0"/><rect x="547.5" y="297.0" width="2.7" height="1.8" fill="#f0d010"/><rect x="549.9" y="290.9" width="2.6" height="1.6" fill="#f0d010"/><rect x="558.3" y="298.9" width="2.6" height="1.6" fill="#f02010"/><rect x="549.6" y="284.3" width="1.7" height="0.9" fill="#f02010"/><rect x="489.5" y="297.7" width="1.5" height="0.9" fill="#f0d010"/><rect x="485.4" y="294.8" width="2.7" height="1.4" fill="#f0d010"/><rect x="504.9" y="289.5" width="1.6" height="1.4" fill="#f02010"/></g><defs><clipPath id="cb"><polygon points="740.0,359.0 743.8,358.0 749.5,348.6 757.1,347.6 762.8,353.3 770.4,351.4 787.6,357.1 795.2,358.0 804.7,351.4 812.3,354.3 819.9,355.2 829.4,354.3 833.2,359.0 831.3,364.7 838.9,358.0 846.5,359.0 835.1,374.2 846.5,378.0 873.2,387.6 878.9,395.2 875.1,402.8 877.0,412.3 863.7,411.3 856.1,406.6 858.0,399.0 831.3,395.2 838.9,402.8 841.8,419.9 835.1,433.2 819.9,442.7 797.1,448.4 800.0,427.0 804.7,421.8 800.9,410.4 781.9,399.0 759.0,378.0"/></clipPath></defs><g clip-path="url(#cb)"><rect x="834.5" y="394.7" width="2.3" height="1.3" fill="#40d0f0"/><rect x="818.9" y="383.5" width="2.4" height="1.2" fill="#30c0f0"/><rect x="793.4" y="389.6" width="2.3" height="1.3" fill="#1a50e0"/><rect x="765.8" y="401.6" width="2.4" height="1.3" fill="#30c0f0"/><rect x="810.5" y="404.0" width="1.7" height="1.2" fill="#30c0f0"/><rect x="816.7" y="390.8" width="1.1" height="1.2" fill="#40d0f0"/><rect x="755.2" y="425.4" width="1.9" height="0.8" fill="#40d0f0"/><rect x="833.3" y="444.3" width="1.7" height="1.1" fill="#30c0f0"/><rect x="838.0" y="369.2" width="1.5" height="1.0" fill="#1a50e0"/><rect x="794.1" y="421.5" width="1.0" height="1.4" fill="#2aa0e0"/><rect x="845.0" y="403.3" width="2.2" height="0.9" fill="#30c0f0"/><rect x="831.8" y="384.4" width="2.4" height="0.9" fill="#30c0f0"/><rect x="835.1" y="430.9" width="2.1" height="1.3" fill="#1a50e0"/><rect x="796.1" y="438.6" width="1.8" height="0.9" fill="#2aa0e0"/><rect x="825.3" y="390.3" width="1.9" height="1.0" fill="#40d0f0"/><rect x="768.4" y="370.6" width="1.9" height="0.8" fill="#30c0f0"/><rect x="825.3" y="435.8" width="1.2" height="1.3" fill="#40d0f0"/><rect x="768.2" y="428.1" width="1.3" height="0.9" fill="#1a50e0"/><rect x="842.6" y="418.5" width="1.2" height="1.1" fill="#1a50e0"/><rect x="772.3" y="429.6" width="2.4" height="0.8" fill="#30c0f0"/><rect x="789.3" y="358.2" width="1.1" height="1.4" fill="#2aa0e0"/><rect x="759.2" y="393.7" width="2.0" height="1.5" fill="#40d0f0"/><rect x="785.8" y="418.6" width="2.5" height="1.0" fill="#2aa0e0"/><rect x="780.7" y="391.4" width="1.5" height="1.2" fill="#2aa0e0"/><rect x="753.5" y="368.3" width="1.5" height="1.2" fill="#1a50e0"/><rect x="786.8" y="429.8" width="2.2" height="1.2" fill="#2aa0e0"/><rect x="839.5" y="394.8" width="1.3" height="1.2" fill="#1a50e0"/><rect x="795.0" y="372.1" width="1.5" height="1.1" fill="#30c0f0"/><rect x="785.3" y="383.6" width="1.6" height="1.0" fill="#2aa0e0"/><rect x="809.5" y="394.2" width="2.3" height="1.2" fill="#30c0f0"/><rect x="829.9" y="419.2" width="1.5" height="1.2" fill="#2aa0e0"/><rect x="840.2" y="408.9" width="1.2" height="1.3" fill="#30c0f0"/><rect x="839.9" y="363.8" width="1.5" height="1.4" fill="#40d0f0"/><rect x="804.0" y="414.3" width="1.5" height="1.5" fill="#2aa0e0"/><rect x="810.1" y="377.1" width="1.2" height="1.4" fill="#30c0f0"/><rect x="806.6" y="426.6" width="1.7" height="1.0" fill="#30c0f0"/><rect x="780.0" y="400.5" width="2.4" height="1.2" fill="#2aa0e0"/><rect x="756.6" y="374.2" width="1.9" height="1.2" fill="#40d0f0"/><rect x="746.7" y="426.0" width="1.1" height="1.4" fill="#30c0f0"/><rect x="772.6" y="381.6" width="2.2" height="0.9" fill="#2aa0e0"/><rect x="747.2" y="368.3" width="1.1" height="1.4" fill="#1a50e0"/><rect x="776.1" y="370.8" width="1.7" height="0.9" fill="#30c0f0"/><rect x="839.7" y="402.3" width="2.4" height="0.9" fill="#1a50e0"/><rect x="788.4" y="368.3" width="2.1" height="1.4" fill="#2aa0e0"/><rect x="787.2" y="409.8" width="2.1" height="0.9" fill="#1a50e0"/><rect x="842.7" y="353.6" width="1.1" height="0.9" fill="#30c0f0"/><rect x="777.8" y="416.0" width="1.3" height="1.1" fill="#30c0f0"/><rect x="763.1" y="407.9" width="2.0" height="1.5" fill="#40d0f0"/><rect x="757.1" y="431.4" width="1.5" height="1.1" fill="#2aa0e0"/><rect x="768.3" y="442.6" width="2.5" height="1.3" fill="#1a50e0"/><rect x="761.6" y="434.8" width="2.2" height="1.2" fill="#30c0f0"/><rect x="789.6" y="409.1" width="2.4" height="1.3" fill="#30c0f0"/><rect x="790.2" y="433.7" width="1.9" height="1.0" fill="#2aa0e0"/><rect x="796.1" y="364.0" width="1.1" height="1.4" fill="#1a50e0"/><rect x="794.7" y="415.4" width="1.2" height="1.3" fill="#30c0f0"/><rect x="829.4" y="384.4" width="2.1" height="0.9" fill="#2aa0e0"/><rect x="817.8" y="388.8" width="2.4" height="1.5" fill="#1a50e0"/><rect x="776.6" y="385.8" width="1.4" height="1.4" fill="#30c0f0"/><rect x="844.1" y="415.4" width="1.5" height="1.3" fill="#40d0f0"/><rect x="825.1" y="382.0" width="1.9" height="1.2" fill="#40d0f0"/><rect x="830.8" y="443.9" width="1.7" height="1.4" fill="#30c0f0"/><rect x="759.9" y="422.3" width="1.9" height="1.4" fill="#2aa0e0"/><rect x="815.5" y="350.4" width="1.9" height="0.9" fill="#2aa0e0"/><rect x="772.7" y="360.8" width="2.3" height="1.1" fill="#40d0f0"/><rect x="753.1" y="392.6" width="1.6" height="0.8" fill="#40d0f0"/><rect x="766.5" y="412.2" width="1.4" height="1.1" fill="#2aa0e0"/><rect x="821.9" y="415.8" width="2.0" height="1.0" fill="#40d0f0"/><rect x="785.1" y="440.3" width="1.7" height="0.9" fill="#1a50e0"/><rect x="826.1" y="378.0" width="1.9" height="1.4" fill="#1a50e0"/><rect x="780.2" y="430.9" width="2.3" height="1.0" fill="#30c0f0"/><rect x="789.5" y="352.4" width="1.1" height="1.4" fill="#30c0f0"/><rect x="766.5" y="407.1" width="2.3" height="0.9" fill="#40d0f0"/><rect x="779.3" y="438.6" width="1.3" height="0.9" fill="#30c0f0"/><rect x="809.5" y="429.6" width="1.4" height="0.9" fill="#1a50e0"/><rect x="792.4" y="424.7" width="1.4" height="1.4" fill="#1a50e0"/><rect x="761.1" y="444.7" width="1.5" height="1.5" fill="#30c0f0"/><rect x="808.1" y="400.6" width="2.3" height="1.1" fill="#30c0f0"/><rect x="786.6" y="394.6" width="1.5" height="0.8" fill="#2aa0e0"/><rect x="768.2" y="394.0" width="2.2" height="1.5" fill="#40d0f0"/><rect x="761.0" y="415.0" width="1.8" height="1.1" fill="#1a50e0"/><rect x="836.5" y="435.4" width="1.7" height="1.5" fill="#40d0f0"/><rect x="754.9" y="397.3" width="2.5" height="1.0" fill="#40d0f0"/><rect x="833.6" y="384.9" width="2.4" height="1.5" fill="#1a50e0"/><rect x="794.9" y="376.8" width="1.5" height="1.2" fill="#1a50e0"/><rect x="776.4" y="352.7" width="1.3" height="0.9" fill="#40d0f0"/><rect x="790.5" y="385.1" width="2.2" height="1.5" fill="#40d0f0"/><rect x="793.1" y="438.3" width="1.3" height="1.5" fill="#1a50e0"/><rect x="781.0" y="407.5" width="1.5" height="1.5" fill="#1a50e0"/><rect x="815.9" y="405.7" width="1.6" height="0.9" fill="#30c0f0"/><rect x="765.6" y="398.2" width="1.2" height="1.4" fill="#30c0f0"/></g><ellipse cx="435" cy="330" rx="2.5" ry="1.5" fill="#0a10f0" /><rect x="442.6" y="285.9" width="2.5" height="1.2" fill="#f0a010"/><rect x="441.1" y="282.0" width="1.4" height="1.2" fill="#e8d020"/><rect x="434.2" y="276.2" width="2.3" height="1.2" fill="#f0a010"/><rect x="433.1" y="278.2" width="2.4" height="1.2" fill="#f0a010"/><rect x="440.5" y="274.7" width="1.9" height="1.2" fill="#f0c010"/><rect x="445.7" y="275.4" width="1.3" height="1.2" fill="#f0c010"/><rect x="436.7" y="285.2" width="1.8" height="1.2" fill="#e8d020"/><rect x="442.4" y="277.8" width="2.5" height="1.2" fill="#f0c010"/><rect x="433.9" y="284.5" width="2.5" height="1.2" fill="#f0c010"/><rect x="444.6" y="285.4" width="1.8" height="1.2" fill="#e8d020"/><rect x="438.1" y="281.9" width="2.4" height="1.2" fill="#f0c010"/><rect x="446.9" y="281.3" width="2.0" height="1.2" fill="#f0c010"/><rect x="438.2" y="277.5" width="1.2" height="1.2" fill="#e8d020"/><rect x="436.6" y="274.1" width="1.2" height="1.2" fill="#f0c010"/><rect x="434.5" y="284.0" width="1.2" height="1.2" fill="#e8d020"/><rect x="440.0" y="280.6" width="1.8" height="1.2" fill="#e8d020"/><rect x="439.5" y="283.3" width="2.1" height="1.2" fill="#f0c010"/><rect x="438.9" y="275.6" width="2.1" height="1.2" fill="#f0c010"/><rect x="445.5" y="277.4" width="2.2" height="1.2" fill="#e8d020"/><rect x="441.2" y="278.4" width="1.7" height="1.2" fill="#f0c010"/><rect x="436.1" y="282.1" width="2.3" height="1.2" fill="#e8d020"/><rect x="446.8" y="275.6" width="1.1" height="1.2" fill="#f0c010"/><rect x="435.8" y="275.9" width="2.2" height="1.2" fill="#f0c010"/><rect x="437.7" y="273.2" width="2.1" height="1.2" fill="#f0c010"/><rect x="440.2" y="286.0" width="1.4" height="1.2" fill="#f0c010"/><rect x="484.3" y="260.6" width="2.4" height="1.2" fill="#f0c010"/><rect x="497.7" y="260.6" width="1.2" height="1.2" fill="#f0c010"/><rect x="492.4" y="271.8" width="2.1" height="1.2" fill="#20a0e0"/><rect x="483.9" y="264.5" width="1.1" height="1.2" fill="#20a0e0"/><rect x="481.0" y="253.0" width="1.8" height="1.2" fill="#20a0e0"/><rect x="497.9" y="262.2" width="1.3" height="1.2" fill="#20a0e0"/><rect x="485.2" y="257.2" width="1.7" height="1.2" fill="#f0c010"/><rect x="502.6" y="252.1" width="1.3" height="1.2" fill="#f02010"/><rect x="482.5" y="260.2" width="1.8" height="1.2" fill="#f02010"/><rect x="504.8" y="258.7" width="1.4" height="1.2" fill="#20a0e0"/><rect x="488.3" y="252.8" width="1.6" height="1.2" fill="#f02010"/><rect x="481.7" y="253.7" width="1.1" height="1.2" fill="#f0c010"/><rect x="504.8" y="270.4" width="1.1" height="1.2" fill="#20a0e0"/><rect x="497.0" y="257.1" width="1.1" height="1.2" fill="#f02010"/><rect x="494.1" y="261.0" width="1.1" height="1.2" fill="#20a0e0"/><rect x="500.4" y="261.5" width="1.2" height="1.2" fill="#f02010"/><rect x="490.9" y="265.2" width="1.0" height="1.2" fill="#f0c010"/><rect x="494.5" y="271.5" width="1.1" height="1.2" fill="#20a0e0"/><rect x="499.8" y="253.5" width="2.2" height="1.2" fill="#f0c010"/><rect x="481.3" y="263.7" width="2.1" height="1.2" fill="#f02010"/><rect x="484.3" y="268.6" width="1.6" height="1.2" fill="#f02010"/><rect x="484.0" y="260.8" width="1.3" height="1.2" fill="#f0c010"/><rect x="482.3" y="266.5" width="2.3" height="1.2" fill="#20a0e0"/><rect x="502.7" y="265.2" width="1.4" height="1.2" fill="#f0c010"/><rect x="482.9" y="259.6" width="2.0" height="1.2" fill="#f0c010"/><rect x="483.8" y="269.5" width="1.1" height="1.2" fill="#f02010"/><rect x="504.9" y="258.4" width="2.4" height="1.2" fill="#20a0e0"/><rect x="501.6" y="263.8" width="2.5" height="1.2" fill="#20a0e0"/><rect x="499.6" y="268.8" width="1.8" height="1.2" fill="#f02010"/><rect x="493.0" y="261.7" width="1.5" height="1.2" fill="#f02010"/><ellipse cx="821" cy="248" rx="5" ry="3.5" fill="#b5b4b9" /><polygon points="799.5,235.5 801.0,234.5 813.0,237.5 812.0,240.0 800.0,238.0" fill="#0a10f0" /><polygon points="802.0,246.5 814.0,239.5 817.0,241.5 805.0,248.0" fill="#0a10f0" /><polygon points="806.0,238.5 814.0,238.5 815.0,243.5 808.0,243.0" fill="#f01818" /><polygon points="822.0,241.5 832.0,242.0 833.0,244.5 823.0,244.0" fill="#f03010" /><ellipse cx="838.6" cy="248.9" rx="5.5" ry="3" fill="#f01818" /><ellipse cx="838.6" cy="249.6" rx="4.5" ry="2.5" fill="#b5b4b9" /></svg>
<svg class="a" style="left:0px;top:0px;pointer-events:none" width="1024" height="631" viewBox="0 0 1024 631"><path d="M1000.5 229 L999 250 L998 280 L996 300 L993 308 L988 316 L982 321 L975 325 L968 329 L964 333 L963 337 L965 341 L967 344 L968 348 L971 352 L976 357 L982 362 L988 367 L993 372 L995.5 378 L996.5 390 L997 405 L996.5 420 L997 440 L998.5 460 L999.5 480 L1000.5 492Z" fill="#8e8e90" stroke="#6a6a6c" stroke-width="0.7"/></svg>
<div class="a" style="left:1000.8px;top:178.7px;width:19.2px;height:16px;background:#e8300c"></div>
<div class="a" style="left:1000.8px;top:194.66px;width:19.2px;height:16px;background:#e8400c"></div>
<div class="a" style="left:1000.8px;top:210.62px;width:19.2px;height:16px;background:#ea500c"></div>
<div class="a" style="left:1000.8px;top:226.57999999999998px;width:19.2px;height:16px;background:#ec600c"></div>
<div class="a" style="left:1000.8px;top:242.54px;width:19.2px;height:16px;background:#ee720c"></div>
<div class="a" style="left:1000.8px;top:258.5px;width:19.2px;height:16px;background:#f0880c"></div>
<div class="a" style="left:1000.8px;top:274.46px;width:19.2px;height:16px;background:#f0a00a"></div>
<div class="a" style="left:1000.8px;top:290.41999999999996px;width:19.2px;height:16px;background:#f0b808"></div>
<div class="a" style="left:1000.8px;top:369.2px;width:19.2px;height:16.1px;background:#10b8e0"></div>
<div class="a" style="left:1000.8px;top:385.2px;width:19.2px;height:16.1px;background:#10a0dc"></div>
<div class="a" style="left:1000.8px;top:401.2px;width:19.2px;height:16.1px;background:#1090d8"></div>
<div class="a" style="left:1000.8px;top:417.2px;width:19.2px;height:16.1px;background:#1080d4"></div>
<div class="a" style="left:1000.8px;top:433.2px;width:19.2px;height:16.1px;background:#1070cc"></div>
<div class="a" style="left:1000.8px;top:449.2px;width:19.2px;height:16.1px;background:#1060c4"></div>
<div class="a" style="left:1000.8px;top:465.2px;width:19.2px;height:16.1px;background:#1050bc"></div>
<div class="a" style="left:1000.8px;top:481.2px;width:19.2px;height:16.1px;background:#1040b4"></div>
<div class="a" style="left:1000.8px;top:305.8px;width:19.2px;height:31.7px;background:#f0e000"></div>
<div class="a" style="left:1000.8px;top:337.5px;width:19.2px;height:31.7px;background:#20e0e0"></div>
<div class="a" style="left:1003.1px;top:305.8px;width:15px;height:63.4px;background:#0cd40c;border-top:1px dotted #303030;border-bottom:1px dotted #303030;box-sizing:border-box"></div>
<div class="a" style="left:1001.4px;top:165.9px;width:19.2px;height:9.7px;background:#ff0808;border:0.8px solid #303030;box-sizing:border-box"></div>
<div class="a" style="left:1000.2px;top:500.2px;width:20.5px;height:9.9px;background:#0a0aff;border:0.8px solid #303030;box-sizing:border-box"></div>
<svg class="a" style="left:994px;top:174px;" width="7" height="9" viewBox="0 0 7 9"><path d="M0.3 0.7 L6.8 4.5 L0.3 8.3Z" fill="#111"/></svg>
<svg class="a" style="left:994px;top:333px;" width="7" height="9" viewBox="0 0 7 9"><path d="M0.3 0.7 L6.8 4.5 L0.3 8.3Z" fill="#111"/></svg>
<svg class="a" style="left:994px;top:492.7px;" width="7" height="9" viewBox="0 0 7 9"><path d="M0.3 0.7 L6.8 4.5 L0.3 8.3Z" fill="#111"/></svg>
<svg class="a" style="left:994px;top:301.3px;" width="7" height="9" viewBox="0 0 7 9"><path d="M0.5 0.7 L6.8 4.5 L0.5 8.3Z" fill="#30c030" stroke="#1a6a1a" stroke-width="0.6"/></svg>
<svg class="a" style="left:994px;top:364.7px;" width="7" height="9" viewBox="0 0 7 9"><path d="M0.5 0.7 L6.8 4.5 L0.5 8.3Z" fill="#30c030" stroke="#1a6a1a" stroke-width="0.6"/></svg>
<div class="t" style="left:932.9px;width:60px;text-align:right;top:175.97px;font-size:6.9px;color:#222;letter-spacing:-0.35px">1,0000</div>
<div class="t" style="left:932.9px;width:60px;text-align:right;top:207.27px;font-size:6.9px;color:#707070;letter-spacing:-0.35px">0,8</div>
<div class="t" style="left:932.9px;width:60px;text-align:right;top:239.17px;font-size:6.9px;color:#707070;letter-spacing:-0.35px">0,6</div>
<div class="t" style="left:932.9px;width:60px;text-align:right;top:271.07px;font-size:6.9px;color:#707070;letter-spacing:-0.35px">0,4</div>
<div class="t" style="left:933.1px;width:60px;text-align:right;top:303.27px;font-size:6.9px;color:#40c040;letter-spacing:-0.35px">0,2</div>
<div class="t" style="left:932px;width:60px;text-align:right;top:334.47px;font-size:6.9px;color:#222;letter-spacing:-0.35px">0,0000</div>
<div class="t" style="left:933px;width:60px;text-align:right;top:366.27px;font-size:6.9px;color:#40c040;letter-spacing:-0.35px">-0,2</div>
<div class="t" style="left:932.9px;width:60px;text-align:right;top:398.07px;font-size:6.9px;color:#707070;letter-spacing:-0.35px">-0,4</div>
<div class="t" style="left:932.9px;width:60px;text-align:right;top:430.07px;font-size:6.9px;color:#707070;letter-spacing:-0.35px">-0,6</div>
<div class="t" style="left:932.9px;width:60px;text-align:right;top:461.97px;font-size:6.9px;color:#707070;letter-spacing:-0.35px">-0,8</div>
<div class="t" style="left:932.9px;width:60px;text-align:right;top:494.07px;font-size:6.9px;color:#222;letter-spacing:-0.35px">-1,0000</div>
<div class="a" style="left:435px;top:92px;width:358px;height:18.5px;background:#d6d7da;border-left:1px solid #a0a0a0;border-bottom:1px solid #a0a0a0;border-right:1px solid #a0a0a0;box-sizing:border-box"></div>
<svg class="a" style="left:440px;top:96px;" width="12" height="12" viewBox="0 0 12 12"><path d="M6 0.5 L11 3 L11.5 8.5 L7 11.5 L1.5 10 L0.5 4.5Z" fill="#dfe8ee" stroke="#6a7078" stroke-width="0.8"/><path d="M3 4 L7 3 L9 7 L5 9Z" fill="#f4f8fa"/></svg>
<svg class="a" style="left:455.7px;top:104px;" width="4" height="3" viewBox="0 0 4 3"><path d="M0 0 H4 L2 2.5Z" fill="#666"/></svg>
<svg class="a" style="left:464px;top:96px;" width="12" height="12" viewBox="0 0 12 12"><path d="M0.5 2.5 L2.5 0.5 L11.5 0.5 L11.5 9.5 L9.5 11.5 L0.5 11.5Z" fill="#d8d8d8" stroke="#555" stroke-width="0.8"/><path d="M9.5 2.5 L11.5 0.5 L11.5 9.5 L9.5 11.5Z" fill="#8a9098"/><path d="M0.5 2.5 H9.5 V11.5" fill="none" stroke="#555" stroke-width="0.7"/></svg>
<svg class="a" style="left:479.5px;top:104px;" width="4" height="3" viewBox="0 0 4 3"><path d="M0 0 H4 L2 2.5Z" fill="#666"/></svg>
<div class="a" style="left:487.6px;top:94px;width:1px;height:14px;background:#c4c5c8"></div>
<svg class="a" style="left:493px;top:96px;" width="12" height="12" viewBox="0 0 12 12"><path d="M0.5 3 L3 0.5 L11.5 0.5 L11.5 9 L9 11.5 L0.5 11.5Z" fill="#f4f4f4" stroke="#555" stroke-width="0.8"/><path d="M0.5 3 H9 V11.5 H0.5Z" fill="#b8c878" stroke="#555" stroke-width="0.7"/><path d="M3 0.5 V9 H11.5 M3 9 L0.5 11.5" fill="none" stroke="#777" stroke-width="0.6"/></svg>
<svg class="a" style="left:508.5px;top:104px;" width="4" height="3" viewBox="0 0 4 3"><path d="M0 0 H4 L2 2.5Z" fill="#666"/></svg>
<svg class="a" style="left:516.5px;top:96px;" width="12" height="12" viewBox="0 0 12 12"><rect x="0.5" y="6.5" width="11" height="5" fill="#f8f8f8" stroke="#555" stroke-width="0.8"/><rect x="6.5" y="0.5" width="5" height="6" fill="#f8f8f8" stroke="#555" stroke-width="0.8"/><path d="M5 2 Q2 2 2 5" fill="none" stroke="#4a9a30" stroke-width="1"/><path d="M0.5 4 L3.5 4 L2 6.5Z" fill="#4a9a30"/></svg>
<svg class="a" style="left:533px;top:96px;" width="12" height="12" viewBox="0 0 12 12"><rect x="0.5" y="6.5" width="11" height="5" fill="#f8f8f8" stroke="#555" stroke-width="0.8"/><rect x="0.5" y="0.5" width="5" height="6" fill="#f8f8f8" stroke="#555" stroke-width="0.8"/><path d="M7 2 Q10 2 10 5" fill="none" stroke="#4a9a30" stroke-width="1"/><path d="M8.5 4 L11.5 4 L10 6.5Z" fill="#4a9a30"/></svg>
<svg class="a" style="left:549px;top:96px;" width="12" height="12" viewBox="0 0 12 12"><rect x="0.5" y="0.5" width="4.5" height="11" fill="#f8f8f8" stroke="#555" stroke-width="0.8"/><rect x="7" y="0.5" width="4.5" height="11" fill="#f8f8f8" stroke="#555" stroke-width="0.8"/><path d="M6 0 V12" stroke="#888" stroke-width="0.6" stroke-dasharray="1 1"/></svg>
<svg class="a" style="left:566px;top:95px;" width="13" height="13" viewBox="0 0 13 13"><path d="M0.5 6 L6.5 4 L12.5 6 L6.5 8Z" fill="#8ab050" stroke="#555" stroke-width="0.6"/><path d="M0.5 6 V12.5 H12.5 V6" fill="#f8f8f8" stroke="#555" stroke-width="0.8"/><path d="M6.5 6 V0.5" stroke="#333" stroke-width="1"/><path d="M4.5 2.5 L6.5 0 L8.5 2.5Z" fill="#333"/></svg>
<div class="a" style="left:583.4px;top:94px;width:1px;height:14px;background:#c4c5c8"></div>
<svg class="a" style="left:586px;top:94px;" width="16" height="15" viewBox="0 0 16 15"><rect x="0" y="0" width="16" height="15" fill="#8cb43c"/><g fill="#e8f0d0" stroke="#4a6a20" stroke-width="0.5"><rect x="1.5" y="2" width="5.5" height="3"/><rect x="9" y="2" width="5.5" height="3"/><rect x="1.5" y="6" width="5.5" height="3"/><rect x="9" y="6" width="5.5" height="3"/><rect x="1.5" y="10" width="5.5" height="3"/><rect x="9" y="10" width="5.5" height="3"/></g></svg>
<svg class="a" style="left:607.5px;top:95px;" width="12" height="13" viewBox="0 0 12 13"><rect x="0.5" y="0.5" width="11" height="12" fill="#f4f4f4" stroke="#555" stroke-width="0.7"/><path d="M0.5 4 H11.5 M0.5 9 H11.5" stroke="#555" stroke-width="0.7"/><path d="M1 6.5 H11" stroke="#e02020" stroke-width="1.3"/><rect x="1.5" y="1.5" width="3" height="2" fill="#6ab040"/><rect x="1.5" y="10" width="3" height="2" fill="#6ab040"/></svg>
<div class="a" style="left:621.9px;top:94px;width:1px;height:14px;background:#c4c5c8"></div>
<svg class="a" style="left:626px;top:96px;" width="12" height="12" viewBox="0 0 12 12"><path d="M1 1 L11 11" stroke="#a6a7aa" stroke-width="1"/><circle cx="11" cy="11" r="1" fill="#a6a7aa"/></svg>
<svg class="a" style="left:643px;top:96px;" width="12" height="12" viewBox="0 0 12 12"><rect x="1" y="1" width="10.5" height="10.5" fill="none" stroke="#a6a7aa" stroke-width="0.9" stroke-dasharray="1.2 1"/></svg>
<svg class="a" style="left:660px;top:96px;" width="12" height="12" viewBox="0 0 12 12"><circle cx="6" cy="6" r="5.3" fill="none" stroke="#a6a7aa" stroke-width="0.9" stroke-dasharray="1.2 1"/><circle cx="6" cy="6" r="0.8" fill="#a6a7aa"/></svg>
<svg class="a" style="left:676.5px;top:96px;" width="12" height="12" viewBox="0 0 12 12"><circle cx="6" cy="6" r="5.3" fill="none" stroke="#a6a7aa" stroke-width="0.9" stroke-dasharray="1.2 1"/><path d="M6 4 V8 M4 6 H8" stroke="#a6a7aa" stroke-width="0.8"/></svg>
<svg class="a" style="left:693px;top:96px;" width="12" height="12" viewBox="0 0 12 12"><path d="M1 9 Q0 6 3 5 Q5 1 9 1.5 Q12 3 10 7 Q8 11 3 11Z" fill="none" stroke="#a6a7aa" stroke-width="0.9" stroke-dasharray="1.2 1"/></svg>
<svg class="a" style="left:710px;top:96px;" width="12" height="12" viewBox="0 0 12 12"><path d="M2 9 Q0 5 3 3 Q6 0 10 2 Q12 4 10 7" fill="none" stroke="#a6a7aa" stroke-width="0.9" stroke-dasharray="1.2 1"/><path d="M6 6 L6 12 L7.5 10 L9.5 11.5Z" fill="#a6a7aa"/></svg>
<svg class="a" style="left:726px;top:96px;" width="12" height="12" viewBox="0 0 12 12"><rect x="1" y="1" width="10.5" height="10.5" fill="none" stroke="#a6a7aa" stroke-width="0.9" stroke-dasharray="1.2 1"/><path d="M10 2 L4 9 L2.5 11" stroke="#a6a7aa" stroke-width="1.3"/></svg>
<svg class="a" style="left:743px;top:96px;" width="12" height="12" viewBox="0 0 12 12"><path d="M1 6 L6 1 L11 6 V10.5 H1Z M1 6 L6 9 L11 6" fill="none" stroke="#a6a7aa" stroke-width="0.9"/></svg>
<svg class="a" style="left:760px;top:95px;" width="12" height="13" viewBox="0 0 12 13"><path d="M2 6 L6 2 L10 6 V9.5 H2Z M2 6 L6 8.5 L10 6" fill="none" stroke="#a6a7aa" stroke-width="0.9"/><path d="M0.5 12 H11.5" stroke="#a6a7aa" stroke-width="1.2"/></svg>
<svg class="a" style="left:776px;top:96px;" width="12" height="12" viewBox="0 0 12 12"><rect x="1" y="1" width="10.5" height="10.5" fill="none" stroke="#a6a7aa" stroke-width="0.9" stroke-dasharray="1.2 1"/><ellipse cx="6.5" cy="8" rx="4" ry="2.2" fill="#d6d7da" stroke="#a6a7aa" stroke-width="0.8"/><circle cx="6.5" cy="8" r="1" fill="#a6a7aa"/></svg>
<svg class="a" style="left:1014px;top:93px;" width="6" height="6" viewBox="0 0 6 6"><path d="M0.5 0.5 L5.5 5.5 L0.5 5.5Z" fill="#f4f4f4"/></svg>
<svg class="a" style="left:213px;top:538px;" width="80" height="40" viewBox="0 0 80 40"><path d="M16.3 19.4 V4" stroke="#20c020" stroke-width="1.5"/><text x="13.6" y="5.5" font-family="Liberation Sans" font-size="6.5" fill="#20c020">Y</text><path d="M16.3 19.4 L27 23.5" stroke="#e02020" stroke-width="1.5"/><text x="26.5" y="27.3" font-family="Liberation Sans" font-size="6.8" fill="#e02020">X</text><path d="M16.3 19.4 L6 27.5" stroke="#2020e0" stroke-width="1.5"/><text x="2" y="29.8" font-family="Liberation Sans" font-size="6.8" fill="#2020e0">Z</text><rect x="3.6" y="30.2" width="40.6" height="4.5" fill="#222"/><rect x="3.6" y="30.2" width="40.6" height="2.5" fill="#fafafa"/><text x="46.5" y="33.7" font-family="Liberation Sans" font-size="6.8" fill="#333" letter-spacing="-0.2">100 mm</text></svg>
<svg class="a" style="left:730px;top:278px;" width="100" height="32" viewBox="0 0 100 32"><path d="M12.3 22.3 V3.6" stroke="#8a9a40" stroke-width="0.9"/><path d="M12.3 22.3 L26.4 26.7" stroke="#8a9a40" stroke-width="0.9"/><path d="M12.3 22.3 L3 29.3" stroke="#8a9a40" stroke-width="0.9"/><circle cx="26.4" cy="26.7" r="1" fill="#c03030"/><text x="28.5" y="29" font-family="Liberation Sans" font-size="5.5" fill="#a03030">x</text><path d="M1 29.5 L4 28.5" stroke="#3030a0" stroke-width="1.2"/></svg>
<div class="t " style="left:747.8px;top:296.37px;font-size:7px;color:#8a9a50;font-weight:normal;">Początek Ukł. Współ.</div>
<svg class="a" style="left:206px;top:586px;" width="5" height="7" viewBox="0 0 5 7"><path d="M4.2 0.5 L0.8 3.5 L4.2 6.5Z" fill="none" stroke="#777" stroke-width="0.8"/></svg>
<svg class="a" style="left:214px;top:583px;" width="70" height="12.5" viewBox="0 0 70 12.5"><path d="M0 0 H69 L64.5 12.5 H4.5Z" fill="#dbe8f8"/></svg>
<div class="t " style="left:221.4px;top:585.20px;font-size:7.8px;color:#2a3a5a;font-weight:normal;letter-spacing:-0.1px">Widok Modelu</div>
<svg class="a" style="left:979px;top:586.5px;" width="5" height="7" viewBox="0 0 5 7"><path d="M0.8 0.5 L4.2 3.5 L0.8 6.5Z" fill="none" stroke="#888" stroke-width="0.8"/></svg>
<svg class="a" style="left:989.5px;top:587px;" width="7" height="7" viewBox="0 0 7 7"><path d="M1 1 L6 6 M6 1 L1 6" stroke="#666" stroke-width="1"/></svg>
<div class="a" style="left:999.8px;top:585.7px;width:9px;height:9px;background:#ffffff;border:0.5px solid #d8d8d8;box-sizing:border-box"></div>
<svg class="a" style="left:1000.5px;top:586.5px;" width="8" height="7" viewBox="0 0 8 7"><path d="M1 2.5 H4 V0.5 L7.5 3.5 L4 6.5 V4.5 H1Z" fill="#111"/></svg>
<div class="a" style="left:1011.5px;top:585.7px;width:9px;height:9px;background:#ffffff;border:0.5px solid #d8d8d8;box-sizing:border-box"></div>
<svg class="a" style="left:1012.5px;top:588.5px;" width="7" height="4" viewBox="0 0 7 4"><path d="M0.5 0.5 H6.5 L3.5 3.5Z" fill="#111"/></svg>
<div class="a" style="left:6.7px;top:601.6px;width:16px;height:13px;background:#76a83a"></div>
<svg class="a" style="left:8.5px;top:603px;" width="12.5" height="10.5" viewBox="0 0 12.5 10.5"><rect x="1" y="1" width="10" height="8.5" fill="none" stroke="#2a4a10" stroke-width="0.9"/><path d="M1 1 L3 3 M11 1 L9 3 M1 9.5 L3 7.5 M11 9.5 L9 7.5" stroke="#2a4a10" stroke-width="0.8"/></svg>
<div class="a" style="left:24px;top:602px;width:29.5px;height:12.5px;background:#ffffff;border:1px solid #c6c6c6;box-sizing:border-box"></div>
<div class="t " style="left:27px;top:604.21px;font-size:7.2px;color:#222;font-weight:normal;">Auto</div>
<svg class="a" style="left:45.5px;top:607px;" width="4" height="3" viewBox="0 0 4 3"><path d="M0 0 H4 L2 2.5Z" fill="#666"/></svg>
<div class="a" style="left:56.2px;top:602px;width:29.4px;height:12.5px;background:#ffffff;border:1px solid #c6c6c6;box-sizing:border-box"></div>
<div class="t " style="left:59.2px;top:604.21px;font-size:7.2px;color:#222;font-weight:normal;">Autc</div>
<svg class="a" style="left:77.6px;top:607px;" width="4" height="3" viewBox="0 0 4 3"><path d="M0 0 H4 L2 2.5Z" fill="#666"/></svg>
<svg class="a" style="left:90.5px;top:601px;" width="2" height="15" viewBox="0 0 2 15"><path d="M1 0 V15" stroke="#b0b0b0" stroke-width="1" stroke-dasharray="1 1.2"/></svg>
<svg class="a" style="left:105px;top:610px;" width="4" height="3" viewBox="0 0 4 3"><path d="M0 0 H4 L2 2.5Z" fill="#666"/></svg>
<svg class="a" style="left:674px;top:601px;" width="2" height="15" viewBox="0 0 2 15"><path d="M1 0 V15" stroke="#b0b0b0" stroke-width="1" stroke-dasharray="1 1.2"/></svg>
<svg class="a" style="left:681.0px;top:602px;" width="12" height="12" viewBox="0 0 12 12"><path d="M1 1 H11 V4 H8 V11 H4 V4 H1Z" fill="#8ab040" stroke="#333" stroke-width="0.7"/></svg>
<svg class="a" style="left:697.7px;top:602px;" width="12" height="12" viewBox="0 0 12 12"><path d="M1 2 H11 M1 10 H11 M1 2 V4 M11 2 V4 M1 6 H11" stroke="#333" stroke-width="0.9" fill="none"/><rect x="1" y="8" width="10" height="3" fill="#8ab040" stroke="#333" stroke-width="0.6"/></svg>
<svg class="a" style="left:714.4px;top:602px;" width="12" height="12" viewBox="0 0 12 12"><path d="M1 11 V1 Q10 1 11 11Z" fill="none" stroke="#333" stroke-width="0.9"/><path d="M1 11 L8 4" stroke="#8ab040" stroke-width="1.2"/></svg>
<svg class="a" style="left:731.1px;top:602px;" width="12" height="12" viewBox="0 0 12 12"><circle cx="6" cy="4.5" r="3.5" fill="none" stroke="#333" stroke-width="0.9"/><circle cx="6" cy="4.5" r="1" fill="#333"/><path d="M1 10.5 H11" stroke="#333" stroke-width="1.4"/></svg>
<svg class="a" style="left:747.8px;top:602px;" width="12" height="12" viewBox="0 0 12 12"><rect x="2" y="1" width="8" height="6" fill="#f4f4f4" stroke="#333" stroke-width="0.8"/><path d="M1 10.5 H11" stroke="#333" stroke-width="1.4"/><path d="M2 8 H10" stroke="#333" stroke-width="0.8"/></svg>
<svg class="a" style="left:764.5px;top:602px;" width="12" height="12" viewBox="0 0 12 12"><rect x="1" y="1" width="10" height="10" fill="#f4f4f4" stroke="#333" stroke-width="0.8"/><rect x="2.5" y="2.5" width="6" height="6" fill="#8ab040"/></svg>
<svg class="a" style="left:781.2px;top:602px;" width="12" height="12" viewBox="0 0 12 12"><rect x="1" y="1" width="10" height="10" fill="#f4f4f4" stroke="#333" stroke-width="0.8"/><rect x="2.5" y="2.5" width="6" height="6" fill="#444"/></svg>
<svg class="a" style="left:797.9px;top:602px;" width="12" height="12" viewBox="0 0 12 12"><path d="M3 2 Q6 0 9 2 Q12 6 9 10 Q6 12 3 10 Q0 6 3 2Z" fill="#f0f0f0" stroke="#a8a8a8" stroke-width="0.9"/></svg>
<svg class="a" style="left:816px;top:611px;" width="4" height="3" viewBox="0 0 4 3"><path d="M0 0 H4 L2 2.5Z" fill="#666"/></svg>
<div class="a" style="left:936.3px;top:619px;width:40px;height:10px;background:#848789"></div>
<div class="t " style="left:941.5px;top:621.07px;font-size:7px;color:#e8e8e8;font-weight:normal;letter-spacing:-0.3px">0:00:31.98</div>
<div class="a" style="left:977.3px;top:620px;width:6.5px;height:8px;background:#f4f4f4"></div>
<div class="a" style="left:986px;top:620px;width:20px;height:8px;background:#050505"></div>
<div class="a" style="left:987px;top:621px;width:1px;height:6px;background:#30c030"></div>
<div class="a" style="left:1008.6px;top:620px;width:8.4px;height:8px;background:#30b040"></div>
<svg class="a" style="left:1px;top:2px;" width="12" height="11" viewBox="0 0 12 11"><rect x="0.5" y="0.5" width="11" height="10.5" fill="#0e7a3c" rx="0.5"/><text x="1.2" y="8.3" font-family="Liberation Sans" font-weight="bold" font-size="7" fill="#f4f4f4">Cx</text></svg>
<svg class="a" style="left:18.5px;top:2px;" width="10" height="11" viewBox="0 0 10 11"><path d="M0.5 0.5 H7 L9.5 3 V10.5 H0.5Z" fill="#f4f6f8" stroke="#555" stroke-width="0.8"/><path d="M7 0.5 V3 H9.5" fill="none" stroke="#555" stroke-width="0.6"/></svg>
<svg class="a" style="left:32.5px;top:2px;" width="11" height="11" viewBox="0 0 11 11"><path d="M2.5 0.5 H8.5 L10.5 2.5 V10.5 H2.5Z" fill="#f4f6f8" stroke="#555" stroke-width="0.8"/><path d="M0 5.5 H5.5" stroke="#4aa030" stroke-width="1.5"/><path d="M4.5 3 L7 5.5 L4.5 8Z" fill="#4aa030"/></svg>
<svg class="a" style="left:46.3px;top:2px;" width="11" height="11" viewBox="0 0 11 11"><rect x="0.5" y="0.5" width="10" height="10" rx="1" fill="#3a3a3a"/><rect x="2" y="1" width="7" height="4.5" fill="#d8d8d8"/><rect x="2" y="1" width="7" height="0.8" fill="#e03030"/><rect x="3" y="7.5" width="5" height="2.5" fill="#f0f0f0"/></svg>
<svg class="a" style="left:61.3px;top:2px;" width="10" height="11" viewBox="0 0 10 11"><path d="M1 5 H9 L8 10.5 H1Z" fill="#f0f0f0" stroke="#d4d4d4" stroke-width="0.8"/><path d="M4 0.5 H6 V3 H7.5 L5 5.5 L2.5 3 H4Z" fill="#d4d4d4"/></svg>
<svg class="a" style="left:75px;top:2px;" width="11" height="11" viewBox="0 0 11 11"><path d="M0.5 4 H4 L5 5 H10.5 V10.5 H0.5Z" fill="#e8b830" stroke="#a07818" stroke-width="0.7"/><path d="M5 0.5 H7 V3 H8.5 L6 5.5 L3.5 3 H5Z" fill="#555"/></svg>
<svg class="a" style="left:88.8px;top:2px;" width="11" height="11" viewBox="0 0 11 11"><path d="M0.5 4 H4 L5 5 H10.5 V10.5 H0.5Z" fill="#e8b830" stroke="#a07818" stroke-width="0.7"/><circle cx="8" cy="3" r="2.3" fill="#555"/></svg>
<svg class="a" style="left:103.8px;top:3px;" width="8" height="9" viewBox="0 0 8 9"><path d="M7.5 8.5 V4.5 Q7.5 2.5 5 2.5 H2.5" fill="none" stroke="#c8c8c8" stroke-width="1.6"/><path d="M0 2.5 L3 0 V5Z" fill="#c8c8c8"/></svg>
<svg class="a" style="left:118.8px;top:3px;" width="8" height="9" viewBox="0 0 8 9"><path d="M0.5 2.5 V4.5 Q0.5 6.5 3 6.5 H5.5" fill="none" stroke="#c8c8c8" stroke-width="1.6"/><path d="M8 6.5 L5 4 V9Z" fill="#c8c8c8"/></svg>
<svg class="a" style="left:132px;top:6px;" width="4" height="5" viewBox="0 0 4 5"><path d="M0 0.5 H3.5 M0 1.8 L3.5 1.8 L1.75 4.2Z" stroke="#555" stroke-width="0.7" fill="#555"/></svg>
<div class="a" style="left:964.3px;top:8px;width:4.4px;height:1.1px;background:#444"></div>
<svg class="a" style="left:986.5px;top:4.5px;" width="7" height="7" viewBox="0 0 7 7"><rect x="0.5" y="2" width="4.5" height="4.5" fill="none" stroke="#555" stroke-width="0.8"/><path d="M2 2 V0.5 H6.5 V5 H5" fill="none" stroke="#555" stroke-width="0.8"/></svg>
<svg class="a" style="left:1009.5px;top:4.5px;" width="7" height="7" viewBox="0 0 7 7"><path d="M0.8 0.8 L6.2 6.2 M6.2 0.8 L0.8 6.2" stroke="#444" stroke-width="0.9"/></svg>
<svg class="a" style="left:174.5px;top:97px;" width="6" height="7" viewBox="0 0 6 7"><path d="M1 0.5 H5 M1.8 0.5 V3.5 H4.2 V0.5 M0.5 3.8 H5.5 M3 3.8 V6.8" stroke="#f0f0f0" stroke-width="0.9" fill="none"/></svg>
<svg class="a" style="left:187.3px;top:97.5px;" width="6" height="6" viewBox="0 0 6 6"><path d="M0.7 0.7 L5.2 5.2 M5.2 0.7 L0.7 5.2" stroke="#f0f0f0" stroke-width="1"/></svg>
<svg class="a" style="left:2px;top:602px;" width="3" height="13" viewBox="0 0 3 13"><path d="M1.5 0 V13" stroke="#b8b8b8" stroke-width="1" stroke-dasharray="1 1.3"/></svg>
</body></html>
